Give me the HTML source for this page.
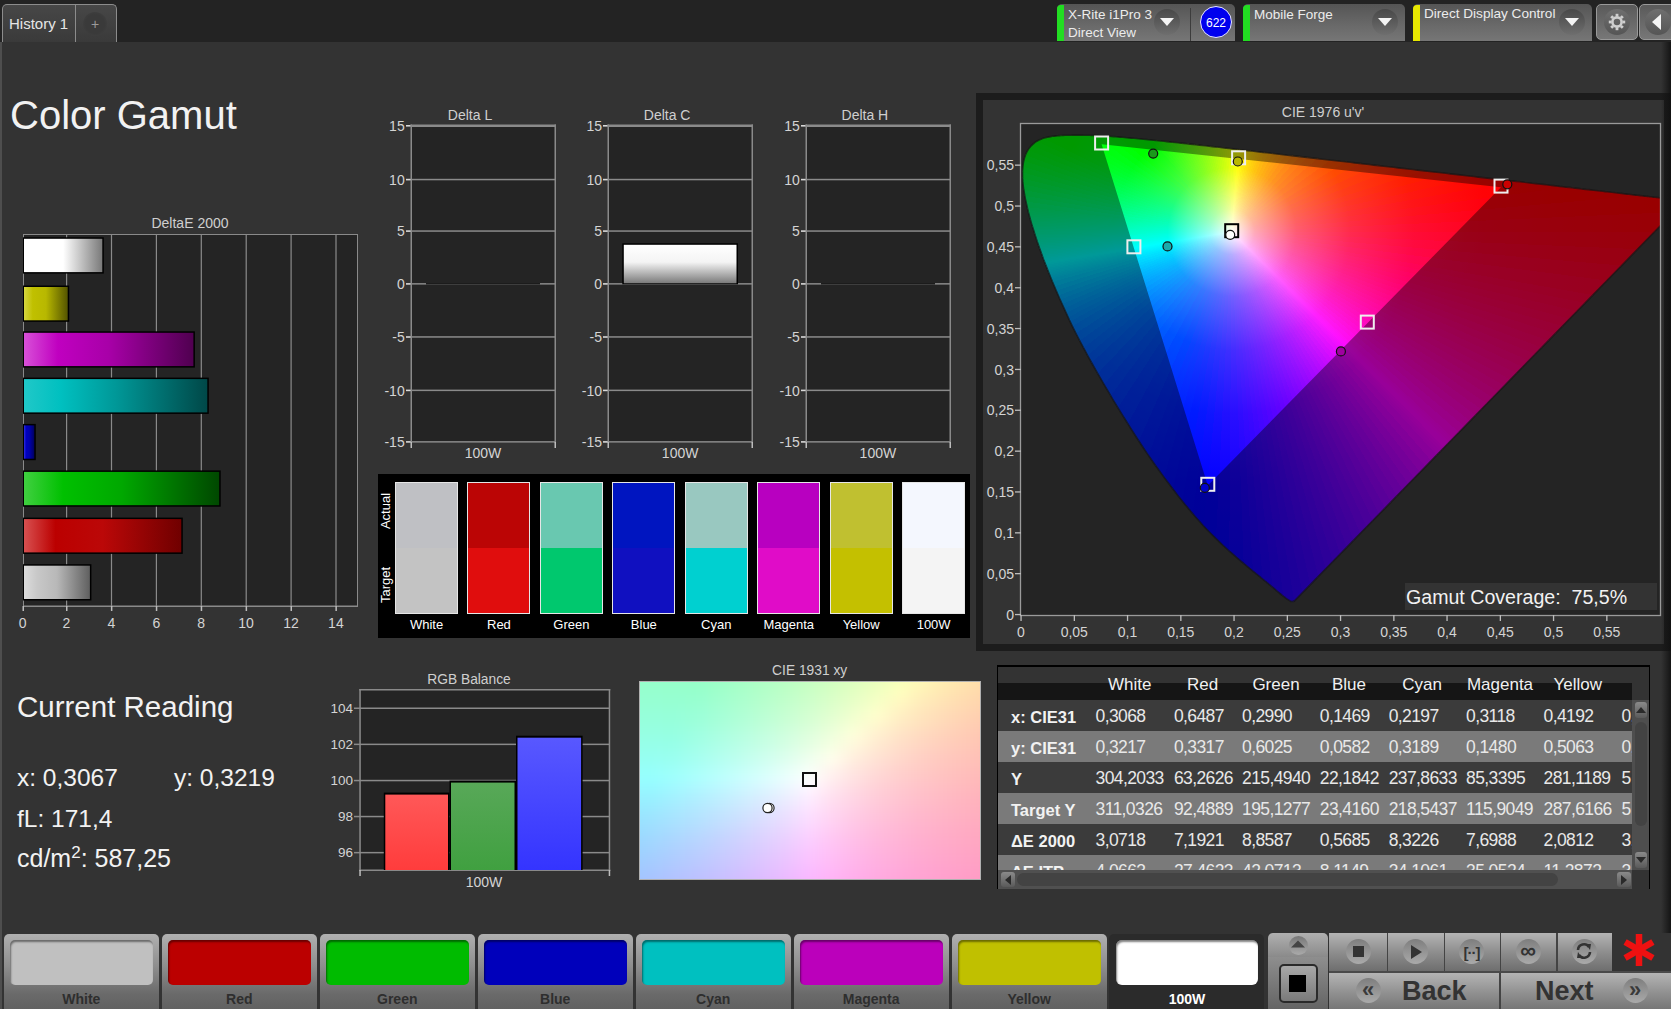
<!DOCTYPE html><html><head><meta charset="utf-8"><style>
html,body{margin:0;padding:0;}
body{width:1671px;height:1009px;overflow:hidden;position:relative;background:#333333;font-family:"Liberation Sans", sans-serif;}
.t{position:absolute;white-space:nowrap;line-height:1;}
.r{position:absolute;box-sizing:border-box;}
svg{position:absolute;left:0;top:0;}
</style></head><body>
<div class="r" style="left:0px;top:0px;width:1671px;height:42px;background:#232323"></div>
<div class="r" style="left:0px;top:42px;width:2px;height:967px;background:#4e4e4e"></div>
<div class="r" style="left:2px;top:4px;width:115px;height:38px;border:1px solid #8c8c8c;border-bottom:none;border-radius:5px 5px 0 0;background:linear-gradient(#474747,#3a3a3a)"></div>
<div class="r" style="left:75px;top:5px;width:1px;height:37px;background:#8c8c8c"></div>
<div class="r" style="left:83px;top:12px;width:24px;height:24px;border-radius:12px;background:radial-gradient(#3a3a3a 55%,#444 100%)"></div>
<div class="t" style="left:-105px;width:400px;text-align:center;top:17.15px;font-size:14px;color:#9a9a9a;font-weight:400;">+</div>
<div class="t" style="left:9px;top:16.3px;font-size:15px;color:#e6e6e6;font-weight:400;">History 1</div>
<div class="r" style="left:1057px;top:4px;width:178px;height:37px;border-radius:5px 5px 0 0;background:linear-gradient(#555 0%,#6a6a6a 60%,#767676 100%)"></div>
<div class="r" style="left:1057px;top:5px;width:7px;height:36px;background:#22dd22;border-radius:4px 0 0 0"></div>
<div class="r" style="left:1243px;top:4px;width:162px;height:37px;border-radius:5px 5px 0 0;background:linear-gradient(#555 0%,#6a6a6a 60%,#767676 100%)"></div>
<div class="r" style="left:1243px;top:5px;width:7px;height:36px;background:#22dd22;border-radius:4px 0 0 0"></div>
<div class="r" style="left:1413px;top:4px;width:179px;height:37px;border-radius:5px 5px 0 0;background:linear-gradient(#555 0%,#6a6a6a 60%,#767676 100%)"></div>
<div class="r" style="left:1413px;top:5px;width:7px;height:36px;background:#e8e800;border-radius:4px 0 0 0"></div>
<div class="r" style="left:1190px;top:8px;width:1px;height:33px;background:#3c3c3c"></div>
<div class="r" style="left:1200px;top:6px;width:32px;height:32px;border-radius:16px;background:#0000ee;border:1.5px solid #e8e8ff"></div>
<div class="t" style="left:1016px;width:400px;text-align:center;top:16.84px;font-size:12px;color:#ffffff;font-weight:400;">622</div>
<div class="t" style="left:1068px;top:7.57px;font-size:13.5px;color:#ececec;font-weight:400;">X-Rite i1Pro 3</div>
<div class="t" style="left:1068px;top:25.57px;font-size:13.5px;color:#ececec;font-weight:400;">Direct View</div>
<div class="t" style="left:1254px;top:7.57px;font-size:13.5px;color:#ececec;font-weight:400;">Mobile Forge</div>
<div class="t" style="left:1424px;top:7.49px;font-size:13.6px;color:#ececec;font-weight:400;">Direct Display Control</div>
<div class="r" style="left:1154px;top:9px;width:26px;height:26px;border-radius:13px;background:linear-gradient(#484848,#6e6e6e)"></div>
<svg style="left:1160px;top:18px" width="14" height="9"><path d="M0 0H14L7 8Z" fill="#f4f4f4"/></svg>
<div class="r" style="left:1372px;top:9px;width:26px;height:26px;border-radius:13px;background:linear-gradient(#484848,#6e6e6e)"></div>
<svg style="left:1378px;top:18px" width="14" height="9"><path d="M0 0H14L7 8Z" fill="#f4f4f4"/></svg>
<div class="r" style="left:1559px;top:9px;width:26px;height:26px;border-radius:13px;background:linear-gradient(#484848,#6e6e6e)"></div>
<svg style="left:1565px;top:18px" width="14" height="9"><path d="M0 0H14L7 8Z" fill="#f4f4f4"/></svg>
<div class="r" style="left:1596px;top:4px;width:42px;height:36px;border:1px solid #999;border-radius:5px;background:linear-gradient(#5a5a5a,#777)"></div>
<div class="r" style="left:1604px;top:9px;width:26px;height:26px;border-radius:13px;background:linear-gradient(#6f6f6f,#555)"></div>
<svg style="left:1607px;top:12px" width="20" height="20" viewBox="-10 -10 20 20"><g fill="none" stroke="#cfcfcf" stroke-width="2.6"><circle r="4.6"/></g><g stroke="#cfcfcf" stroke-width="2.8"><line x1="5.50" y1="0.00" x2="8.20" y2="0.00"/><line x1="3.89" y1="3.89" x2="5.80" y2="5.80"/><line x1="0.00" y1="5.50" x2="0.00" y2="8.20"/><line x1="-3.89" y1="3.89" x2="-5.80" y2="5.80"/><line x1="-5.50" y1="0.00" x2="-8.20" y2="0.00"/><line x1="-3.89" y1="-3.89" x2="-5.80" y2="-5.80"/><line x1="-0.00" y1="-5.50" x2="-0.00" y2="-8.20"/><line x1="3.89" y1="-3.89" x2="5.80" y2="-5.80"/></g></svg>
<div class="r" style="left:1639px;top:4px;width:40px;height:36px;border:1px solid #999;border-radius:5px;background:linear-gradient(#5a5a5a,#777)"></div>
<div class="r" style="left:1645px;top:9px;width:26px;height:26px;border-radius:13px;background:linear-gradient(#6f6f6f,#555)"></div>
<svg style="left:1652px;top:14px" width="10" height="16"><path d="M9 0V16L0 8Z" fill="#f4f4f4"/></svg>
<div class="t" style="left:10px;top:95.14px;font-size:40px;color:#f2f2f2;font-weight:400;">Color Gamut</div>
<div class="t" style="left:-10px;width:400px;text-align:center;top:216.15px;font-size:14px;color:#cfcfcf;font-weight:400;">DeltaE 2000</div>
<div class="r" style="left:23px;top:234px;width:335px;height:373px;background:#242424;border:1px solid #8a8a8a;border-right:none"></div>
<svg width="1671" height="1009" style="left:0;top:0"><rect x="66.0" y="234" width="1.2" height="373" fill="#8a8a8a"/><rect x="110.9" y="234" width="1.2" height="373" fill="#8a8a8a"/><rect x="155.8" y="234" width="1.2" height="373" fill="#8a8a8a"/><rect x="200.7" y="234" width="1.2" height="373" fill="#8a8a8a"/><rect x="245.6" y="234" width="1.2" height="373" fill="#8a8a8a"/><rect x="290.5" y="234" width="1.2" height="373" fill="#8a8a8a"/><rect x="335.4" y="234" width="1.2" height="373" fill="#8a8a8a"/><rect x="357" y="234" width="1" height="373" fill="#8a8a8a"/><rect x="23" y="605.5" width="335" height="1.5" fill="#8a8a8a"/><rect x="22.5" y="606" width="1.5" height="5" fill="#bdbdbd"/><rect x="66.0" y="606" width="1.5" height="5" fill="#bdbdbd"/><rect x="110.9" y="606" width="1.5" height="5" fill="#bdbdbd"/><rect x="155.8" y="606" width="1.5" height="5" fill="#bdbdbd"/><rect x="200.7" y="606" width="1.5" height="5" fill="#bdbdbd"/><rect x="245.6" y="606" width="1.5" height="5" fill="#bdbdbd"/><rect x="290.5" y="606" width="1.5" height="5" fill="#bdbdbd"/><rect x="335.4" y="606" width="1.5" height="5" fill="#bdbdbd"/><linearGradient id="db0" x1="0" x2="1" y1="0" y2="0" gradientTransform="rotate(0)"><stop offset="0" stop-color="#ffffff"/><stop offset="0.2" stop-color="#ffffff"/><stop offset="0.5" stop-color="#ffffff"/><stop offset="1" stop-color="#7a7a7a"/></linearGradient><rect x="23" y="237.3" width="80.8" height="36.3" fill="#000"/><rect x="24" y="238.8" width="78.3" height="33.3" fill="url(#db0)"/><linearGradient id="db1" x1="0" x2="1" y1="0" y2="0" gradientTransform="rotate(0)"><stop offset="0" stop-color="#d8d840"/><stop offset="0.2" stop-color="#c0c000"/><stop offset="0.5" stop-color="#b8b800"/><stop offset="1" stop-color="#555500"/></linearGradient><rect x="23" y="285.5" width="46.2" height="36.3" fill="#000"/><rect x="24" y="287.0" width="43.7" height="33.3" fill="url(#db1)"/><linearGradient id="db2" x1="0" x2="1" y1="0" y2="0" gradientTransform="rotate(0)"><stop offset="0" stop-color="#d850d8"/><stop offset="0.2" stop-color="#c000c0"/><stop offset="0.5" stop-color="#a800a8"/><stop offset="1" stop-color="#500050"/></linearGradient><rect x="23" y="331.3" width="171.9" height="36.3" fill="#000"/><rect x="24" y="332.8" width="169.4" height="33.3" fill="url(#db2)"/><linearGradient id="db3" x1="0" x2="1" y1="0" y2="0" gradientTransform="rotate(0)"><stop offset="0" stop-color="#20c8c8"/><stop offset="0.2" stop-color="#00c0c0"/><stop offset="0.5" stop-color="#009898"/><stop offset="1" stop-color="#004848"/></linearGradient><rect x="23" y="377.6" width="185.8" height="36.3" fill="#000"/><rect x="24" y="379.1" width="183.3" height="33.3" fill="url(#db3)"/><linearGradient id="db4" x1="0" x2="1" y1="0" y2="0" gradientTransform="rotate(0)"><stop offset="0" stop-color="#3030e0"/><stop offset="0.2" stop-color="#0000c0"/><stop offset="0.5" stop-color="#0000b0"/><stop offset="1" stop-color="#000060"/></linearGradient><rect x="23" y="423.9" width="12.8" height="36.3" fill="#000"/><rect x="24" y="425.4" width="10.3" height="33.3" fill="url(#db4)"/><linearGradient id="db5" x1="0" x2="1" y1="0" y2="0" gradientTransform="rotate(0)"><stop offset="0" stop-color="#40d040"/><stop offset="0.2" stop-color="#00c000"/><stop offset="0.5" stop-color="#00a800"/><stop offset="1" stop-color="#004800"/></linearGradient><rect x="23" y="470.4" width="197.7" height="36.3" fill="#000"/><rect x="24" y="471.9" width="195.2" height="33.3" fill="url(#db5)"/><linearGradient id="db6" x1="0" x2="1" y1="0" y2="0" gradientTransform="rotate(0)"><stop offset="0" stop-color="#d85050"/><stop offset="0.2" stop-color="#bb0000"/><stop offset="0.5" stop-color="#bb0808"/><stop offset="1" stop-color="#700000"/></linearGradient><rect x="23" y="517.6" width="159.8" height="36.3" fill="#000"/><rect x="24" y="519.1" width="157.3" height="33.3" fill="url(#db6)"/><linearGradient id="db7" x1="0" x2="1" y1="0" y2="0" gradientTransform="rotate(0)"><stop offset="0" stop-color="#dcdcdc"/><stop offset="0.2" stop-color="#c8c8c8"/><stop offset="0.5" stop-color="#b8b8b8"/><stop offset="1" stop-color="#606060"/></linearGradient><rect x="23" y="564.2" width="68.4" height="36.3" fill="#000"/><rect x="24" y="565.7" width="65.9" height="33.3" fill="url(#db7)"/></svg>
<div class="t" style="left:-177.4px;width:400px;text-align:center;top:616.15px;font-size:14px;color:#d4d4d4;font-weight:400;">0</div>
<div class="t" style="left:-133.5px;width:400px;text-align:center;top:616.15px;font-size:14px;color:#d4d4d4;font-weight:400;">2</div>
<div class="t" style="left:-88.6px;width:400px;text-align:center;top:616.15px;font-size:14px;color:#d4d4d4;font-weight:400;">4</div>
<div class="t" style="left:-43.70000000000002px;width:400px;text-align:center;top:616.15px;font-size:14px;color:#d4d4d4;font-weight:400;">6</div>
<div class="t" style="left:1.1999999999999886px;width:400px;text-align:center;top:616.15px;font-size:14px;color:#d4d4d4;font-weight:400;">8</div>
<div class="t" style="left:46.099999999999994px;width:400px;text-align:center;top:616.15px;font-size:14px;color:#d4d4d4;font-weight:400;">10</div>
<div class="t" style="left:91.0px;width:400px;text-align:center;top:616.15px;font-size:14px;color:#d4d4d4;font-weight:400;">12</div>
<div class="t" style="left:135.90000000000003px;width:400px;text-align:center;top:616.15px;font-size:14px;color:#d4d4d4;font-weight:400;">14</div>
<svg width="1671" height="1009" style="left:0;top:0"><rect x="411" y="125" width="144" height="317" fill="#242424"/><rect x="411" y="125.0" width="145" height="1.5" fill="#8a8a8a"/><rect x="406" y="125.0" width="5" height="1.6" fill="#d8d8d8"/><rect x="411" y="178.8" width="145" height="1.5" fill="#8a8a8a"/><rect x="406" y="178.8" width="5" height="1.6" fill="#d8d8d8"/><rect x="411" y="230.3" width="145" height="1.5" fill="#8a8a8a"/><rect x="406" y="230.3" width="5" height="1.6" fill="#d8d8d8"/><rect x="411" y="283.1" width="145" height="1.5" fill="#8a8a8a"/><rect x="406" y="283.1" width="5" height="1.6" fill="#d8d8d8"/><rect x="411" y="336.2" width="145" height="1.5" fill="#8a8a8a"/><rect x="406" y="336.2" width="5" height="1.6" fill="#d8d8d8"/><rect x="411" y="389.6" width="145" height="1.5" fill="#8a8a8a"/><rect x="406" y="389.6" width="5" height="1.6" fill="#d8d8d8"/><rect x="411" y="441.1" width="145" height="1.5" fill="#8a8a8a"/><rect x="406" y="441.1" width="5" height="1.6" fill="#d8d8d8"/><rect x="410.5" y="124.5" width="1.5" height="318" fill="#8a8a8a"/><rect x="554.5" y="124.5" width="1.5" height="318" fill="#8a8a8a"/><rect x="410.5" y="124.5" width="145.5" height="2.5" fill="#8a8a8a"/><rect x="410.5" y="442" width="1.5" height="6" fill="#bdbdbd"/><rect x="554.5" y="442" width="1.5" height="6" fill="#bdbdbd"/><rect x="426" y="283" width="114" height="1.5" fill="#1c1c1c"/><rect x="608" y="125" width="144" height="317" fill="#242424"/><rect x="608" y="125.0" width="145" height="1.5" fill="#8a8a8a"/><rect x="603" y="125.0" width="5" height="1.6" fill="#d8d8d8"/><rect x="608" y="178.8" width="145" height="1.5" fill="#8a8a8a"/><rect x="603" y="178.8" width="5" height="1.6" fill="#d8d8d8"/><rect x="608" y="230.3" width="145" height="1.5" fill="#8a8a8a"/><rect x="603" y="230.3" width="5" height="1.6" fill="#d8d8d8"/><rect x="608" y="283.1" width="145" height="1.5" fill="#8a8a8a"/><rect x="603" y="283.1" width="5" height="1.6" fill="#d8d8d8"/><rect x="608" y="336.2" width="145" height="1.5" fill="#8a8a8a"/><rect x="603" y="336.2" width="5" height="1.6" fill="#d8d8d8"/><rect x="608" y="389.6" width="145" height="1.5" fill="#8a8a8a"/><rect x="603" y="389.6" width="5" height="1.6" fill="#d8d8d8"/><rect x="608" y="441.1" width="145" height="1.5" fill="#8a8a8a"/><rect x="603" y="441.1" width="5" height="1.6" fill="#d8d8d8"/><rect x="607.5" y="124.5" width="1.5" height="318" fill="#8a8a8a"/><rect x="751.5" y="124.5" width="1.5" height="318" fill="#8a8a8a"/><rect x="607.5" y="124.5" width="145.5" height="2.5" fill="#8a8a8a"/><rect x="607.5" y="442" width="1.5" height="6" fill="#bdbdbd"/><rect x="751.5" y="442" width="1.5" height="6" fill="#bdbdbd"/><linearGradient id="dcb" x1="0" x2="0" y1="0" y2="1"><stop offset="0" stop-color="#fff"/><stop offset="0.45" stop-color="#f4f4f4"/><stop offset="1" stop-color="#7a7a7a"/></linearGradient><rect x="622.3" y="243.3" width="115.7" height="41" fill="#000"/><rect x="623.8" y="244.8" width="112.7" height="38.5" fill="url(#dcb)"/><rect x="806" y="125" width="144" height="317" fill="#242424"/><rect x="806" y="125.0" width="145" height="1.5" fill="#8a8a8a"/><rect x="801" y="125.0" width="5" height="1.6" fill="#d8d8d8"/><rect x="806" y="178.8" width="145" height="1.5" fill="#8a8a8a"/><rect x="801" y="178.8" width="5" height="1.6" fill="#d8d8d8"/><rect x="806" y="230.3" width="145" height="1.5" fill="#8a8a8a"/><rect x="801" y="230.3" width="5" height="1.6" fill="#d8d8d8"/><rect x="806" y="283.1" width="145" height="1.5" fill="#8a8a8a"/><rect x="801" y="283.1" width="5" height="1.6" fill="#d8d8d8"/><rect x="806" y="336.2" width="145" height="1.5" fill="#8a8a8a"/><rect x="801" y="336.2" width="5" height="1.6" fill="#d8d8d8"/><rect x="806" y="389.6" width="145" height="1.5" fill="#8a8a8a"/><rect x="801" y="389.6" width="5" height="1.6" fill="#d8d8d8"/><rect x="806" y="441.1" width="145" height="1.5" fill="#8a8a8a"/><rect x="801" y="441.1" width="5" height="1.6" fill="#d8d8d8"/><rect x="805.5" y="124.5" width="1.5" height="318" fill="#8a8a8a"/><rect x="949.5" y="124.5" width="1.5" height="318" fill="#8a8a8a"/><rect x="805.5" y="124.5" width="145.5" height="2.5" fill="#8a8a8a"/><rect x="805.5" y="442" width="1.5" height="6" fill="#bdbdbd"/><rect x="949.5" y="442" width="1.5" height="6" fill="#bdbdbd"/><rect x="821" y="283" width="114" height="1.5" fill="#1c1c1c"/></svg>
<div class="t" style="left:270.0px;width:400px;text-align:center;top:108.15px;font-size:14px;color:#cfcfcf;font-weight:400;">Delta L</div>
<div class="t" style="left:4.699999999999989px;width:400px;text-align:right;top:118.85px;font-size:14px;color:#d4d4d4;font-weight:400;">15</div>
<div class="t" style="left:4.699999999999989px;width:400px;text-align:right;top:172.65px;font-size:14px;color:#d4d4d4;font-weight:400;">10</div>
<div class="t" style="left:4.699999999999989px;width:400px;text-align:right;top:224.25px;font-size:14px;color:#d4d4d4;font-weight:400;">5</div>
<div class="t" style="left:4.699999999999989px;width:400px;text-align:right;top:277.05px;font-size:14px;color:#d4d4d4;font-weight:400;">0</div>
<div class="t" style="left:4.699999999999989px;width:400px;text-align:right;top:330.15px;font-size:14px;color:#d4d4d4;font-weight:400;">-5</div>
<div class="t" style="left:4.699999999999989px;width:400px;text-align:right;top:383.55px;font-size:14px;color:#d4d4d4;font-weight:400;">-10</div>
<div class="t" style="left:4.699999999999989px;width:400px;text-align:right;top:434.95px;font-size:14px;color:#d4d4d4;font-weight:400;">-15</div>
<div class="t" style="left:283.0px;width:400px;text-align:center;top:446.15px;font-size:14px;color:#d4d4d4;font-weight:400;">100W</div>
<div class="t" style="left:467.15px;width:400px;text-align:center;top:108.15px;font-size:14px;color:#cfcfcf;font-weight:400;">Delta C</div>
<div class="t" style="left:202px;width:400px;text-align:right;top:118.85px;font-size:14px;color:#d4d4d4;font-weight:400;">15</div>
<div class="t" style="left:202px;width:400px;text-align:right;top:172.65px;font-size:14px;color:#d4d4d4;font-weight:400;">10</div>
<div class="t" style="left:202px;width:400px;text-align:right;top:224.25px;font-size:14px;color:#d4d4d4;font-weight:400;">5</div>
<div class="t" style="left:202px;width:400px;text-align:right;top:277.05px;font-size:14px;color:#d4d4d4;font-weight:400;">0</div>
<div class="t" style="left:202px;width:400px;text-align:right;top:330.15px;font-size:14px;color:#d4d4d4;font-weight:400;">-5</div>
<div class="t" style="left:202px;width:400px;text-align:right;top:383.55px;font-size:14px;color:#d4d4d4;font-weight:400;">-10</div>
<div class="t" style="left:202px;width:400px;text-align:right;top:434.95px;font-size:14px;color:#d4d4d4;font-weight:400;">-15</div>
<div class="t" style="left:480.15px;width:400px;text-align:center;top:446.15px;font-size:14px;color:#d4d4d4;font-weight:400;">100W</div>
<div class="t" style="left:664.9px;width:400px;text-align:center;top:108.15px;font-size:14px;color:#cfcfcf;font-weight:400;">Delta H</div>
<div class="t" style="left:399.79999999999995px;width:400px;text-align:right;top:118.85px;font-size:14px;color:#d4d4d4;font-weight:400;">15</div>
<div class="t" style="left:399.79999999999995px;width:400px;text-align:right;top:172.65px;font-size:14px;color:#d4d4d4;font-weight:400;">10</div>
<div class="t" style="left:399.79999999999995px;width:400px;text-align:right;top:224.25px;font-size:14px;color:#d4d4d4;font-weight:400;">5</div>
<div class="t" style="left:399.79999999999995px;width:400px;text-align:right;top:277.05px;font-size:14px;color:#d4d4d4;font-weight:400;">0</div>
<div class="t" style="left:399.79999999999995px;width:400px;text-align:right;top:330.15px;font-size:14px;color:#d4d4d4;font-weight:400;">-5</div>
<div class="t" style="left:399.79999999999995px;width:400px;text-align:right;top:383.55px;font-size:14px;color:#d4d4d4;font-weight:400;">-10</div>
<div class="t" style="left:399.79999999999995px;width:400px;text-align:right;top:434.95px;font-size:14px;color:#d4d4d4;font-weight:400;">-15</div>
<div class="t" style="left:677.9px;width:400px;text-align:center;top:446.15px;font-size:14px;color:#d4d4d4;font-weight:400;">100W</div>
<div class="r" style="left:378px;top:474px;width:592px;height:164px;background:#000"></div>
<div class="r" style="left:395.0px;top:482px;width:63px;height:132px;border:1px solid #e6e6e6;background:linear-gradient(#bfc0c4 50%,#c3c3c3 50%)"></div>
<div class="t" style="left:226.5px;width:400px;text-align:center;top:618.0px;font-size:13px;color:#ffffff;font-weight:400;">White</div>
<div class="r" style="left:467.4px;top:482px;width:63px;height:132px;border:1px solid #e6e6e6;background:linear-gradient(#bb0505 50%,#e00d0d 50%)"></div>
<div class="t" style="left:298.95px;width:400px;text-align:center;top:618.0px;font-size:13px;color:#ffffff;font-weight:400;">Red</div>
<div class="r" style="left:539.9px;top:482px;width:63px;height:132px;border:1px solid #e6e6e6;background:linear-gradient(#69c8b0 50%,#00c86e 50%)"></div>
<div class="t" style="left:371.4px;width:400px;text-align:center;top:618.0px;font-size:13px;color:#ffffff;font-weight:400;">Green</div>
<div class="r" style="left:612.4px;top:482px;width:63px;height:132px;border:1px solid #e6e6e6;background:linear-gradient(#0015c0 50%,#1010c0 50%)"></div>
<div class="t" style="left:443.85px;width:400px;text-align:center;top:618.0px;font-size:13px;color:#ffffff;font-weight:400;">Blue</div>
<div class="r" style="left:684.8px;top:482px;width:63px;height:132px;border:1px solid #e6e6e6;background:linear-gradient(#99c8c0 50%,#00d0d0 50%)"></div>
<div class="t" style="left:516.3px;width:400px;text-align:center;top:618.0px;font-size:13px;color:#ffffff;font-weight:400;">Cyan</div>
<div class="r" style="left:757.2px;top:482px;width:63px;height:132px;border:1px solid #e6e6e6;background:linear-gradient(#b800c0 50%,#e00cc8 50%)"></div>
<div class="t" style="left:588.75px;width:400px;text-align:center;top:618.0px;font-size:13px;color:#ffffff;font-weight:400;">Magenta</div>
<div class="r" style="left:829.7px;top:482px;width:63px;height:132px;border:1px solid #e6e6e6;background:linear-gradient(#c0c030 50%,#c4c000 50%)"></div>
<div class="t" style="left:661.2px;width:400px;text-align:center;top:618.0px;font-size:13px;color:#ffffff;font-weight:400;">Yellow</div>
<div class="r" style="left:902.2px;top:482px;width:63px;height:132px;border:1px solid #e6e6e6;background:linear-gradient(#f4f7fe 50%,#f4f4f4 50%)"></div>
<div class="t" style="left:733.6500000000001px;width:400px;text-align:center;top:618.0px;font-size:13px;color:#ffffff;font-weight:400;">100W</div>
<div class="t" style="left:356px;top:503px;width:60px;height:16px;text-align:center;font-size:13px;line-height:16px;color:#fff;transform:rotate(-90deg)">Actual</div>
<div class="t" style="left:356px;top:577px;width:60px;height:16px;text-align:center;font-size:13px;line-height:16px;color:#fff;transform:rotate(-90deg)">Target</div>
<div class="r" style="left:976px;top:93px;width:695px;height:558px;background:#1c1c1c"></div>
<div class="r" style="left:983px;top:100px;width:681px;height:544px;background:#333333"></div>
<div class="t" style="left:1123px;width:400px;text-align:center;top:105.15px;font-size:14px;color:#cfcfcf;font-weight:400;">CIE 1976 u'v'</div>
<svg width="1671" height="1009" style="left:0;top:0"><defs><linearGradient id="f0" gradientUnits="userSpaceOnUse" x1="1232" y1="232" x2="1952" y2="248"><stop offset="0" stop-color="#ffffff"/><stop offset="0.0316" stop-color="#ffaab9"/><stop offset="0.0894" stop-color="#ff5b78"/><stop offset="0.164" stop-color="#ff2a50"/><stop offset="0.253" stop-color="#ff0c37"/><stop offset="0.354" stop-color="#ff0026"/><stop offset="0.465" stop-color="#ff001b"/><stop offset="0.586" stop-color="#ff0013"/></linearGradient><linearGradient id="f1" gradientUnits="userSpaceOnUse" x1="1232" y1="232" x2="1950" y2="279"><stop offset="0" stop-color="#ffffff"/><stop offset="0.0316" stop-color="#ffa9bc"/><stop offset="0.0894" stop-color="#ff5a7e"/><stop offset="0.164" stop-color="#ff2857"/><stop offset="0.253" stop-color="#ff0a3f"/><stop offset="0.354" stop-color="#ff002f"/><stop offset="0.465" stop-color="#ff0024"/><stop offset="0.586" stop-color="#ff001d"/></linearGradient><linearGradient id="f2" gradientUnits="userSpaceOnUse" x1="1232" y1="232" x2="1947" y2="310"><stop offset="0" stop-color="#ffffff"/><stop offset="0.0316" stop-color="#ffa9bf"/><stop offset="0.0894" stop-color="#ff5984"/><stop offset="0.164" stop-color="#ff275e"/><stop offset="0.253" stop-color="#ff0847"/><stop offset="0.354" stop-color="#ff0038"/><stop offset="0.465" stop-color="#ff002e"/><stop offset="0.586" stop-color="#ff0026"/></linearGradient><linearGradient id="f3" gradientUnits="userSpaceOnUse" x1="1232" y1="232" x2="1943" y2="341"><stop offset="0" stop-color="#ffffff"/><stop offset="0.0316" stop-color="#ffa9c2"/><stop offset="0.0894" stop-color="#ff588a"/><stop offset="0.164" stop-color="#ff2566"/><stop offset="0.253" stop-color="#ff0650"/><stop offset="0.354" stop-color="#ff0041"/><stop offset="0.465" stop-color="#ff0037"/><stop offset="0.586" stop-color="#ff0030"/></linearGradient><linearGradient id="f4" gradientUnits="userSpaceOnUse" x1="1232" y1="232" x2="1939" y2="366"><stop offset="0" stop-color="#ffffff"/><stop offset="0.0316" stop-color="#ffa9c5"/><stop offset="0.0894" stop-color="#ff588f"/><stop offset="0.164" stop-color="#ff246c"/><stop offset="0.253" stop-color="#ff0457"/><stop offset="0.354" stop-color="#ff0049"/><stop offset="0.465" stop-color="#ff003f"/><stop offset="0.586" stop-color="#ff0038"/></linearGradient><linearGradient id="f5" gradientUnits="userSpaceOnUse" x1="1232" y1="232" x2="1935" y2="385"><stop offset="0" stop-color="#ffffff"/><stop offset="0.0316" stop-color="#ffa9c7"/><stop offset="0.0894" stop-color="#ff5793"/><stop offset="0.164" stop-color="#ff2471"/><stop offset="0.253" stop-color="#ff035c"/><stop offset="0.354" stop-color="#ff004e"/><stop offset="0.465" stop-color="#ff0045"/><stop offset="0.586" stop-color="#ff003e"/></linearGradient><linearGradient id="f6" gradientUnits="userSpaceOnUse" x1="1232" y1="232" x2="1931" y2="403"><stop offset="0" stop-color="#ffffff"/><stop offset="0.0316" stop-color="#ffa9ca"/><stop offset="0.0894" stop-color="#ff5797"/><stop offset="0.164" stop-color="#ff2376"/><stop offset="0.253" stop-color="#ff0262"/><stop offset="0.354" stop-color="#ff0054"/><stop offset="0.465" stop-color="#ff004b"/><stop offset="0.586" stop-color="#ff0044"/></linearGradient><linearGradient id="f7" gradientUnits="userSpaceOnUse" x1="1232" y1="232" x2="1926" y2="421"><stop offset="0" stop-color="#ffffff"/><stop offset="0.0316" stop-color="#ffa9cc"/><stop offset="0.0894" stop-color="#ff579b"/><stop offset="0.164" stop-color="#ff227b"/><stop offset="0.253" stop-color="#ff0167"/><stop offset="0.354" stop-color="#ff005a"/><stop offset="0.465" stop-color="#ff0051"/><stop offset="0.586" stop-color="#ff004b"/></linearGradient><linearGradient id="f8" gradientUnits="userSpaceOnUse" x1="1232" y1="232" x2="1921" y2="439"><stop offset="0" stop-color="#ffffff"/><stop offset="0.0316" stop-color="#ffa9ce"/><stop offset="0.0894" stop-color="#ff579f"/><stop offset="0.164" stop-color="#ff2280"/><stop offset="0.253" stop-color="#ff006d"/><stop offset="0.354" stop-color="#ff0060"/><stop offset="0.465" stop-color="#ff0058"/><stop offset="0.586" stop-color="#ff0051"/></linearGradient><linearGradient id="f9" gradientUnits="userSpaceOnUse" x1="1232" y1="232" x2="1915" y2="457"><stop offset="0" stop-color="#ffffff"/><stop offset="0.0316" stop-color="#ffa9d0"/><stop offset="0.0894" stop-color="#ff57a3"/><stop offset="0.164" stop-color="#ff2186"/><stop offset="0.253" stop-color="#ff0073"/><stop offset="0.354" stop-color="#ff0067"/><stop offset="0.465" stop-color="#ff005e"/><stop offset="0.586" stop-color="#ff0058"/></linearGradient><linearGradient id="f10" gradientUnits="userSpaceOnUse" x1="1232" y1="232" x2="1909" y2="475"><stop offset="0" stop-color="#ffffff"/><stop offset="0.0316" stop-color="#ffaad3"/><stop offset="0.0894" stop-color="#ff56a7"/><stop offset="0.164" stop-color="#ff208b"/><stop offset="0.253" stop-color="#ff0079"/><stop offset="0.354" stop-color="#ff006d"/><stop offset="0.465" stop-color="#ff0065"/></linearGradient><linearGradient id="f11" gradientUnits="userSpaceOnUse" x1="1232" y1="232" x2="1903" y2="493"><stop offset="0" stop-color="#ffffff"/><stop offset="0.0316" stop-color="#ffaad5"/><stop offset="0.0894" stop-color="#ff56ac"/><stop offset="0.164" stop-color="#ff2091"/><stop offset="0.253" stop-color="#ff007f"/><stop offset="0.354" stop-color="#ff0074"/><stop offset="0.465" stop-color="#ff006c"/></linearGradient><linearGradient id="f12" gradientUnits="userSpaceOnUse" x1="1232" y1="232" x2="1896" y2="510"><stop offset="0" stop-color="#ffffff"/><stop offset="0.0316" stop-color="#ffaad7"/><stop offset="0.0894" stop-color="#ff57b0"/><stop offset="0.164" stop-color="#ff2096"/><stop offset="0.253" stop-color="#ff0086"/><stop offset="0.354" stop-color="#ff007b"/><stop offset="0.465" stop-color="#ff0073"/></linearGradient><linearGradient id="f13" gradientUnits="userSpaceOnUse" x1="1232" y1="232" x2="1888" y2="528"><stop offset="0" stop-color="#ffffff"/><stop offset="0.0316" stop-color="#ffabda"/><stop offset="0.0894" stop-color="#ff57b5"/><stop offset="0.164" stop-color="#ff1f9c"/><stop offset="0.253" stop-color="#ff008c"/><stop offset="0.354" stop-color="#ff0082"/><stop offset="0.465" stop-color="#ff007a"/></linearGradient><linearGradient id="f14" gradientUnits="userSpaceOnUse" x1="1232" y1="232" x2="1880" y2="545"><stop offset="0" stop-color="#ffffff"/><stop offset="0.0316" stop-color="#ffabdc"/><stop offset="0.0894" stop-color="#ff57b9"/><stop offset="0.164" stop-color="#ff1fa2"/><stop offset="0.253" stop-color="#ff0093"/><stop offset="0.354" stop-color="#ff0089"/><stop offset="0.465" stop-color="#ff0082"/></linearGradient><linearGradient id="f15" gradientUnits="userSpaceOnUse" x1="1232" y1="232" x2="1872" y2="562"><stop offset="0" stop-color="#ffffff"/><stop offset="0.0316" stop-color="#ffacdf"/><stop offset="0.0894" stop-color="#ff57be"/><stop offset="0.164" stop-color="#ff1fa8"/><stop offset="0.253" stop-color="#ff009a"/><stop offset="0.354" stop-color="#ff0090"/><stop offset="0.465" stop-color="#ff008a"/></linearGradient><linearGradient id="f16" gradientUnits="userSpaceOnUse" x1="1232" y1="232" x2="1863" y2="578"><stop offset="0" stop-color="#ffffff"/><stop offset="0.0316" stop-color="#fface1"/><stop offset="0.0894" stop-color="#ff58c3"/><stop offset="0.164" stop-color="#ff1eae"/><stop offset="0.253" stop-color="#ff00a1"/><stop offset="0.354" stop-color="#ff0098"/><stop offset="0.465" stop-color="#ff0092"/></linearGradient><linearGradient id="f17" gradientUnits="userSpaceOnUse" x1="1232" y1="232" x2="1854" y2="595"><stop offset="0" stop-color="#ffffff"/><stop offset="0.0316" stop-color="#ffade4"/><stop offset="0.0894" stop-color="#ff58c8"/><stop offset="0.164" stop-color="#ff1eb5"/><stop offset="0.253" stop-color="#ff00a8"/><stop offset="0.354" stop-color="#ff00a0"/><stop offset="0.465" stop-color="#ff009a"/></linearGradient><linearGradient id="f18" gradientUnits="userSpaceOnUse" x1="1232" y1="232" x2="1844" y2="611"><stop offset="0" stop-color="#ffffff"/><stop offset="0.0316" stop-color="#ffade7"/><stop offset="0.0894" stop-color="#ff58cd"/><stop offset="0.164" stop-color="#ff1ebc"/><stop offset="0.253" stop-color="#ff00b0"/><stop offset="0.354" stop-color="#ff00a8"/><stop offset="0.465" stop-color="#ff00a3"/></linearGradient><linearGradient id="f19" gradientUnits="userSpaceOnUse" x1="1232" y1="232" x2="1834" y2="627"><stop offset="0" stop-color="#ffffff"/><stop offset="0.0316" stop-color="#ffaee9"/><stop offset="0.0894" stop-color="#ff59d2"/><stop offset="0.164" stop-color="#ff1ec2"/><stop offset="0.253" stop-color="#ff00b8"/><stop offset="0.354" stop-color="#ff00b1"/><stop offset="0.465" stop-color="#ff00ac"/></linearGradient><linearGradient id="f20" gradientUnits="userSpaceOnUse" x1="1232" y1="232" x2="1823" y2="642"><stop offset="0" stop-color="#ffffff"/><stop offset="0.0316" stop-color="#ffafec"/><stop offset="0.0894" stop-color="#ff5ad8"/><stop offset="0.164" stop-color="#ff1ec9"/><stop offset="0.253" stop-color="#ff00c0"/><stop offset="0.354" stop-color="#ff00b9"/><stop offset="0.465" stop-color="#ff00b5"/></linearGradient><linearGradient id="f21" gradientUnits="userSpaceOnUse" x1="1232" y1="232" x2="1812" y2="658"><stop offset="0" stop-color="#ffffff"/><stop offset="0.0316" stop-color="#ffb0ef"/><stop offset="0.0894" stop-color="#ff5add"/><stop offset="0.164" stop-color="#ff1ed1"/><stop offset="0.253" stop-color="#ff00c8"/><stop offset="0.354" stop-color="#ff00c3"/><stop offset="0.465" stop-color="#ff00bf"/></linearGradient><linearGradient id="f22" gradientUnits="userSpaceOnUse" x1="1232" y1="232" x2="1801" y2="673"><stop offset="0" stop-color="#ffffff"/><stop offset="0.0316" stop-color="#ffb1f1"/><stop offset="0.0894" stop-color="#ff5be3"/><stop offset="0.164" stop-color="#ff1ed8"/><stop offset="0.253" stop-color="#ff00d1"/><stop offset="0.354" stop-color="#ff00cc"/><stop offset="0.465" stop-color="#ff00c9"/></linearGradient><linearGradient id="f23" gradientUnits="userSpaceOnUse" x1="1232" y1="232" x2="1789" y2="687"><stop offset="0" stop-color="#ffffff"/><stop offset="0.0316" stop-color="#ffb1f4"/><stop offset="0.0894" stop-color="#ff5ce9"/><stop offset="0.164" stop-color="#ff1fe0"/><stop offset="0.253" stop-color="#ff00da"/><stop offset="0.354" stop-color="#ff00d6"/><stop offset="0.465" stop-color="#ff00d3"/></linearGradient><linearGradient id="f24" gradientUnits="userSpaceOnUse" x1="1232" y1="232" x2="1777" y2="702"><stop offset="0" stop-color="#ffffff"/><stop offset="0.0316" stop-color="#ffb2f7"/><stop offset="0.0894" stop-color="#ff5dee"/><stop offset="0.164" stop-color="#ff1fe8"/><stop offset="0.253" stop-color="#ff00e4"/><stop offset="0.354" stop-color="#ff00e1"/><stop offset="0.465" stop-color="#ff00de"/></linearGradient><linearGradient id="f25" gradientUnits="userSpaceOnUse" x1="1232" y1="232" x2="1765" y2="716"><stop offset="0" stop-color="#ffffff"/><stop offset="0.0316" stop-color="#ffb3fa"/><stop offset="0.0894" stop-color="#ff5ef5"/><stop offset="0.164" stop-color="#ff1ff0"/><stop offset="0.253" stop-color="#ff00ee"/><stop offset="0.354" stop-color="#ff00ec"/><stop offset="0.465" stop-color="#ff00ea"/></linearGradient><linearGradient id="f26" gradientUnits="userSpaceOnUse" x1="1232" y1="232" x2="1756" y2="725"><stop offset="0" stop-color="#ffffff"/><stop offset="0.0316" stop-color="#ffb4fc"/><stop offset="0.0894" stop-color="#ff5ff9"/><stop offset="0.164" stop-color="#ff20f6"/><stop offset="0.253" stop-color="#ff00f4"/><stop offset="0.354" stop-color="#ff00f3"/><stop offset="0.465" stop-color="#ff00f2"/></linearGradient><linearGradient id="f27" gradientUnits="userSpaceOnUse" x1="1232" y1="232" x2="1752" y2="730"><stop offset="0" stop-color="#ffffff"/><stop offset="0.0316" stop-color="#ffb4fd"/><stop offset="0.0894" stop-color="#ff5ffb"/><stop offset="0.164" stop-color="#ff20f9"/><stop offset="0.253" stop-color="#ff00f8"/><stop offset="0.354" stop-color="#ff00f7"/><stop offset="0.465" stop-color="#ff00f6"/></linearGradient><linearGradient id="f28" gradientUnits="userSpaceOnUse" x1="1232" y1="232" x2="1747" y2="734"><stop offset="0" stop-color="#ffffff"/><stop offset="0.0316" stop-color="#ffb5fe"/><stop offset="0.0894" stop-color="#ff60fd"/><stop offset="0.164" stop-color="#ff20fc"/><stop offset="0.253" stop-color="#ff00fb"/><stop offset="0.354" stop-color="#ff00fb"/><stop offset="0.465" stop-color="#ff00fb"/></linearGradient><linearGradient id="f29" gradientUnits="userSpaceOnUse" x1="1232" y1="232" x2="1741" y2="741"><stop offset="0" stop-color="#ffffff"/><stop offset="0.0316" stop-color="#feb5ff"/><stop offset="0.0894" stop-color="#fe60ff"/><stop offset="0.164" stop-color="#fe20ff"/><stop offset="0.253" stop-color="#fd00ff"/><stop offset="0.354" stop-color="#fd00ff"/><stop offset="0.465" stop-color="#fd00ff"/></linearGradient><linearGradient id="f30" gradientUnits="userSpaceOnUse" x1="1232" y1="232" x2="1734" y2="748"><stop offset="0" stop-color="#ffffff"/><stop offset="0.0316" stop-color="#fdb5ff"/><stop offset="0.0894" stop-color="#fb5fff"/><stop offset="0.164" stop-color="#f920ff"/><stop offset="0.253" stop-color="#f800ff"/><stop offset="0.354" stop-color="#f700ff"/><stop offset="0.465" stop-color="#f700ff"/></linearGradient><linearGradient id="f31" gradientUnits="userSpaceOnUse" x1="1232" y1="232" x2="1730" y2="752"><stop offset="0" stop-color="#ffffff"/><stop offset="0.0316" stop-color="#fcb4ff"/><stop offset="0.0894" stop-color="#f95fff"/><stop offset="0.164" stop-color="#f620ff"/><stop offset="0.253" stop-color="#f400ff"/><stop offset="0.354" stop-color="#f300ff"/><stop offset="0.465" stop-color="#f200ff"/></linearGradient><linearGradient id="f32" gradientUnits="userSpaceOnUse" x1="1232" y1="232" x2="1725" y2="756"><stop offset="0" stop-color="#ffffff"/><stop offset="0.0316" stop-color="#fbb4ff"/><stop offset="0.0894" stop-color="#f75fff"/><stop offset="0.164" stop-color="#f320ff"/><stop offset="0.253" stop-color="#f100ff"/><stop offset="0.354" stop-color="#ef00ff"/><stop offset="0.465" stop-color="#ee00ff"/></linearGradient><linearGradient id="f33" gradientUnits="userSpaceOnUse" x1="1232" y1="232" x2="1720" y2="761"><stop offset="0" stop-color="#ffffff"/><stop offset="0.0316" stop-color="#fab4ff"/><stop offset="0.0894" stop-color="#f55eff"/><stop offset="0.164" stop-color="#f020ff"/><stop offset="0.253" stop-color="#ee00ff"/><stop offset="0.354" stop-color="#ec00ff"/><stop offset="0.465" stop-color="#ea00ff"/></linearGradient><linearGradient id="f34" gradientUnits="userSpaceOnUse" x1="1232" y1="232" x2="1711" y2="769"><stop offset="0" stop-color="#ffffff"/><stop offset="0.0316" stop-color="#f8b3ff"/><stop offset="0.0894" stop-color="#f05eff"/><stop offset="0.164" stop-color="#eb1fff"/><stop offset="0.253" stop-color="#e700ff"/><stop offset="0.354" stop-color="#e400ff"/><stop offset="0.465" stop-color="#e200ff"/></linearGradient><linearGradient id="f35" gradientUnits="userSpaceOnUse" x1="1232" y1="232" x2="1697" y2="781"><stop offset="0" stop-color="#ffffff"/><stop offset="0.0316" stop-color="#f5b2ff"/><stop offset="0.0894" stop-color="#ea5dff"/><stop offset="0.164" stop-color="#e31fff"/><stop offset="0.253" stop-color="#dd00ff"/><stop offset="0.354" stop-color="#d900ff"/><stop offset="0.465" stop-color="#d700ff"/></linearGradient><linearGradient id="f36" gradientUnits="userSpaceOnUse" x1="1232" y1="232" x2="1682" y2="793"><stop offset="0" stop-color="#ffffff"/><stop offset="0.0316" stop-color="#f2b1ff"/><stop offset="0.0894" stop-color="#e55cff"/><stop offset="0.164" stop-color="#db1fff"/><stop offset="0.253" stop-color="#d400ff"/><stop offset="0.354" stop-color="#cf00ff"/><stop offset="0.465" stop-color="#cc00ff"/></linearGradient><linearGradient id="f37" gradientUnits="userSpaceOnUse" x1="1232" y1="232" x2="1668" y2="805"><stop offset="0" stop-color="#ffffff"/><stop offset="0.0316" stop-color="#f0b1ff"/><stop offset="0.0894" stop-color="#df5bff"/><stop offset="0.164" stop-color="#d31fff"/><stop offset="0.253" stop-color="#cb00ff"/><stop offset="0.354" stop-color="#c500ff"/><stop offset="0.465" stop-color="#c100ff"/></linearGradient><linearGradient id="f38" gradientUnits="userSpaceOnUse" x1="1232" y1="232" x2="1652" y2="816"><stop offset="0" stop-color="#ffffff"/><stop offset="0.0316" stop-color="#edb0ff"/><stop offset="0.0894" stop-color="#d95bff"/><stop offset="0.164" stop-color="#cb1fff"/><stop offset="0.253" stop-color="#c200ff"/><stop offset="0.354" stop-color="#bc00ff"/><stop offset="0.465" stop-color="#b700ff"/></linearGradient><linearGradient id="f39" gradientUnits="userSpaceOnUse" x1="1232" y1="232" x2="1637" y2="827"><stop offset="0" stop-color="#ffffff"/><stop offset="0.0316" stop-color="#eaafff"/><stop offset="0.0894" stop-color="#d45aff"/><stop offset="0.164" stop-color="#c41fff"/><stop offset="0.253" stop-color="#ba00ff"/><stop offset="0.354" stop-color="#b200ff"/><stop offset="0.465" stop-color="#ad00ff"/></linearGradient><linearGradient id="f40" gradientUnits="userSpaceOnUse" x1="1232" y1="232" x2="1621" y2="837"><stop offset="0" stop-color="#ffffff"/><stop offset="0.0316" stop-color="#e7afff"/><stop offset="0.0894" stop-color="#ce5aff"/><stop offset="0.164" stop-color="#bd1fff"/><stop offset="0.253" stop-color="#b100ff"/><stop offset="0.354" stop-color="#a900ff"/><stop offset="0.465" stop-color="#a400ff"/></linearGradient><linearGradient id="f41" gradientUnits="userSpaceOnUse" x1="1232" y1="232" x2="1605" y2="847"><stop offset="0" stop-color="#ffffff"/><stop offset="0.0316" stop-color="#e5aeff"/><stop offset="0.0894" stop-color="#c959ff"/><stop offset="0.164" stop-color="#b61fff"/><stop offset="0.253" stop-color="#a900ff"/><stop offset="0.354" stop-color="#a100ff"/><stop offset="0.465" stop-color="#9b00ff"/></linearGradient><linearGradient id="f42" gradientUnits="userSpaceOnUse" x1="1232" y1="232" x2="1589" y2="857"><stop offset="0" stop-color="#ffffff"/><stop offset="0.0316" stop-color="#e2aeff"/><stop offset="0.0894" stop-color="#c459ff"/><stop offset="0.164" stop-color="#af1fff"/><stop offset="0.253" stop-color="#a200ff"/><stop offset="0.354" stop-color="#9800ff"/><stop offset="0.465" stop-color="#9200ff"/></linearGradient><linearGradient id="f43" gradientUnits="userSpaceOnUse" x1="1232" y1="232" x2="1572" y2="866"><stop offset="0" stop-color="#ffffff"/><stop offset="0.0316" stop-color="#dfadff"/><stop offset="0.0894" stop-color="#bf59ff"/><stop offset="0.164" stop-color="#a91fff"/><stop offset="0.253" stop-color="#9a00ff"/><stop offset="0.354" stop-color="#9000ff"/><stop offset="0.465" stop-color="#8900ff"/></linearGradient><linearGradient id="f44" gradientUnits="userSpaceOnUse" x1="1232" y1="232" x2="1556" y2="875"><stop offset="0" stop-color="#ffffff"/><stop offset="0.0316" stop-color="#ddadff"/><stop offset="0.0894" stop-color="#ba59ff"/><stop offset="0.164" stop-color="#a220ff"/><stop offset="0.253" stop-color="#9300ff"/><stop offset="0.354" stop-color="#8800ff"/><stop offset="0.465" stop-color="#8100ff"/></linearGradient><linearGradient id="f45" gradientUnits="userSpaceOnUse" x1="1232" y1="232" x2="1539" y2="883"><stop offset="0" stop-color="#ffffff"/><stop offset="0.0316" stop-color="#daacff"/><stop offset="0.0894" stop-color="#b559ff"/><stop offset="0.164" stop-color="#9c20ff"/><stop offset="0.253" stop-color="#8b00ff"/><stop offset="0.354" stop-color="#8000ff"/><stop offset="0.465" stop-color="#7900ff"/></linearGradient><linearGradient id="f46" gradientUnits="userSpaceOnUse" x1="1232" y1="232" x2="1522" y2="891"><stop offset="0" stop-color="#ffffff"/><stop offset="0.0316" stop-color="#d8acff"/><stop offset="0.0894" stop-color="#b058ff"/><stop offset="0.164" stop-color="#9620ff"/><stop offset="0.253" stop-color="#8400ff"/><stop offset="0.354" stop-color="#7900ff"/><stop offset="0.465" stop-color="#7100ff"/></linearGradient><linearGradient id="f47" gradientUnits="userSpaceOnUse" x1="1232" y1="232" x2="1504" y2="898"><stop offset="0" stop-color="#ffffff"/><stop offset="0.0316" stop-color="#d5acff"/><stop offset="0.0894" stop-color="#ab58ff"/><stop offset="0.164" stop-color="#9021ff"/><stop offset="0.253" stop-color="#7e00ff"/><stop offset="0.354" stop-color="#7200ff"/><stop offset="0.465" stop-color="#6900ff"/></linearGradient><linearGradient id="f48" gradientUnits="userSpaceOnUse" x1="1232" y1="232" x2="1487" y2="905"><stop offset="0" stop-color="#ffffff"/><stop offset="0.0316" stop-color="#d3acff"/><stop offset="0.0894" stop-color="#a759ff"/><stop offset="0.164" stop-color="#8a21ff"/><stop offset="0.253" stop-color="#7700ff"/><stop offset="0.354" stop-color="#6a00ff"/><stop offset="0.465" stop-color="#6200ff"/></linearGradient><linearGradient id="f49" gradientUnits="userSpaceOnUse" x1="1232" y1="232" x2="1469" y2="912"><stop offset="0" stop-color="#ffffff"/><stop offset="0.0316" stop-color="#d0abff"/><stop offset="0.0894" stop-color="#a259ff"/><stop offset="0.164" stop-color="#8422ff"/><stop offset="0.253" stop-color="#7000ff"/><stop offset="0.354" stop-color="#6300ff"/><stop offset="0.465" stop-color="#5a00ff"/><stop offset="0.586" stop-color="#5800ff"/></linearGradient><linearGradient id="f50" gradientUnits="userSpaceOnUse" x1="1232" y1="232" x2="1451" y2="918"><stop offset="0" stop-color="#ffffff"/><stop offset="0.0316" stop-color="#ceabff"/><stop offset="0.0894" stop-color="#9e59ff"/><stop offset="0.164" stop-color="#7e23ff"/><stop offset="0.253" stop-color="#6a00ff"/><stop offset="0.354" stop-color="#5d00ff"/><stop offset="0.465" stop-color="#5300ff"/><stop offset="0.586" stop-color="#5200ff"/></linearGradient><linearGradient id="f51" gradientUnits="userSpaceOnUse" x1="1232" y1="232" x2="1433" y2="923"><stop offset="0" stop-color="#ffffff"/><stop offset="0.0316" stop-color="#ccabff"/><stop offset="0.0894" stop-color="#9a59ff"/><stop offset="0.164" stop-color="#7923ff"/><stop offset="0.253" stop-color="#6401ff"/><stop offset="0.354" stop-color="#5600ff"/><stop offset="0.465" stop-color="#4c00ff"/><stop offset="0.586" stop-color="#4b00ff"/></linearGradient><linearGradient id="f52" gradientUnits="userSpaceOnUse" x1="1232" y1="232" x2="1415" y2="928"><stop offset="0" stop-color="#ffffff"/><stop offset="0.0316" stop-color="#caabff"/><stop offset="0.0894" stop-color="#9559ff"/><stop offset="0.164" stop-color="#7324ff"/><stop offset="0.253" stop-color="#5e02ff"/><stop offset="0.354" stop-color="#4f00ff"/><stop offset="0.465" stop-color="#4500ff"/><stop offset="0.586" stop-color="#4400ff"/></linearGradient><linearGradient id="f53" gradientUnits="userSpaceOnUse" x1="1232" y1="232" x2="1397" y2="933"><stop offset="0" stop-color="#ffffff"/><stop offset="0.0316" stop-color="#c7abff"/><stop offset="0.0894" stop-color="#915aff"/><stop offset="0.164" stop-color="#6e25ff"/><stop offset="0.253" stop-color="#5803ff"/><stop offset="0.354" stop-color="#4900ff"/><stop offset="0.465" stop-color="#3e00ff"/><stop offset="0.586" stop-color="#3d00ff"/></linearGradient><linearGradient id="f54" gradientUnits="userSpaceOnUse" x1="1232" y1="232" x2="1378" y2="937"><stop offset="0" stop-color="#ffffff"/><stop offset="0.0316" stop-color="#c5abff"/><stop offset="0.0894" stop-color="#8d5aff"/><stop offset="0.164" stop-color="#6926ff"/><stop offset="0.253" stop-color="#5204ff"/><stop offset="0.354" stop-color="#4200ff"/><stop offset="0.465" stop-color="#3800ff"/><stop offset="0.586" stop-color="#3700ff"/></linearGradient><linearGradient id="f55" gradientUnits="userSpaceOnUse" x1="1232" y1="232" x2="1360" y2="940"><stop offset="0" stop-color="#ffffff"/><stop offset="0.0316" stop-color="#c3abff"/><stop offset="0.0894" stop-color="#895bff"/><stop offset="0.164" stop-color="#6427ff"/><stop offset="0.253" stop-color="#4c05ff"/><stop offset="0.354" stop-color="#3c00ff"/><stop offset="0.465" stop-color="#3100ff"/><stop offset="0.586" stop-color="#3000ff"/></linearGradient><linearGradient id="f56" gradientUnits="userSpaceOnUse" x1="1232" y1="232" x2="1341" y2="944"><stop offset="0" stop-color="#ffffff"/><stop offset="0.0316" stop-color="#c1acff"/><stop offset="0.0894" stop-color="#855bff"/><stop offset="0.164" stop-color="#5f27ff"/><stop offset="0.253" stop-color="#4607ff"/><stop offset="0.354" stop-color="#3600ff"/><stop offset="0.465" stop-color="#2b00ff"/><stop offset="0.586" stop-color="#2900ff"/></linearGradient><linearGradient id="f57" gradientUnits="userSpaceOnUse" x1="1232" y1="232" x2="1323" y2="946"><stop offset="0" stop-color="#ffffff"/><stop offset="0.0316" stop-color="#bfacff"/><stop offset="0.0894" stop-color="#815cff"/><stop offset="0.164" stop-color="#5a28ff"/><stop offset="0.253" stop-color="#4108ff"/><stop offset="0.354" stop-color="#3000ff"/><stop offset="0.465" stop-color="#2500ff"/><stop offset="0.586" stop-color="#2200ff"/></linearGradient><linearGradient id="f58" gradientUnits="userSpaceOnUse" x1="1232" y1="232" x2="1304" y2="948"><stop offset="0" stop-color="#ffffff"/><stop offset="0.0316" stop-color="#bdacff"/><stop offset="0.0894" stop-color="#7d5cff"/><stop offset="0.164" stop-color="#5529ff"/><stop offset="0.253" stop-color="#3b09ff"/><stop offset="0.354" stop-color="#2a00ff"/><stop offset="0.465" stop-color="#1e00ff"/><stop offset="0.586" stop-color="#1b00ff"/></linearGradient><linearGradient id="f59" gradientUnits="userSpaceOnUse" x1="1232" y1="232" x2="1285" y2="950"><stop offset="0" stop-color="#ffffff"/><stop offset="0.0316" stop-color="#bbacff"/><stop offset="0.0894" stop-color="#7a5dff"/><stop offset="0.164" stop-color="#502aff"/><stop offset="0.253" stop-color="#360bff"/><stop offset="0.354" stop-color="#2400ff"/><stop offset="0.465" stop-color="#1800ff"/><stop offset="0.586" stop-color="#1500ff"/></linearGradient><linearGradient id="f60" gradientUnits="userSpaceOnUse" x1="1232" y1="232" x2="1266" y2="951"><stop offset="0" stop-color="#ffffff"/><stop offset="0.0316" stop-color="#b9acff"/><stop offset="0.0894" stop-color="#765eff"/><stop offset="0.164" stop-color="#4b2cff"/><stop offset="0.253" stop-color="#300cff"/><stop offset="0.354" stop-color="#1e00ff"/><stop offset="0.465" stop-color="#1200ff"/><stop offset="0.586" stop-color="#0e00ff"/></linearGradient><linearGradient id="f61" gradientUnits="userSpaceOnUse" x1="1232" y1="232" x2="1241" y2="952"><stop offset="0" stop-color="#ffffff"/><stop offset="0.0316" stop-color="#b6adff"/><stop offset="0.0894" stop-color="#715fff"/><stop offset="0.164" stop-color="#452dff"/><stop offset="0.253" stop-color="#290eff"/><stop offset="0.354" stop-color="#1700ff"/><stop offset="0.465" stop-color="#0a00ff"/></linearGradient><linearGradient id="f62" gradientUnits="userSpaceOnUse" x1="1232" y1="232" x2="1210" y2="952"><stop offset="0" stop-color="#ffffff"/><stop offset="0.0316" stop-color="#b3aeff"/><stop offset="0.0894" stop-color="#6b60ff"/><stop offset="0.164" stop-color="#3d2fff"/><stop offset="0.253" stop-color="#2010ff"/><stop offset="0.354" stop-color="#0d00ff"/><stop offset="0.465" stop-color="#0000ff"/></linearGradient><linearGradient id="f63" gradientUnits="userSpaceOnUse" x1="1232" y1="232" x2="1178" y2="950"><stop offset="0" stop-color="#ffffff"/><stop offset="0.0316" stop-color="#b0aeff"/><stop offset="0.0894" stop-color="#6562ff"/><stop offset="0.164" stop-color="#3631ff"/><stop offset="0.253" stop-color="#1813ff"/><stop offset="0.354" stop-color="#0400ff"/><stop offset="0.465" stop-color="#0000ff"/></linearGradient><linearGradient id="f64" gradientUnits="userSpaceOnUse" x1="1232" y1="232" x2="1147" y2="947"><stop offset="0" stop-color="#ffffff"/><stop offset="0.0316" stop-color="#adafff"/><stop offset="0.0894" stop-color="#6064ff"/><stop offset="0.164" stop-color="#2e34ff"/><stop offset="0.253" stop-color="#0f16ff"/><stop offset="0.354" stop-color="#0002ff"/><stop offset="0.465" stop-color="#0000ff"/></linearGradient><linearGradient id="f65" gradientUnits="userSpaceOnUse" x1="1232" y1="232" x2="1116" y2="943"><stop offset="0" stop-color="#ffffff"/><stop offset="0.0316" stop-color="#aab0ff"/><stop offset="0.0894" stop-color="#5a66ff"/><stop offset="0.164" stop-color="#2736ff"/><stop offset="0.253" stop-color="#0718ff"/><stop offset="0.354" stop-color="#0005ff"/><stop offset="0.465" stop-color="#0000ff"/></linearGradient><linearGradient id="f66" gradientUnits="userSpaceOnUse" x1="1232" y1="232" x2="1085" y2="937"><stop offset="0" stop-color="#ffffff"/><stop offset="0.0316" stop-color="#a8b2ff"/><stop offset="0.0894" stop-color="#5568ff"/><stop offset="0.164" stop-color="#2039ff"/><stop offset="0.253" stop-color="#001bff"/><stop offset="0.354" stop-color="#0008ff"/><stop offset="0.465" stop-color="#0000ff"/></linearGradient><linearGradient id="f67" gradientUnits="userSpaceOnUse" x1="1232" y1="232" x2="1054" y2="930"><stop offset="0" stop-color="#ffffff"/><stop offset="0.0316" stop-color="#a5b3ff"/><stop offset="0.0894" stop-color="#506aff"/><stop offset="0.164" stop-color="#193cff"/><stop offset="0.253" stop-color="#001eff"/><stop offset="0.354" stop-color="#000bff"/><stop offset="0.465" stop-color="#0000ff"/></linearGradient><linearGradient id="f68" gradientUnits="userSpaceOnUse" x1="1232" y1="232" x2="1024" y2="921"><stop offset="0" stop-color="#ffffff"/><stop offset="0.0316" stop-color="#a3b4ff"/><stop offset="0.0894" stop-color="#4b6dff"/><stop offset="0.164" stop-color="#123fff"/><stop offset="0.253" stop-color="#0022ff"/><stop offset="0.354" stop-color="#000fff"/></linearGradient><linearGradient id="f69" gradientUnits="userSpaceOnUse" x1="1232" y1="232" x2="994" y2="912"><stop offset="0" stop-color="#ffffff"/><stop offset="0.0316" stop-color="#a1b6ff"/><stop offset="0.0894" stop-color="#466fff"/><stop offset="0.164" stop-color="#0c42ff"/><stop offset="0.253" stop-color="#0025ff"/><stop offset="0.354" stop-color="#0012ff"/></linearGradient><linearGradient id="f70" gradientUnits="userSpaceOnUse" x1="1232" y1="232" x2="959" y2="898"><stop offset="0" stop-color="#ffffff"/><stop offset="0.0316" stop-color="#9eb8ff"/><stop offset="0.0894" stop-color="#4073ff"/><stop offset="0.164" stop-color="#0446ff"/><stop offset="0.253" stop-color="#0029ff"/><stop offset="0.354" stop-color="#0017ff"/></linearGradient><linearGradient id="f71" gradientUnits="userSpaceOnUse" x1="1232" y1="232" x2="913" y2="878"><stop offset="0" stop-color="#ffffff"/><stop offset="0.0316" stop-color="#9bbbff"/><stop offset="0.0894" stop-color="#3977ff"/><stop offset="0.164" stop-color="#004cff"/><stop offset="0.253" stop-color="#0030ff"/><stop offset="0.354" stop-color="#001dff"/></linearGradient><linearGradient id="f72" gradientUnits="userSpaceOnUse" x1="1232" y1="232" x2="864" y2="851"><stop offset="0" stop-color="#ffffff"/><stop offset="0.0316" stop-color="#98beff"/><stop offset="0.0894" stop-color="#317eff"/><stop offset="0.164" stop-color="#0053ff"/><stop offset="0.253" stop-color="#0037ff"/><stop offset="0.354" stop-color="#0025ff"/></linearGradient><linearGradient id="f73" gradientUnits="userSpaceOnUse" x1="1232" y1="232" x2="821" y2="823"><stop offset="0" stop-color="#ffffff"/><stop offset="0.0316" stop-color="#95c2ff"/><stop offset="0.0894" stop-color="#2b83ff"/><stop offset="0.164" stop-color="#005aff"/><stop offset="0.253" stop-color="#003fff"/><stop offset="0.354" stop-color="#002cff"/></linearGradient><linearGradient id="f74" gradientUnits="userSpaceOnUse" x1="1232" y1="232" x2="786" y2="797"><stop offset="0" stop-color="#ffffff"/><stop offset="0.0316" stop-color="#94c5ff"/><stop offset="0.0894" stop-color="#2589ff"/><stop offset="0.164" stop-color="#0060ff"/><stop offset="0.253" stop-color="#0046ff"/><stop offset="0.354" stop-color="#0034ff"/></linearGradient><linearGradient id="f75" gradientUnits="userSpaceOnUse" x1="1232" y1="232" x2="752" y2="769"><stop offset="0" stop-color="#ffffff"/><stop offset="0.0316" stop-color="#92c8ff"/><stop offset="0.0894" stop-color="#208fff"/><stop offset="0.164" stop-color="#0068ff"/><stop offset="0.253" stop-color="#004dff"/><stop offset="0.354" stop-color="#003cff"/></linearGradient><linearGradient id="f76" gradientUnits="userSpaceOnUse" x1="1232" y1="232" x2="720" y2="739"><stop offset="0" stop-color="#ffffff"/><stop offset="0.0316" stop-color="#91ccff"/><stop offset="0.0894" stop-color="#1b96ff"/><stop offset="0.164" stop-color="#0070ff"/><stop offset="0.253" stop-color="#0056ff"/><stop offset="0.354" stop-color="#0044ff"/></linearGradient><linearGradient id="f77" gradientUnits="userSpaceOnUse" x1="1232" y1="232" x2="695" y2="711"><stop offset="0" stop-color="#ffffff"/><stop offset="0.0316" stop-color="#90d0ff"/><stop offset="0.0894" stop-color="#179cff"/><stop offset="0.164" stop-color="#0077ff"/><stop offset="0.253" stop-color="#005eff"/><stop offset="0.354" stop-color="#004cff"/></linearGradient><linearGradient id="f78" gradientUnits="userSpaceOnUse" x1="1232" y1="232" x2="674" y2="687"><stop offset="0" stop-color="#ffffff"/><stop offset="0.0316" stop-color="#90d2ff"/><stop offset="0.0894" stop-color="#14a1ff"/><stop offset="0.164" stop-color="#007dff"/><stop offset="0.253" stop-color="#0065ff"/><stop offset="0.354" stop-color="#0054ff"/></linearGradient><linearGradient id="f79" gradientUnits="userSpaceOnUse" x1="1232" y1="232" x2="655" y2="663"><stop offset="0" stop-color="#ffffff"/><stop offset="0.0316" stop-color="#8fd6ff"/><stop offset="0.0894" stop-color="#11a7ff"/><stop offset="0.164" stop-color="#0084ff"/><stop offset="0.253" stop-color="#006cff"/><stop offset="0.354" stop-color="#005bff"/></linearGradient><linearGradient id="f80" gradientUnits="userSpaceOnUse" x1="1232" y1="232" x2="637" y2="637"><stop offset="0" stop-color="#ffffff"/><stop offset="0.0316" stop-color="#8fd9ff"/><stop offset="0.0894" stop-color="#0fadff"/><stop offset="0.164" stop-color="#008cff"/><stop offset="0.253" stop-color="#0074ff"/><stop offset="0.354" stop-color="#0064ff"/></linearGradient><linearGradient id="f81" gradientUnits="userSpaceOnUse" x1="1232" y1="232" x2="619" y2="611"><stop offset="0" stop-color="#ffffff"/><stop offset="0.0316" stop-color="#8fdcff"/><stop offset="0.0894" stop-color="#0cb3ff"/><stop offset="0.164" stop-color="#0094ff"/><stop offset="0.253" stop-color="#007dff"/><stop offset="0.354" stop-color="#006dff"/></linearGradient><linearGradient id="f82" gradientUnits="userSpaceOnUse" x1="1232" y1="232" x2="607" y2="589"><stop offset="0" stop-color="#ffffff"/><stop offset="0.0316" stop-color="#8fdfff"/><stop offset="0.0894" stop-color="#0ab8ff"/><stop offset="0.164" stop-color="#009bff"/><stop offset="0.253" stop-color="#0085ff"/><stop offset="0.354" stop-color="#0075ff"/></linearGradient><linearGradient id="f83" gradientUnits="userSpaceOnUse" x1="1232" y1="232" x2="597" y2="573"><stop offset="0" stop-color="#ffffff"/><stop offset="0.0316" stop-color="#8fe1ff"/><stop offset="0.0894" stop-color="#09bdff"/><stop offset="0.164" stop-color="#00a0ff"/><stop offset="0.253" stop-color="#008bff"/><stop offset="0.354" stop-color="#007cff"/></linearGradient><linearGradient id="f84" gradientUnits="userSpaceOnUse" x1="1232" y1="232" x2="589" y2="556"><stop offset="0" stop-color="#ffffff"/><stop offset="0.0316" stop-color="#90e3ff"/><stop offset="0.0894" stop-color="#07c1ff"/><stop offset="0.164" stop-color="#00a5ff"/><stop offset="0.253" stop-color="#0091ff"/><stop offset="0.354" stop-color="#0082ff"/></linearGradient><linearGradient id="f85" gradientUnits="userSpaceOnUse" x1="1232" y1="232" x2="580" y2="539"><stop offset="0" stop-color="#ffffff"/><stop offset="0.0316" stop-color="#90e5ff"/><stop offset="0.0894" stop-color="#06c5ff"/><stop offset="0.164" stop-color="#00abff"/><stop offset="0.253" stop-color="#0098ff"/><stop offset="0.354" stop-color="#008aff"/></linearGradient><linearGradient id="f86" gradientUnits="userSpaceOnUse" x1="1232" y1="232" x2="573" y2="522"><stop offset="0" stop-color="#ffffff"/><stop offset="0.0316" stop-color="#90e7ff"/><stop offset="0.0894" stop-color="#05caff"/><stop offset="0.164" stop-color="#00b1ff"/><stop offset="0.253" stop-color="#009fff"/><stop offset="0.354" stop-color="#0091ff"/></linearGradient><linearGradient id="f87" gradientUnits="userSpaceOnUse" x1="1232" y1="232" x2="565" y2="505"><stop offset="0" stop-color="#ffffff"/><stop offset="0.0316" stop-color="#91eaff"/><stop offset="0.0894" stop-color="#04cfff"/><stop offset="0.164" stop-color="#00b8ff"/><stop offset="0.253" stop-color="#00a7ff"/><stop offset="0.354" stop-color="#009aff"/></linearGradient><linearGradient id="f88" gradientUnits="userSpaceOnUse" x1="1232" y1="232" x2="558" y2="487"><stop offset="0" stop-color="#ffffff"/><stop offset="0.0316" stop-color="#91ecff"/><stop offset="0.0894" stop-color="#03d3ff"/><stop offset="0.164" stop-color="#00bfff"/><stop offset="0.253" stop-color="#00aeff"/><stop offset="0.354" stop-color="#00a2ff"/></linearGradient><linearGradient id="f89" gradientUnits="userSpaceOnUse" x1="1232" y1="232" x2="552" y2="469"><stop offset="0" stop-color="#ffffff"/><stop offset="0.0316" stop-color="#92eeff"/><stop offset="0.0894" stop-color="#02d9ff"/><stop offset="0.164" stop-color="#00c6ff"/><stop offset="0.253" stop-color="#00b7ff"/><stop offset="0.354" stop-color="#00acff"/></linearGradient><linearGradient id="f90" gradientUnits="userSpaceOnUse" x1="1232" y1="232" x2="546" y2="451"><stop offset="0" stop-color="#ffffff"/><stop offset="0.0316" stop-color="#93f1ff"/><stop offset="0.0894" stop-color="#02deff"/><stop offset="0.164" stop-color="#00cdff"/><stop offset="0.253" stop-color="#00c0ff"/><stop offset="0.354" stop-color="#00b6ff"/></linearGradient><linearGradient id="f91" gradientUnits="userSpaceOnUse" x1="1232" y1="232" x2="540" y2="433"><stop offset="0" stop-color="#ffffff"/><stop offset="0.0316" stop-color="#93f3ff"/><stop offset="0.0894" stop-color="#01e3ff"/><stop offset="0.164" stop-color="#00d5ff"/><stop offset="0.253" stop-color="#00caff"/><stop offset="0.354" stop-color="#00c0ff"/></linearGradient><linearGradient id="f92" gradientUnits="userSpaceOnUse" x1="1232" y1="232" x2="536" y2="418"><stop offset="0" stop-color="#ffffff"/><stop offset="0.0316" stop-color="#94f5ff"/><stop offset="0.0894" stop-color="#00e8ff"/><stop offset="0.164" stop-color="#00dcff"/><stop offset="0.253" stop-color="#00d2ff"/><stop offset="0.354" stop-color="#00caff"/></linearGradient><linearGradient id="f93" gradientUnits="userSpaceOnUse" x1="1232" y1="232" x2="534" y2="409"><stop offset="0" stop-color="#ffffff"/><stop offset="0.0316" stop-color="#95f7ff"/><stop offset="0.0894" stop-color="#00ebff"/><stop offset="0.164" stop-color="#00e0ff"/><stop offset="0.253" stop-color="#00d7ff"/><stop offset="0.354" stop-color="#00d0ff"/></linearGradient><linearGradient id="f94" gradientUnits="userSpaceOnUse" x1="1232" y1="232" x2="532" y2="403"><stop offset="0" stop-color="#ffffff"/><stop offset="0.0316" stop-color="#95f7ff"/><stop offset="0.0894" stop-color="#00edff"/><stop offset="0.164" stop-color="#00e3ff"/><stop offset="0.253" stop-color="#00dbff"/><stop offset="0.354" stop-color="#00d5ff"/></linearGradient><linearGradient id="f95" gradientUnits="userSpaceOnUse" x1="1232" y1="232" x2="531" y2="397"><stop offset="0" stop-color="#ffffff"/><stop offset="0.0316" stop-color="#95f8ff"/><stop offset="0.0894" stop-color="#00efff"/><stop offset="0.164" stop-color="#00e6ff"/><stop offset="0.253" stop-color="#00dfff"/><stop offset="0.354" stop-color="#00d9ff"/></linearGradient><linearGradient id="f96" gradientUnits="userSpaceOnUse" x1="1232" y1="232" x2="529" y2="391"><stop offset="0" stop-color="#ffffff"/><stop offset="0.0316" stop-color="#95f9ff"/><stop offset="0.0894" stop-color="#00f1ff"/><stop offset="0.164" stop-color="#00e9ff"/><stop offset="0.253" stop-color="#00e3ff"/><stop offset="0.354" stop-color="#00ddff"/></linearGradient><linearGradient id="f97" gradientUnits="userSpaceOnUse" x1="1232" y1="232" x2="528" y2="385"><stop offset="0" stop-color="#ffffff"/><stop offset="0.0316" stop-color="#96faff"/><stop offset="0.0894" stop-color="#00f3ff"/><stop offset="0.164" stop-color="#00ecff"/><stop offset="0.253" stop-color="#00e7ff"/><stop offset="0.354" stop-color="#00e2ff"/></linearGradient><linearGradient id="f98" gradientUnits="userSpaceOnUse" x1="1232" y1="232" x2="527" y2="379"><stop offset="0" stop-color="#ffffff"/><stop offset="0.0316" stop-color="#96fbff"/><stop offset="0.0894" stop-color="#00f5ff"/><stop offset="0.164" stop-color="#00efff"/><stop offset="0.253" stop-color="#00ebff"/><stop offset="0.354" stop-color="#00e7ff"/></linearGradient><linearGradient id="f99" gradientUnits="userSpaceOnUse" x1="1232" y1="232" x2="526" y2="372"><stop offset="0" stop-color="#ffffff"/><stop offset="0.0316" stop-color="#97fcff"/><stop offset="0.0894" stop-color="#00f7ff"/><stop offset="0.164" stop-color="#00f3ff"/><stop offset="0.253" stop-color="#00efff"/><stop offset="0.354" stop-color="#00ecff"/></linearGradient><linearGradient id="f100" gradientUnits="userSpaceOnUse" x1="1232" y1="232" x2="524" y2="366"><stop offset="0" stop-color="#ffffff"/><stop offset="0.0316" stop-color="#97fdff"/><stop offset="0.0894" stop-color="#00f9ff"/><stop offset="0.164" stop-color="#00f6ff"/><stop offset="0.253" stop-color="#00f3ff"/><stop offset="0.354" stop-color="#00f1ff"/></linearGradient><linearGradient id="f101" gradientUnits="userSpaceOnUse" x1="1232" y1="232" x2="523" y2="360"><stop offset="0" stop-color="#ffffff"/><stop offset="0.0316" stop-color="#97fdff"/><stop offset="0.0894" stop-color="#00fbff"/><stop offset="0.164" stop-color="#00f9ff"/><stop offset="0.253" stop-color="#00f7ff"/><stop offset="0.354" stop-color="#00f6ff"/></linearGradient><linearGradient id="f102" gradientUnits="userSpaceOnUse" x1="1232" y1="232" x2="522" y2="354"><stop offset="0" stop-color="#ffffff"/><stop offset="0.0316" stop-color="#98feff"/><stop offset="0.0894" stop-color="#00fdff"/><stop offset="0.164" stop-color="#00fdff"/><stop offset="0.253" stop-color="#00fcff"/><stop offset="0.354" stop-color="#00fbff"/></linearGradient><linearGradient id="f103" gradientUnits="userSpaceOnUse" x1="1232" y1="232" x2="521" y2="348"><stop offset="0" stop-color="#ffffff"/><stop offset="0.0316" stop-color="#98ffff"/><stop offset="0.0894" stop-color="#00fffe"/><stop offset="0.164" stop-color="#00fffe"/><stop offset="0.253" stop-color="#00fffe"/><stop offset="0.354" stop-color="#00fffd"/></linearGradient><linearGradient id="f104" gradientUnits="userSpaceOnUse" x1="1232" y1="232" x2="520" y2="341"><stop offset="0" stop-color="#ffffff"/><stop offset="0.0316" stop-color="#98fffe"/><stop offset="0.0894" stop-color="#00fffc"/><stop offset="0.164" stop-color="#00fffb"/><stop offset="0.253" stop-color="#00fff9"/><stop offset="0.354" stop-color="#00fff8"/></linearGradient><linearGradient id="f105" gradientUnits="userSpaceOnUse" x1="1232" y1="232" x2="519" y2="335"><stop offset="0" stop-color="#ffffff"/><stop offset="0.0316" stop-color="#98fffd"/><stop offset="0.0894" stop-color="#00fffa"/><stop offset="0.164" stop-color="#00fff7"/><stop offset="0.253" stop-color="#00fff5"/><stop offset="0.354" stop-color="#00fff2"/></linearGradient><linearGradient id="f106" gradientUnits="userSpaceOnUse" x1="1232" y1="232" x2="518" y2="329"><stop offset="0" stop-color="#ffffff"/><stop offset="0.0316" stop-color="#97fffc"/><stop offset="0.0894" stop-color="#00fff8"/><stop offset="0.164" stop-color="#00fff4"/><stop offset="0.253" stop-color="#00fff0"/><stop offset="0.354" stop-color="#00ffed"/></linearGradient><linearGradient id="f107" gradientUnits="userSpaceOnUse" x1="1232" y1="232" x2="517" y2="323"><stop offset="0" stop-color="#ffffff"/><stop offset="0.0316" stop-color="#97fffb"/><stop offset="0.0894" stop-color="#00fff6"/><stop offset="0.164" stop-color="#00fff0"/><stop offset="0.253" stop-color="#00ffec"/><stop offset="0.354" stop-color="#00ffe8"/></linearGradient><linearGradient id="f108" gradientUnits="userSpaceOnUse" x1="1232" y1="232" x2="517" y2="317"><stop offset="0" stop-color="#ffffff"/><stop offset="0.0316" stop-color="#97fffa"/><stop offset="0.0894" stop-color="#00fff4"/><stop offset="0.164" stop-color="#00ffed"/><stop offset="0.253" stop-color="#00ffe7"/><stop offset="0.354" stop-color="#00ffe2"/></linearGradient><linearGradient id="f109" gradientUnits="userSpaceOnUse" x1="1232" y1="232" x2="516" y2="310"><stop offset="0" stop-color="#ffffff"/><stop offset="0.0316" stop-color="#97fff9"/><stop offset="0.0894" stop-color="#00fff1"/><stop offset="0.164" stop-color="#00ffea"/><stop offset="0.253" stop-color="#00ffe3"/><stop offset="0.354" stop-color="#00ffdd"/></linearGradient><linearGradient id="f110" gradientUnits="userSpaceOnUse" x1="1232" y1="232" x2="515" y2="304"><stop offset="0" stop-color="#ffffff"/><stop offset="0.0316" stop-color="#97fff9"/><stop offset="0.0894" stop-color="#00ffef"/><stop offset="0.164" stop-color="#00ffe6"/><stop offset="0.253" stop-color="#00ffdf"/><stop offset="0.354" stop-color="#00ffd8"/></linearGradient><linearGradient id="f111" gradientUnits="userSpaceOnUse" x1="1232" y1="232" x2="515" y2="298"><stop offset="0" stop-color="#ffffff"/><stop offset="0.0316" stop-color="#97fff8"/><stop offset="0.0894" stop-color="#00ffed"/><stop offset="0.164" stop-color="#00ffe3"/><stop offset="0.253" stop-color="#00ffda"/><stop offset="0.354" stop-color="#00ffd3"/></linearGradient><linearGradient id="f112" gradientUnits="userSpaceOnUse" x1="1232" y1="232" x2="514" y2="292"><stop offset="0" stop-color="#ffffff"/><stop offset="0.0316" stop-color="#97fff7"/><stop offset="0.0894" stop-color="#00ffeb"/><stop offset="0.164" stop-color="#00ffe0"/><stop offset="0.253" stop-color="#00ffd6"/><stop offset="0.354" stop-color="#00ffce"/></linearGradient><linearGradient id="f113" gradientUnits="userSpaceOnUse" x1="1232" y1="232" x2="514" y2="285"><stop offset="0" stop-color="#ffffff"/><stop offset="0.0316" stop-color="#97fff6"/><stop offset="0.0894" stop-color="#00ffe9"/><stop offset="0.164" stop-color="#00ffdc"/><stop offset="0.253" stop-color="#00ffd2"/><stop offset="0.354" stop-color="#00ffc9"/></linearGradient><linearGradient id="f114" gradientUnits="userSpaceOnUse" x1="1232" y1="232" x2="513" y2="279"><stop offset="0" stop-color="#ffffff"/><stop offset="0.0316" stop-color="#97fff5"/><stop offset="0.0894" stop-color="#00ffe7"/><stop offset="0.164" stop-color="#00ffd9"/><stop offset="0.253" stop-color="#00ffce"/><stop offset="0.354" stop-color="#00ffc4"/></linearGradient><linearGradient id="f115" gradientUnits="userSpaceOnUse" x1="1232" y1="232" x2="513" y2="273"><stop offset="0" stop-color="#ffffff"/><stop offset="0.0316" stop-color="#97fff4"/><stop offset="0.0894" stop-color="#01ffe5"/><stop offset="0.164" stop-color="#00ffd6"/><stop offset="0.253" stop-color="#00ffc9"/><stop offset="0.354" stop-color="#00ffbf"/></linearGradient><linearGradient id="f116" gradientUnits="userSpaceOnUse" x1="1232" y1="232" x2="513" y2="266"><stop offset="0" stop-color="#ffffff"/><stop offset="0.0316" stop-color="#97fff3"/><stop offset="0.0894" stop-color="#01ffe3"/><stop offset="0.164" stop-color="#00ffd3"/><stop offset="0.253" stop-color="#00ffc5"/><stop offset="0.354" stop-color="#00ffba"/></linearGradient><linearGradient id="f117" gradientUnits="userSpaceOnUse" x1="1232" y1="232" x2="512" y2="260"><stop offset="0" stop-color="#ffffff"/><stop offset="0.0316" stop-color="#97fff3"/><stop offset="0.0894" stop-color="#01ffe1"/><stop offset="0.164" stop-color="#00ffd0"/><stop offset="0.253" stop-color="#00ffc1"/><stop offset="0.354" stop-color="#00ffb6"/></linearGradient><linearGradient id="f118" gradientUnits="userSpaceOnUse" x1="1232" y1="232" x2="512" y2="254"><stop offset="0" stop-color="#ffffff"/><stop offset="0.0316" stop-color="#97fff2"/><stop offset="0.0894" stop-color="#01ffdf"/><stop offset="0.164" stop-color="#00ffcd"/><stop offset="0.253" stop-color="#00ffbd"/><stop offset="0.354" stop-color="#00ffb1"/></linearGradient><linearGradient id="f119" gradientUnits="userSpaceOnUse" x1="1232" y1="232" x2="512" y2="248"><stop offset="0" stop-color="#ffffff"/><stop offset="0.0316" stop-color="#97fff1"/><stop offset="0.0894" stop-color="#01ffdd"/><stop offset="0.164" stop-color="#00ffc9"/><stop offset="0.253" stop-color="#00ffb9"/><stop offset="0.354" stop-color="#00ffac"/></linearGradient><linearGradient id="f120" gradientUnits="userSpaceOnUse" x1="1232" y1="232" x2="512" y2="241"><stop offset="0" stop-color="#ffffff"/><stop offset="0.0316" stop-color="#97fff0"/><stop offset="0.0894" stop-color="#02ffda"/><stop offset="0.164" stop-color="#00ffc6"/><stop offset="0.253" stop-color="#00ffb5"/><stop offset="0.354" stop-color="#00ffa7"/></linearGradient><linearGradient id="f121" gradientUnits="userSpaceOnUse" x1="1232" y1="232" x2="512" y2="235"><stop offset="0" stop-color="#ffffff"/><stop offset="0.0316" stop-color="#97ffef"/><stop offset="0.0894" stop-color="#02ffd8"/><stop offset="0.164" stop-color="#00ffc3"/><stop offset="0.253" stop-color="#00ffb1"/><stop offset="0.354" stop-color="#00ffa3"/></linearGradient><linearGradient id="f122" gradientUnits="userSpaceOnUse" x1="1232" y1="232" x2="512" y2="229"><stop offset="0" stop-color="#ffffff"/><stop offset="0.0316" stop-color="#97ffee"/><stop offset="0.0894" stop-color="#02ffd6"/><stop offset="0.164" stop-color="#00ffc0"/><stop offset="0.253" stop-color="#00ffae"/><stop offset="0.354" stop-color="#00ff9e"/></linearGradient><linearGradient id="f123" gradientUnits="userSpaceOnUse" x1="1232" y1="232" x2="512" y2="222"><stop offset="0" stop-color="#ffffff"/><stop offset="0.0316" stop-color="#97ffed"/><stop offset="0.0894" stop-color="#02ffd4"/><stop offset="0.164" stop-color="#00ffbd"/><stop offset="0.253" stop-color="#00ffaa"/><stop offset="0.354" stop-color="#00ff9a"/></linearGradient><linearGradient id="f124" gradientUnits="userSpaceOnUse" x1="1232" y1="232" x2="512" y2="216"><stop offset="0" stop-color="#ffffff"/><stop offset="0.0316" stop-color="#97ffed"/><stop offset="0.0894" stop-color="#03ffd2"/><stop offset="0.164" stop-color="#00ffba"/><stop offset="0.253" stop-color="#00ffa6"/><stop offset="0.354" stop-color="#00ff95"/></linearGradient><linearGradient id="f125" gradientUnits="userSpaceOnUse" x1="1232" y1="232" x2="512" y2="210"><stop offset="0" stop-color="#ffffff"/><stop offset="0.0316" stop-color="#97ffec"/><stop offset="0.0894" stop-color="#03ffd0"/><stop offset="0.164" stop-color="#00ffb7"/><stop offset="0.253" stop-color="#00ffa2"/><stop offset="0.354" stop-color="#00ff91"/></linearGradient><linearGradient id="f126" gradientUnits="userSpaceOnUse" x1="1232" y1="232" x2="512" y2="204"><stop offset="0" stop-color="#ffffff"/><stop offset="0.0316" stop-color="#97ffeb"/><stop offset="0.0894" stop-color="#03ffcf"/><stop offset="0.164" stop-color="#00ffb4"/><stop offset="0.253" stop-color="#00ff9e"/><stop offset="0.354" stop-color="#00ff8d"/></linearGradient><linearGradient id="f127" gradientUnits="userSpaceOnUse" x1="1232" y1="232" x2="513" y2="197"><stop offset="0" stop-color="#ffffff"/><stop offset="0.0316" stop-color="#97ffea"/><stop offset="0.0894" stop-color="#04ffcd"/><stop offset="0.164" stop-color="#00ffb1"/><stop offset="0.253" stop-color="#00ff9b"/><stop offset="0.354" stop-color="#00ff88"/></linearGradient><linearGradient id="f128" gradientUnits="userSpaceOnUse" x1="1232" y1="232" x2="513" y2="191"><stop offset="0" stop-color="#ffffff"/><stop offset="0.0316" stop-color="#97ffe9"/><stop offset="0.0894" stop-color="#04ffcb"/><stop offset="0.164" stop-color="#00ffae"/><stop offset="0.253" stop-color="#00ff97"/><stop offset="0.354" stop-color="#00ff84"/></linearGradient><linearGradient id="f129" gradientUnits="userSpaceOnUse" x1="1232" y1="232" x2="513" y2="185"><stop offset="0" stop-color="#ffffff"/><stop offset="0.0316" stop-color="#97ffe8"/><stop offset="0.0894" stop-color="#04ffc9"/><stop offset="0.164" stop-color="#00ffab"/><stop offset="0.253" stop-color="#00ff93"/><stop offset="0.354" stop-color="#00ff80"/></linearGradient><linearGradient id="f130" gradientUnits="userSpaceOnUse" x1="1232" y1="232" x2="514" y2="179"><stop offset="0" stop-color="#ffffff"/><stop offset="0.0316" stop-color="#97ffe8"/><stop offset="0.0894" stop-color="#05ffc7"/><stop offset="0.164" stop-color="#00ffa9"/><stop offset="0.253" stop-color="#00ff90"/><stop offset="0.354" stop-color="#00ff7b"/></linearGradient><linearGradient id="f131" gradientUnits="userSpaceOnUse" x1="1232" y1="232" x2="514" y2="172"><stop offset="0" stop-color="#ffffff"/><stop offset="0.0316" stop-color="#97ffe7"/><stop offset="0.0894" stop-color="#05ffc5"/><stop offset="0.164" stop-color="#00ffa6"/><stop offset="0.253" stop-color="#00ff8c"/><stop offset="0.354" stop-color="#00ff77"/></linearGradient><linearGradient id="f132" gradientUnits="userSpaceOnUse" x1="1232" y1="232" x2="515" y2="166"><stop offset="0" stop-color="#ffffff"/><stop offset="0.0316" stop-color="#97ffe6"/><stop offset="0.0894" stop-color="#06ffc3"/><stop offset="0.164" stop-color="#00ffa3"/><stop offset="0.253" stop-color="#00ff88"/><stop offset="0.354" stop-color="#00ff73"/></linearGradient><linearGradient id="f133" gradientUnits="userSpaceOnUse" x1="1232" y1="232" x2="515" y2="160"><stop offset="0" stop-color="#ffffff"/><stop offset="0.0316" stop-color="#97ffe5"/><stop offset="0.0894" stop-color="#06ffc1"/><stop offset="0.164" stop-color="#00ffa0"/><stop offset="0.253" stop-color="#00ff85"/><stop offset="0.354" stop-color="#00ff6f"/></linearGradient><linearGradient id="f134" gradientUnits="userSpaceOnUse" x1="1232" y1="232" x2="516" y2="153"><stop offset="0" stop-color="#ffffff"/><stop offset="0.0316" stop-color="#97ffe4"/><stop offset="0.0894" stop-color="#07ffbf"/><stop offset="0.164" stop-color="#00ff9d"/><stop offset="0.253" stop-color="#00ff81"/><stop offset="0.354" stop-color="#00ff6b"/></linearGradient><linearGradient id="f135" gradientUnits="userSpaceOnUse" x1="1232" y1="232" x2="517" y2="147"><stop offset="0" stop-color="#ffffff"/><stop offset="0.0316" stop-color="#97ffe3"/><stop offset="0.0894" stop-color="#07ffbd"/><stop offset="0.164" stop-color="#00ff9a"/><stop offset="0.253" stop-color="#00ff7e"/><stop offset="0.354" stop-color="#00ff67"/></linearGradient><linearGradient id="f136" gradientUnits="userSpaceOnUse" x1="1232" y1="232" x2="518" y2="135"><stop offset="0" stop-color="#ffffff"/><stop offset="0.0316" stop-color="#97ffe2"/><stop offset="0.0894" stop-color="#08ffba"/><stop offset="0.164" stop-color="#00ff95"/><stop offset="0.253" stop-color="#00ff77"/><stop offset="0.354" stop-color="#00ff5f"/></linearGradient><linearGradient id="f137" gradientUnits="userSpaceOnUse" x1="1232" y1="232" x2="521" y2="116"><stop offset="0" stop-color="#ffffff"/><stop offset="0.0316" stop-color="#98ffdf"/><stop offset="0.0894" stop-color="#09ffb4"/><stop offset="0.164" stop-color="#00ff8d"/><stop offset="0.253" stop-color="#00ff6d"/><stop offset="0.354" stop-color="#00ff53"/></linearGradient><linearGradient id="f138" gradientUnits="userSpaceOnUse" x1="1232" y1="232" x2="524" y2="98"><stop offset="0" stop-color="#ffffff"/><stop offset="0.0316" stop-color="#98ffdd"/><stop offset="0.0894" stop-color="#0bffaf"/><stop offset="0.164" stop-color="#00ff85"/><stop offset="0.253" stop-color="#00ff63"/><stop offset="0.354" stop-color="#00ff48"/></linearGradient><linearGradient id="f139" gradientUnits="userSpaceOnUse" x1="1232" y1="232" x2="528" y2="79"><stop offset="0" stop-color="#ffffff"/><stop offset="0.0316" stop-color="#99ffdb"/><stop offset="0.0894" stop-color="#0dffa9"/><stop offset="0.164" stop-color="#00ff7d"/><stop offset="0.253" stop-color="#00ff59"/><stop offset="0.354" stop-color="#00ff3d"/></linearGradient><linearGradient id="f140" gradientUnits="userSpaceOnUse" x1="1232" y1="232" x2="532" y2="61"><stop offset="0" stop-color="#ffffff"/><stop offset="0.0316" stop-color="#99ffd8"/><stop offset="0.0894" stop-color="#0fffa4"/><stop offset="0.164" stop-color="#00ff75"/><stop offset="0.253" stop-color="#00ff50"/><stop offset="0.354" stop-color="#00ff32"/></linearGradient><linearGradient id="f141" gradientUnits="userSpaceOnUse" x1="1232" y1="232" x2="537" y2="43"><stop offset="0" stop-color="#ffffff"/><stop offset="0.0316" stop-color="#9affd6"/><stop offset="0.0894" stop-color="#10ff9f"/><stop offset="0.164" stop-color="#00ff6e"/><stop offset="0.253" stop-color="#00ff46"/><stop offset="0.354" stop-color="#00ff27"/></linearGradient><linearGradient id="f142" gradientUnits="userSpaceOnUse" x1="1232" y1="232" x2="542" y2="24"><stop offset="0" stop-color="#ffffff"/><stop offset="0.0316" stop-color="#9affd4"/><stop offset="0.0894" stop-color="#13ff9a"/><stop offset="0.164" stop-color="#00ff66"/><stop offset="0.253" stop-color="#00ff3d"/><stop offset="0.354" stop-color="#00ff1d"/></linearGradient><linearGradient id="f143" gradientUnits="userSpaceOnUse" x1="1232" y1="232" x2="548" y2="6"><stop offset="0" stop-color="#ffffff"/><stop offset="0.0316" stop-color="#9bffd2"/><stop offset="0.0894" stop-color="#15ff95"/><stop offset="0.164" stop-color="#00ff5f"/><stop offset="0.253" stop-color="#00ff34"/><stop offset="0.354" stop-color="#00ff13"/></linearGradient><linearGradient id="f144" gradientUnits="userSpaceOnUse" x1="1232" y1="232" x2="554" y2="-11"><stop offset="0" stop-color="#ffffff"/><stop offset="0.0316" stop-color="#9cffcf"/><stop offset="0.0894" stop-color="#17ff90"/><stop offset="0.164" stop-color="#00ff58"/><stop offset="0.253" stop-color="#00ff2c"/><stop offset="0.354" stop-color="#00ff09"/></linearGradient><linearGradient id="f145" gradientUnits="userSpaceOnUse" x1="1232" y1="232" x2="561" y2="-29"><stop offset="0" stop-color="#ffffff"/><stop offset="0.0316" stop-color="#9dffcd"/><stop offset="0.0894" stop-color="#19ff8b"/><stop offset="0.164" stop-color="#00ff51"/><stop offset="0.253" stop-color="#00ff23"/><stop offset="0.354" stop-color="#00ff00"/></linearGradient><linearGradient id="f146" gradientUnits="userSpaceOnUse" x1="1232" y1="232" x2="568" y2="-47"><stop offset="0" stop-color="#ffffff"/><stop offset="0.0316" stop-color="#9effcb"/><stop offset="0.0894" stop-color="#1cff86"/><stop offset="0.164" stop-color="#00ff4a"/><stop offset="0.253" stop-color="#00ff1b"/><stop offset="0.354" stop-color="#00ff00"/></linearGradient><linearGradient id="f147" gradientUnits="userSpaceOnUse" x1="1232" y1="232" x2="575" y2="-64"><stop offset="0" stop-color="#ffffff"/><stop offset="0.0316" stop-color="#9effc9"/><stop offset="0.0894" stop-color="#1eff82"/><stop offset="0.164" stop-color="#00ff43"/><stop offset="0.253" stop-color="#00ff12"/><stop offset="0.354" stop-color="#00ff00"/></linearGradient><linearGradient id="f148" gradientUnits="userSpaceOnUse" x1="1232" y1="232" x2="583" y2="-81"><stop offset="0" stop-color="#ffffff"/><stop offset="0.0316" stop-color="#9fffc7"/><stop offset="0.0894" stop-color="#21ff7d"/><stop offset="0.164" stop-color="#00ff3d"/><stop offset="0.253" stop-color="#00ff0a"/><stop offset="0.354" stop-color="#00ff00"/></linearGradient><linearGradient id="f149" gradientUnits="userSpaceOnUse" x1="1232" y1="232" x2="592" y2="-98"><stop offset="0" stop-color="#ffffff"/><stop offset="0.0316" stop-color="#a1ffc5"/><stop offset="0.0894" stop-color="#24ff79"/><stop offset="0.164" stop-color="#00ff36"/><stop offset="0.253" stop-color="#00ff02"/><stop offset="0.354" stop-color="#00ff00"/></linearGradient><linearGradient id="f150" gradientUnits="userSpaceOnUse" x1="1232" y1="232" x2="600" y2="-114"><stop offset="0" stop-color="#ffffff"/><stop offset="0.0316" stop-color="#a2ffc3"/><stop offset="0.0894" stop-color="#27ff74"/><stop offset="0.164" stop-color="#00ff30"/><stop offset="0.253" stop-color="#00ff00"/><stop offset="0.354" stop-color="#00ff00"/></linearGradient><linearGradient id="f151" gradientUnits="userSpaceOnUse" x1="1232" y1="232" x2="610" y2="-131"><stop offset="0" stop-color="#ffffff"/><stop offset="0.0316" stop-color="#a3ffc1"/><stop offset="0.0894" stop-color="#2aff70"/><stop offset="0.164" stop-color="#00ff2a"/><stop offset="0.253" stop-color="#00ff00"/><stop offset="0.354" stop-color="#00ff00"/></linearGradient><linearGradient id="f152" gradientUnits="userSpaceOnUse" x1="1232" y1="232" x2="619" y2="-147"><stop offset="0" stop-color="#ffffff"/><stop offset="0.0316" stop-color="#a4ffbf"/><stop offset="0.0894" stop-color="#2dff6c"/><stop offset="0.164" stop-color="#00ff24"/><stop offset="0.253" stop-color="#00ff00"/><stop offset="0.354" stop-color="#00ff00"/></linearGradient><linearGradient id="f153" gradientUnits="userSpaceOnUse" x1="1232" y1="232" x2="633" y2="-168"><stop offset="0" stop-color="#ffffff"/><stop offset="0.0316" stop-color="#a6ffbd"/><stop offset="0.0894" stop-color="#31ff66"/><stop offset="0.164" stop-color="#00ff1c"/><stop offset="0.253" stop-color="#00ff00"/></linearGradient><linearGradient id="f154" gradientUnits="userSpaceOnUse" x1="1232" y1="232" x2="651" y2="-194"><stop offset="0" stop-color="#ffffff"/><stop offset="0.0316" stop-color="#a8ffba"/><stop offset="0.0894" stop-color="#36ff60"/><stop offset="0.164" stop-color="#00ff12"/><stop offset="0.253" stop-color="#00ff00"/></linearGradient><linearGradient id="f155" gradientUnits="userSpaceOnUse" x1="1232" y1="232" x2="670" y2="-219"><stop offset="0" stop-color="#ffffff"/><stop offset="0.0316" stop-color="#aaffb7"/><stop offset="0.0894" stop-color="#3cff59"/><stop offset="0.164" stop-color="#00ff09"/><stop offset="0.253" stop-color="#00ff00"/></linearGradient><linearGradient id="f156" gradientUnits="userSpaceOnUse" x1="1232" y1="232" x2="692" y2="-245"><stop offset="0" stop-color="#ffffff"/><stop offset="0.0316" stop-color="#adffb4"/><stop offset="0.0894" stop-color="#43ff52"/><stop offset="0.164" stop-color="#00ff00"/><stop offset="0.253" stop-color="#00ff00"/></linearGradient><linearGradient id="f157" gradientUnits="userSpaceOnUse" x1="1232" y1="232" x2="720" y2="-275"><stop offset="0" stop-color="#ffffff"/><stop offset="0.0316" stop-color="#b1ffb1"/><stop offset="0.0894" stop-color="#4bff4b"/><stop offset="0.164" stop-color="#00ff00"/><stop offset="0.253" stop-color="#00ff00"/></linearGradient><linearGradient id="f158" gradientUnits="userSpaceOnUse" x1="1232" y1="232" x2="748" y2="-301"><stop offset="0" stop-color="#ffffff"/><stop offset="0.0316" stop-color="#b4ffae"/><stop offset="0.0894" stop-color="#53ff44"/><stop offset="0.164" stop-color="#00ff00"/><stop offset="0.253" stop-color="#00ff00"/></linearGradient><linearGradient id="f159" gradientUnits="userSpaceOnUse" x1="1232" y1="232" x2="766" y2="-318"><stop offset="0" stop-color="#ffffff"/><stop offset="0.0316" stop-color="#b7ffac"/><stop offset="0.0894" stop-color="#58ff40"/><stop offset="0.164" stop-color="#07ff00"/><stop offset="0.253" stop-color="#00ff00"/></linearGradient><linearGradient id="f160" gradientUnits="userSpaceOnUse" x1="1232" y1="232" x2="781" y2="-330"><stop offset="0" stop-color="#ffffff"/><stop offset="0.0316" stop-color="#b8ffab"/><stop offset="0.0894" stop-color="#5cff3d"/><stop offset="0.164" stop-color="#0eff00"/></linearGradient><linearGradient id="f161" gradientUnits="userSpaceOnUse" x1="1232" y1="232" x2="796" y2="-341"><stop offset="0" stop-color="#ffffff"/><stop offset="0.0316" stop-color="#baffaa"/><stop offset="0.0894" stop-color="#61ff3a"/><stop offset="0.164" stop-color="#14ff00"/></linearGradient><linearGradient id="f162" gradientUnits="userSpaceOnUse" x1="1232" y1="232" x2="811" y2="-352"><stop offset="0" stop-color="#ffffff"/><stop offset="0.0316" stop-color="#bcffa8"/><stop offset="0.0894" stop-color="#65ff37"/><stop offset="0.164" stop-color="#1aff00"/></linearGradient><linearGradient id="f163" gradientUnits="userSpaceOnUse" x1="1232" y1="232" x2="826" y2="-363"><stop offset="0" stop-color="#ffffff"/><stop offset="0.0316" stop-color="#beffa7"/><stop offset="0.0894" stop-color="#69ff34"/><stop offset="0.164" stop-color="#21ff00"/></linearGradient><linearGradient id="f164" gradientUnits="userSpaceOnUse" x1="1232" y1="232" x2="842" y2="-374"><stop offset="0" stop-color="#ffffff"/><stop offset="0.0316" stop-color="#c0ffa6"/><stop offset="0.0894" stop-color="#6eff31"/><stop offset="0.164" stop-color="#27ff00"/></linearGradient><linearGradient id="f165" gradientUnits="userSpaceOnUse" x1="1232" y1="232" x2="858" y2="-384"><stop offset="0" stop-color="#ffffff"/><stop offset="0.0316" stop-color="#c2ffa5"/><stop offset="0.0894" stop-color="#73ff2f"/><stop offset="0.164" stop-color="#2eff00"/></linearGradient><linearGradient id="f166" gradientUnits="userSpaceOnUse" x1="1232" y1="232" x2="874" y2="-393"><stop offset="0" stop-color="#ffffff"/><stop offset="0.0316" stop-color="#c4ffa4"/><stop offset="0.0894" stop-color="#77ff2c"/><stop offset="0.164" stop-color="#35ff00"/></linearGradient><linearGradient id="f167" gradientUnits="userSpaceOnUse" x1="1232" y1="232" x2="891" y2="-402"><stop offset="0" stop-color="#ffffff"/><stop offset="0.0316" stop-color="#c7ffa3"/><stop offset="0.0894" stop-color="#7cff2a"/><stop offset="0.164" stop-color="#3cff00"/></linearGradient><linearGradient id="f168" gradientUnits="userSpaceOnUse" x1="1232" y1="232" x2="908" y2="-411"><stop offset="0" stop-color="#ffffff"/><stop offset="0.0316" stop-color="#c9ffa2"/><stop offset="0.0894" stop-color="#81ff28"/><stop offset="0.164" stop-color="#43ff00"/></linearGradient><linearGradient id="f169" gradientUnits="userSpaceOnUse" x1="1232" y1="232" x2="925" y2="-419"><stop offset="0" stop-color="#ffffff"/><stop offset="0.0316" stop-color="#cbffa2"/><stop offset="0.0894" stop-color="#86ff25"/><stop offset="0.164" stop-color="#4aff00"/></linearGradient><linearGradient id="f170" gradientUnits="userSpaceOnUse" x1="1232" y1="232" x2="942" y2="-427"><stop offset="0" stop-color="#ffffff"/><stop offset="0.0316" stop-color="#cdffa1"/><stop offset="0.0894" stop-color="#8bff23"/><stop offset="0.164" stop-color="#52ff00"/></linearGradient><linearGradient id="f171" gradientUnits="userSpaceOnUse" x1="1232" y1="232" x2="959" y2="-435"><stop offset="0" stop-color="#ffffff"/><stop offset="0.0316" stop-color="#d0ffa0"/><stop offset="0.0894" stop-color="#90ff21"/><stop offset="0.164" stop-color="#59ff00"/></linearGradient><linearGradient id="f172" gradientUnits="userSpaceOnUse" x1="1232" y1="232" x2="977" y2="-441"><stop offset="0" stop-color="#ffffff"/><stop offset="0.0316" stop-color="#d2ff9f"/><stop offset="0.0894" stop-color="#96ff1f"/><stop offset="0.164" stop-color="#61ff00"/></linearGradient><linearGradient id="f173" gradientUnits="userSpaceOnUse" x1="1232" y1="232" x2="994" y2="-448"><stop offset="0" stop-color="#ffffff"/><stop offset="0.0316" stop-color="#d4ff9f"/><stop offset="0.0894" stop-color="#9bff1d"/><stop offset="0.164" stop-color="#68ff00"/></linearGradient><linearGradient id="f174" gradientUnits="userSpaceOnUse" x1="1232" y1="232" x2="1012" y2="-454"><stop offset="0" stop-color="#ffffff"/><stop offset="0.0316" stop-color="#d7ff9e"/><stop offset="0.0894" stop-color="#a0ff1c"/><stop offset="0.164" stop-color="#70ff00"/></linearGradient><linearGradient id="f175" gradientUnits="userSpaceOnUse" x1="1232" y1="232" x2="1030" y2="-459"><stop offset="0" stop-color="#ffffff"/><stop offset="0.0316" stop-color="#d9ff9e"/><stop offset="0.0894" stop-color="#a6ff1a"/><stop offset="0.164" stop-color="#78ff00"/></linearGradient><linearGradient id="f176" gradientUnits="userSpaceOnUse" x1="1232" y1="232" x2="1048" y2="-464"><stop offset="0" stop-color="#ffffff"/><stop offset="0.0316" stop-color="#dcff9d"/><stop offset="0.0894" stop-color="#abff18"/><stop offset="0.164" stop-color="#81ff00"/></linearGradient><linearGradient id="f177" gradientUnits="userSpaceOnUse" x1="1232" y1="232" x2="1067" y2="-469"><stop offset="0" stop-color="#ffffff"/><stop offset="0.0316" stop-color="#deff9d"/><stop offset="0.0894" stop-color="#b1ff17"/><stop offset="0.164" stop-color="#89ff00"/></linearGradient><linearGradient id="f178" gradientUnits="userSpaceOnUse" x1="1232" y1="232" x2="1085" y2="-473"><stop offset="0" stop-color="#ffffff"/><stop offset="0.0316" stop-color="#e1ff9d"/><stop offset="0.0894" stop-color="#b7ff16"/><stop offset="0.164" stop-color="#91ff00"/></linearGradient><linearGradient id="f179" gradientUnits="userSpaceOnUse" x1="1232" y1="232" x2="1104" y2="-477"><stop offset="0" stop-color="#ffffff"/><stop offset="0.0316" stop-color="#e3ff9c"/><stop offset="0.0894" stop-color="#bdff14"/><stop offset="0.164" stop-color="#9aff00"/></linearGradient><linearGradient id="f180" gradientUnits="userSpaceOnUse" x1="1232" y1="232" x2="1122" y2="-480"><stop offset="0" stop-color="#ffffff"/><stop offset="0.0316" stop-color="#e6ff9c"/><stop offset="0.0894" stop-color="#c3ff13"/><stop offset="0.164" stop-color="#a3ff00"/></linearGradient><linearGradient id="f181" gradientUnits="userSpaceOnUse" x1="1232" y1="232" x2="1141" y2="-482"><stop offset="0" stop-color="#ffffff"/><stop offset="0.0316" stop-color="#e8ff9c"/><stop offset="0.0894" stop-color="#c9ff12"/><stop offset="0.164" stop-color="#acff00"/></linearGradient><linearGradient id="f182" gradientUnits="userSpaceOnUse" x1="1232" y1="232" x2="1160" y2="-484"><stop offset="0" stop-color="#ffffff"/><stop offset="0.0316" stop-color="#ebff9c"/><stop offset="0.0894" stop-color="#cfff11"/><stop offset="0.164" stop-color="#b5ff00"/></linearGradient><linearGradient id="f183" gradientUnits="userSpaceOnUse" x1="1232" y1="232" x2="1178" y2="-486"><stop offset="0" stop-color="#ffffff"/><stop offset="0.0316" stop-color="#edff9c"/><stop offset="0.0894" stop-color="#d5ff11"/><stop offset="0.164" stop-color="#beff00"/></linearGradient><linearGradient id="f184" gradientUnits="userSpaceOnUse" x1="1232" y1="232" x2="1197" y2="-487"><stop offset="0" stop-color="#ffffff"/><stop offset="0.0316" stop-color="#f0ff9c"/><stop offset="0.0894" stop-color="#dbff10"/><stop offset="0.164" stop-color="#c8ff00"/></linearGradient><linearGradient id="f185" gradientUnits="userSpaceOnUse" x1="1232" y1="232" x2="1216" y2="-488"><stop offset="0" stop-color="#ffffff"/><stop offset="0.0316" stop-color="#f3ff9c"/><stop offset="0.0894" stop-color="#e2ff10"/><stop offset="0.164" stop-color="#d2ff00"/></linearGradient><linearGradient id="f186" gradientUnits="userSpaceOnUse" x1="1232" y1="232" x2="1235" y2="-488"><stop offset="0" stop-color="#ffffff"/><stop offset="0.0316" stop-color="#f6ff9c"/><stop offset="0.0894" stop-color="#e8ff0f"/><stop offset="0.164" stop-color="#dcff00"/></linearGradient><linearGradient id="f187" gradientUnits="userSpaceOnUse" x1="1232" y1="232" x2="1254" y2="-488"><stop offset="0" stop-color="#ffffff"/><stop offset="0.0316" stop-color="#f8ff9c"/><stop offset="0.0894" stop-color="#efff0f"/><stop offset="0.164" stop-color="#e6ff00"/></linearGradient><linearGradient id="f188" gradientUnits="userSpaceOnUse" x1="1232" y1="232" x2="1273" y2="-487"><stop offset="0" stop-color="#ffffff"/><stop offset="0.0316" stop-color="#fbff9d"/><stop offset="0.0894" stop-color="#f5ff0f"/><stop offset="0.164" stop-color="#f0ff00"/></linearGradient><linearGradient id="f189" gradientUnits="userSpaceOnUse" x1="1232" y1="232" x2="1291" y2="-486"><stop offset="0" stop-color="#ffffff"/><stop offset="0.0316" stop-color="#feff9d"/><stop offset="0.0894" stop-color="#fcff0f"/><stop offset="0.164" stop-color="#fbff00"/></linearGradient><linearGradient id="f190" gradientUnits="userSpaceOnUse" x1="1232" y1="232" x2="1310" y2="-484"><stop offset="0" stop-color="#ffffff"/><stop offset="0.0316" stop-color="#fffd9d"/><stop offset="0.0894" stop-color="#fffb0f"/><stop offset="0.164" stop-color="#fff900"/></linearGradient><linearGradient id="f191" gradientUnits="userSpaceOnUse" x1="1232" y1="232" x2="1329" y2="-482"><stop offset="0" stop-color="#ffffff"/><stop offset="0.0316" stop-color="#fffb9b"/><stop offset="0.0894" stop-color="#fff50e"/><stop offset="0.164" stop-color="#ffef00"/></linearGradient><linearGradient id="f192" gradientUnits="userSpaceOnUse" x1="1232" y1="232" x2="1347" y2="-479"><stop offset="0" stop-color="#ffffff"/><stop offset="0.0316" stop-color="#fff89a"/><stop offset="0.0894" stop-color="#ffee0e"/><stop offset="0.164" stop-color="#ffe500"/></linearGradient><linearGradient id="f193" gradientUnits="userSpaceOnUse" x1="1232" y1="232" x2="1366" y2="-475"><stop offset="0" stop-color="#ffffff"/><stop offset="0.0316" stop-color="#fff599"/><stop offset="0.0894" stop-color="#ffe80f"/><stop offset="0.164" stop-color="#ffdd00"/></linearGradient><linearGradient id="f194" gradientUnits="userSpaceOnUse" x1="1232" y1="232" x2="1384" y2="-472"><stop offset="0" stop-color="#ffffff"/><stop offset="0.0316" stop-color="#fff398"/><stop offset="0.0894" stop-color="#ffe20f"/><stop offset="0.164" stop-color="#ffd400"/></linearGradient><linearGradient id="f195" gradientUnits="userSpaceOnUse" x1="1232" y1="232" x2="1403" y2="-467"><stop offset="0" stop-color="#ffffff"/><stop offset="0.0316" stop-color="#fff097"/><stop offset="0.0894" stop-color="#ffdd0f"/><stop offset="0.164" stop-color="#ffcc00"/></linearGradient><linearGradient id="f196" gradientUnits="userSpaceOnUse" x1="1232" y1="232" x2="1421" y2="-463"><stop offset="0" stop-color="#ffffff"/><stop offset="0.0316" stop-color="#ffee97"/><stop offset="0.0894" stop-color="#ffd710"/><stop offset="0.164" stop-color="#ffc500"/></linearGradient><linearGradient id="f197" gradientUnits="userSpaceOnUse" x1="1232" y1="232" x2="1439" y2="-458"><stop offset="0" stop-color="#ffffff"/><stop offset="0.0316" stop-color="#ffeb96"/><stop offset="0.0894" stop-color="#ffd210"/><stop offset="0.164" stop-color="#ffbe00"/></linearGradient><linearGradient id="f198" gradientUnits="userSpaceOnUse" x1="1232" y1="232" x2="1457" y2="-452"><stop offset="0" stop-color="#ffffff"/><stop offset="0.0316" stop-color="#ffe995"/><stop offset="0.0894" stop-color="#ffcd11"/><stop offset="0.164" stop-color="#ffb700"/></linearGradient><linearGradient id="f199" gradientUnits="userSpaceOnUse" x1="1232" y1="232" x2="1475" y2="-446"><stop offset="0" stop-color="#ffffff"/><stop offset="0.0316" stop-color="#ffe795"/><stop offset="0.0894" stop-color="#ffc811"/><stop offset="0.164" stop-color="#ffb000"/></linearGradient><linearGradient id="f200" gradientUnits="userSpaceOnUse" x1="1232" y1="232" x2="1496" y2="-438"><stop offset="0" stop-color="#ffffff"/><stop offset="0.0316" stop-color="#ffe494"/><stop offset="0.0894" stop-color="#ffc312"/><stop offset="0.164" stop-color="#ffa900"/></linearGradient><linearGradient id="f201" gradientUnits="userSpaceOnUse" x1="1232" y1="232" x2="1522" y2="-427"><stop offset="0" stop-color="#ffffff"/><stop offset="0.0316" stop-color="#ffe193"/><stop offset="0.0894" stop-color="#ffbc14"/><stop offset="0.164" stop-color="#ffa100"/></linearGradient><linearGradient id="f202" gradientUnits="userSpaceOnUse" x1="1232" y1="232" x2="1550" y2="-414"><stop offset="0" stop-color="#ffffff"/><stop offset="0.0316" stop-color="#ffdd93"/><stop offset="0.0894" stop-color="#ffb516"/><stop offset="0.164" stop-color="#ff9800"/></linearGradient><linearGradient id="f203" gradientUnits="userSpaceOnUse" x1="1232" y1="232" x2="1578" y2="-399"><stop offset="0" stop-color="#ffffff"/><stop offset="0.0316" stop-color="#ffd992"/><stop offset="0.0894" stop-color="#ffaf17"/><stop offset="0.164" stop-color="#ff8f00"/></linearGradient><linearGradient id="f204" gradientUnits="userSpaceOnUse" x1="1232" y1="232" x2="1605" y2="-384"><stop offset="0" stop-color="#ffffff"/><stop offset="0.0316" stop-color="#ffd692"/><stop offset="0.0894" stop-color="#ffa91a"/><stop offset="0.164" stop-color="#ff8800"/></linearGradient><linearGradient id="f205" gradientUnits="userSpaceOnUse" x1="1232" y1="232" x2="1632" y2="-367"><stop offset="0" stop-color="#ffffff"/><stop offset="0.0316" stop-color="#ffd392"/><stop offset="0.0894" stop-color="#ffa31c"/><stop offset="0.164" stop-color="#ff8100"/></linearGradient><linearGradient id="f206" gradientUnits="userSpaceOnUse" x1="1232" y1="232" x2="1662" y2="-345"><stop offset="0" stop-color="#ffffff"/><stop offset="0.0316" stop-color="#ffcf92"/><stop offset="0.0894" stop-color="#ff9c1f"/><stop offset="0.164" stop-color="#ff7900"/></linearGradient><linearGradient id="f207" gradientUnits="userSpaceOnUse" x1="1232" y1="232" x2="1697" y2="-318"><stop offset="0" stop-color="#ffffff"/><stop offset="0.0316" stop-color="#ffcb93"/><stop offset="0.0894" stop-color="#ff9523"/><stop offset="0.164" stop-color="#ff7000"/></linearGradient><linearGradient id="f208" gradientUnits="userSpaceOnUse" x1="1232" y1="232" x2="1730" y2="-288"><stop offset="0" stop-color="#ffffff"/><stop offset="0.0316" stop-color="#ffc794"/><stop offset="0.0894" stop-color="#ff8e27"/><stop offset="0.164" stop-color="#ff6800"/></linearGradient><linearGradient id="f209" gradientUnits="userSpaceOnUse" x1="1232" y1="232" x2="1763" y2="-255"><stop offset="0" stop-color="#ffffff"/><stop offset="0.0316" stop-color="#ffc395"/><stop offset="0.0894" stop-color="#ff882b"/><stop offset="0.164" stop-color="#ff6100"/></linearGradient><linearGradient id="f210" gradientUnits="userSpaceOnUse" x1="1232" y1="232" x2="1797" y2="-214"><stop offset="0" stop-color="#ffffff"/><stop offset="0.0316" stop-color="#ffbf97"/><stop offset="0.0894" stop-color="#ff8131"/><stop offset="0.164" stop-color="#ff5900"/></linearGradient><linearGradient id="f211" gradientUnits="userSpaceOnUse" x1="1232" y1="232" x2="1830" y2="-168"><stop offset="0" stop-color="#ffffff"/><stop offset="0.0316" stop-color="#ffbb99"/><stop offset="0.0894" stop-color="#ff7b37"/><stop offset="0.164" stop-color="#ff5100"/><stop offset="0.253" stop-color="#ff3700"/></linearGradient><linearGradient id="f212" gradientUnits="userSpaceOnUse" x1="1232" y1="232" x2="1857" y2="-125"><stop offset="0" stop-color="#ffffff"/><stop offset="0.0316" stop-color="#ffb89b"/><stop offset="0.0894" stop-color="#ff753d"/><stop offset="0.164" stop-color="#ff4b02"/><stop offset="0.253" stop-color="#ff3000"/></linearGradient><linearGradient id="f213" gradientUnits="userSpaceOnUse" x1="1232" y1="232" x2="1877" y2="-87"><stop offset="0" stop-color="#ffffff"/><stop offset="0.0316" stop-color="#ffb69e"/><stop offset="0.0894" stop-color="#ff7143"/><stop offset="0.164" stop-color="#ff460a"/><stop offset="0.253" stop-color="#ff2b00"/></linearGradient><linearGradient id="f214" gradientUnits="userSpaceOnUse" x1="1232" y1="232" x2="1896" y2="-47"><stop offset="0" stop-color="#ffffff"/><stop offset="0.0316" stop-color="#ffb3a0"/><stop offset="0.0894" stop-color="#ff6d49"/><stop offset="0.164" stop-color="#ff4112"/><stop offset="0.253" stop-color="#ff2600"/></linearGradient><linearGradient id="f215" gradientUnits="userSpaceOnUse" x1="1232" y1="232" x2="1911" y2="-5"><stop offset="0" stop-color="#ffffff"/><stop offset="0.0316" stop-color="#ffb1a3"/><stop offset="0.0894" stop-color="#ff6a4f"/><stop offset="0.164" stop-color="#ff3d1a"/><stop offset="0.253" stop-color="#ff2200"/><stop offset="0.354" stop-color="#ff1000"/></linearGradient><linearGradient id="f216" gradientUnits="userSpaceOnUse" x1="1232" y1="232" x2="1923" y2="30"><stop offset="0" stop-color="#ffffff"/><stop offset="0.0316" stop-color="#ffb0a6"/><stop offset="0.0894" stop-color="#ff6754"/><stop offset="0.164" stop-color="#ff3a22"/><stop offset="0.253" stop-color="#ff1e02"/><stop offset="0.354" stop-color="#ff0c00"/></linearGradient><linearGradient id="f217" gradientUnits="userSpaceOnUse" x1="1232" y1="232" x2="1931" y2="61"><stop offset="0" stop-color="#ffffff"/><stop offset="0.0316" stop-color="#ffaea8"/><stop offset="0.0894" stop-color="#ff6559"/><stop offset="0.164" stop-color="#ff3728"/><stop offset="0.253" stop-color="#ff1b09"/><stop offset="0.354" stop-color="#ff0900"/></linearGradient><linearGradient id="f218" gradientUnits="userSpaceOnUse" x1="1232" y1="232" x2="1938" y2="91"><stop offset="0" stop-color="#ffffff"/><stop offset="0.0316" stop-color="#ffadab"/><stop offset="0.0894" stop-color="#ff635e"/><stop offset="0.164" stop-color="#ff352e"/><stop offset="0.253" stop-color="#ff1811"/><stop offset="0.354" stop-color="#ff0600"/><stop offset="0.465" stop-color="#ff0000"/></linearGradient><linearGradient id="f219" gradientUnits="userSpaceOnUse" x1="1232" y1="232" x2="1943" y2="122"><stop offset="0" stop-color="#ffffff"/><stop offset="0.0316" stop-color="#ffacad"/><stop offset="0.0894" stop-color="#ff6163"/><stop offset="0.164" stop-color="#ff3235"/><stop offset="0.253" stop-color="#ff1518"/><stop offset="0.354" stop-color="#ff0306"/><stop offset="0.465" stop-color="#ff0000"/></linearGradient><linearGradient id="f220" gradientUnits="userSpaceOnUse" x1="1232" y1="232" x2="1947" y2="153"><stop offset="0" stop-color="#ffffff"/><stop offset="0.0316" stop-color="#ffacb0"/><stop offset="0.0894" stop-color="#ff5f68"/><stop offset="0.164" stop-color="#ff303b"/><stop offset="0.253" stop-color="#ff131f"/><stop offset="0.354" stop-color="#ff000e"/><stop offset="0.465" stop-color="#ff0001"/><stop offset="0.586" stop-color="#ff0000"/></linearGradient><linearGradient id="f221" gradientUnits="userSpaceOnUse" x1="1232" y1="232" x2="1950" y2="185"><stop offset="0" stop-color="#ffffff"/><stop offset="0.0316" stop-color="#ffabb3"/><stop offset="0.0894" stop-color="#ff5e6d"/><stop offset="0.164" stop-color="#ff2e42"/><stop offset="0.253" stop-color="#ff1027"/><stop offset="0.354" stop-color="#ff0016"/><stop offset="0.465" stop-color="#ff000a"/><stop offset="0.586" stop-color="#ff0001"/><stop offset="0.716" stop-color="#ff0000"/></linearGradient><linearGradient id="f222" gradientUnits="userSpaceOnUse" x1="1232" y1="232" x2="1952" y2="216"><stop offset="0" stop-color="#ffffff"/><stop offset="0.0316" stop-color="#ffaab6"/><stop offset="0.0894" stop-color="#ff5c72"/><stop offset="0.164" stop-color="#ff2c49"/><stop offset="0.253" stop-color="#ff0e2f"/><stop offset="0.354" stop-color="#ff001e"/><stop offset="0.465" stop-color="#ff0013"/><stop offset="0.586" stop-color="#ff000a"/><stop offset="0.716" stop-color="#ff0004"/></linearGradient><clipPath id="hs"><path d="M1294.5 600.9 L1294.5 600.9 L1294.5 600.9 L1294.4 600.9 L1294.4 600.9 L1294.4 600.9 L1294.4 600.9 L1294.3 600.9 L1294.3 600.9 L1294.3 601.0 L1294.3 601.0 L1294.2 601.0 L1294.2 601.1 L1294.2 601.1 L1294.2 601.2 L1294.1 601.2 L1294.1 601.2 L1294.0 601.2 L1294.0 601.2 L1294.0 601.2 L1293.9 601.2 L1293.9 601.2 L1293.8 601.2 L1293.8 601.2 L1293.7 601.2 L1293.7 601.2 L1293.6 601.3 L1293.6 601.3 L1293.5 601.3 L1293.5 601.4 L1293.4 601.4 L1293.4 601.5 L1293.3 601.5 L1293.3 601.5 L1293.2 601.5 L1293.1 601.5 L1293.1 601.5 L1293.0 601.5 L1292.9 601.5 L1292.9 601.5 L1292.8 601.5 L1292.7 601.5 L1292.6 601.5 L1292.5 601.5 L1292.5 601.5 L1292.4 601.5 L1292.3 601.5 L1292.2 601.5 L1292.1 601.5 L1292.0 601.5 L1291.9 601.5 L1291.8 601.5 L1291.7 601.5 L1291.6 601.5 L1291.5 601.5 L1291.3 601.5 L1291.2 601.5 L1291.0 601.4 L1290.9 601.4 L1290.7 601.3 L1290.5 601.2 L1290.3 601.1 L1290.1 601.0 L1289.9 600.9 L1289.6 600.7 L1289.3 600.5 L1289.0 600.3 L1288.7 600.1 L1288.4 599.9 L1288.0 599.7 L1287.6 599.4 L1287.2 599.2 L1286.8 598.9 L1286.4 598.6 L1286.0 598.3 L1285.6 597.9 L1285.1 597.6 L1284.7 597.2 L1284.2 596.9 L1283.7 596.5 L1283.1 596.0 L1282.5 595.6 L1281.9 595.1 L1281.3 594.6 L1280.6 594.0 L1279.9 593.5 L1279.2 592.9 L1278.5 592.3 L1277.7 591.7 L1277.0 591.0 L1276.2 590.4 L1275.4 589.7 L1274.5 589.0 L1273.7 588.2 L1272.8 587.5 L1271.9 586.7 L1270.9 585.9 L1270.0 585.1 L1269.0 584.3 L1268.0 583.4 L1266.9 582.6 L1265.9 581.7 L1264.7 580.8 L1263.6 579.8 L1262.4 578.8 L1261.1 577.8 L1259.8 576.7 L1258.4 575.6 L1257.0 574.5 L1255.6 573.3 L1254.1 572.1 L1252.6 570.9 L1251.1 569.6 L1249.5 568.3 L1248.0 567.0 L1246.3 565.7 L1244.7 564.3 L1243.0 562.9 L1241.2 561.4 L1239.4 559.9 L1237.6 558.3 L1235.6 556.6 L1233.7 554.9 L1231.7 553.2 L1229.6 551.4 L1227.5 549.5 L1225.4 547.5 L1223.2 545.5 L1220.9 543.3 L1218.6 541.1 L1216.3 538.9 L1214.0 536.6 L1211.6 534.2 L1209.1 531.7 L1206.5 529.1 L1203.8 526.2 L1200.9 523.0 L1198.0 519.7 L1194.9 516.2 L1191.7 512.4 L1188.4 508.6 L1185.0 504.5 L1181.6 500.2 L1178.0 495.8 L1174.4 491.1 L1170.8 486.3 L1167.0 481.3 L1163.2 476.1 L1159.3 470.7 L1155.3 465.2 L1151.3 459.5 L1147.2 453.6 L1143.1 447.5 L1139.0 441.3 L1134.8 434.8 L1130.6 428.1 L1126.3 421.3 L1122.0 414.4 L1117.7 407.4 L1113.4 400.3 L1109.2 393.2 L1105.0 386.1 L1100.8 378.8 L1096.5 371.4 L1092.3 364.0 L1088.2 356.6 L1084.2 349.1 L1080.3 341.8 L1076.5 334.5 L1072.9 327.3 L1069.4 320.1 L1066.1 312.8 L1062.8 305.6 L1059.6 298.5 L1056.6 291.6 L1053.7 284.8 L1051.0 278.2 L1048.4 271.7 L1045.9 265.4 L1043.5 259.2 L1041.3 253.1 L1039.2 247.2 L1037.2 241.5 L1035.4 235.9 L1033.7 230.6 L1032.1 225.6 L1030.7 220.7 L1029.4 216.0 L1028.2 211.5 L1027.2 207.2 L1026.3 203.1 L1025.4 199.1 L1024.7 195.3 L1024.1 191.7 L1023.5 188.2 L1023.1 185.0 L1022.8 181.9 L1022.6 178.9 L1022.5 176.1 L1022.5 173.4 L1022.5 170.7 L1022.7 168.2 L1022.9 165.8 L1023.2 163.6 L1023.6 161.4 L1024.1 159.4 L1024.6 157.4 L1025.3 155.6 L1025.9 153.8 L1026.7 152.2 L1027.6 150.6 L1028.5 149.1 L1029.5 147.8 L1030.6 146.5 L1031.7 145.3 L1032.9 144.2 L1034.1 143.1 L1035.3 142.2 L1036.7 141.3 L1038.1 140.5 L1039.5 139.8 L1041.0 139.2 L1042.5 138.6 L1044.0 138.1 L1045.6 137.6 L1047.2 137.2 L1048.9 136.9 L1050.6 136.6 L1052.3 136.3 L1054.0 136.1 L1055.8 135.9 L1057.6 135.8 L1059.3 135.6 L1061.2 135.5 L1063.0 135.4 L1064.9 135.3 L1066.7 135.2 L1068.6 135.2 L1070.5 135.2 L1072.4 135.1 L1074.3 135.1 L1076.2 135.1 L1078.1 135.1 L1080.0 135.1 L1081.9 135.1 L1083.8 135.2 L1085.7 135.2 L1087.6 135.3 L1089.5 135.3 L1091.5 135.4 L1093.4 135.4 L1095.4 135.5 L1097.3 135.6 L1099.3 135.7 L1101.3 135.8 L1103.3 135.9 L1105.4 136.1 L1107.4 136.2 L1109.5 136.3 L1111.6 136.5 L1113.7 136.6 L1115.9 136.8 L1118.1 136.9 L1120.2 137.1 L1122.5 137.3 L1124.7 137.5 L1127.0 137.7 L1129.2 137.9 L1131.5 138.1 L1133.9 138.3 L1136.2 138.5 L1138.6 138.7 L1141.0 138.9 L1143.5 139.2 L1145.9 139.4 L1148.4 139.7 L1151.0 139.9 L1153.5 140.2 L1156.1 140.5 L1158.8 140.7 L1161.4 141.0 L1164.1 141.3 L1166.9 141.6 L1169.6 141.9 L1172.5 142.2 L1175.3 142.5 L1178.2 142.8 L1181.1 143.1 L1184.1 143.4 L1187.0 143.8 L1190.1 144.1 L1193.1 144.4 L1196.2 144.8 L1199.4 145.1 L1202.6 145.5 L1205.8 145.8 L1209.1 146.2 L1212.4 146.6 L1215.7 147.0 L1219.1 147.3 L1222.6 147.7 L1226.1 148.1 L1229.6 148.5 L1233.2 148.9 L1236.8 149.3 L1240.4 149.7 L1244.1 150.2 L1247.9 150.6 L1251.6 151.0 L1255.5 151.5 L1259.3 151.9 L1263.2 152.4 L1267.2 152.8 L1271.2 153.3 L1275.2 153.7 L1279.3 154.2 L1283.5 154.7 L1287.6 155.2 L1291.8 155.6 L1296.1 156.1 L1300.4 156.6 L1304.7 157.1 L1309.1 157.6 L1313.5 158.1 L1318.0 158.6 L1322.5 159.2 L1327.0 159.7 L1331.6 160.2 L1336.2 160.7 L1340.8 161.3 L1345.5 161.8 L1350.2 162.3 L1354.9 162.9 L1359.7 163.4 L1364.5 164.0 L1369.3 164.5 L1374.1 165.1 L1378.9 165.6 L1383.8 166.2 L1388.6 166.7 L1393.5 167.3 L1398.4 167.9 L1403.3 168.4 L1408.2 169.0 L1413.0 169.5 L1417.8 170.1 L1422.5 170.6 L1427.3 171.2 L1432.0 171.7 L1436.7 172.3 L1441.4 172.8 L1446.0 173.3 L1450.7 173.9 L1455.4 174.4 L1460.0 174.9 L1464.7 175.5 L1469.3 176.0 L1473.9 176.5 L1478.5 177.1 L1483.0 177.6 L1487.4 178.1 L1491.8 178.6 L1496.1 179.1 L1500.3 179.5 L1504.5 180.0 L1508.6 180.5 L1512.7 180.9 L1516.7 181.4 L1520.7 181.8 L1524.6 182.3 L1528.4 182.7 L1532.2 183.2 L1535.9 183.6 L1539.5 184.0 L1543.1 184.4 L1546.6 184.8 L1550.1 185.2 L1553.4 185.6 L1556.7 186.0 L1559.9 186.4 L1563.1 186.7 L1566.2 187.1 L1569.2 187.4 L1572.2 187.8 L1575.1 188.1 L1577.9 188.4 L1580.7 188.8 L1583.4 189.1 L1586.0 189.4 L1588.6 189.6 L1591.1 189.9 L1593.6 190.2 L1596.0 190.5 L1598.4 190.8 L1600.7 191.0 L1603.0 191.3 L1605.2 191.6 L1607.4 191.8 L1609.5 192.0 L1611.6 192.3 L1613.7 192.5 L1615.7 192.8 L1617.7 193.0 L1619.7 193.2 L1621.6 193.4 L1623.5 193.7 L1625.4 193.9 L1627.2 194.1 L1629.0 194.3 L1630.7 194.5 L1632.4 194.7 L1634.1 194.9 L1635.8 195.1 L1637.4 195.3 L1638.9 195.4 L1640.4 195.6 L1641.9 195.8 L1643.4 195.9 L1644.8 196.1 L1646.1 196.3 L1647.5 196.4 L1648.8 196.5 L1650.0 196.7 L1651.2 196.8 L1652.4 197.0 L1653.5 197.1 L1654.5 197.2 L1655.5 197.3 L1656.4 197.4 L1657.4 197.5 L1658.3 197.6 L1659.4 197.8 L1660.5 197.9 L1661.8 198.0 L1663.1 198.2 L1664.5 198.4 L1666.0 198.5 L1667.4 198.7 L1668.9 198.8 L1670.3 199.0 L1671.6 199.2 L1672.9 199.3 L1674.2 199.5 L1675.6 199.6 L1676.8 199.8 L1678.1 199.9 L1679.2 200.0 L1680.3 200.2 L1681.2 200.3 L1682.0 200.4 L1682.6 200.4 L1683.2 200.5 L1683.7 200.6 L1684.0 200.6 L1684.4 200.6 L1684.7 200.7 L1684.9 200.7 Z"/></clipPath><clipPath id="plot"><rect x="1021" y="124" width="639" height="491"/></clipPath></defs><rect x="1021" y="124" width="639" height="491" fill="#242424"/><g clip-path="url(#plot)"><g clip-path="url(#hs)"><g shape-rendering="crispEdges"><path fill="url(#f0)" d="M1231.7 231.9L1988 231L1987 266Z"/><path fill="url(#f1)" d="M1231.7 231.9L1987 264L1985 299Z"/><path fill="url(#f2)" d="M1231.7 231.9L1985 297L1981 332Z"/><path fill="url(#f3)" d="M1231.7 231.9L1981 329L1976 364Z"/><path fill="url(#f4)" d="M1231.7 231.9L1976 362L1972 384Z"/><path fill="url(#f5)" d="M1231.7 231.9L1973 381L1968 403Z"/><path fill="url(#f6)" d="M1231.7 231.9L1969 401L1963 422Z"/><path fill="url(#f7)" d="M1231.7 231.9L1964 420L1958 441Z"/><path fill="url(#f8)" d="M1231.7 231.9L1959 439L1952 460Z"/><path fill="url(#f9)" d="M1231.7 231.9L1953 458L1946 479Z"/><path fill="url(#f10)" d="M1231.7 231.9L1947 477L1939 498Z"/><path fill="url(#f11)" d="M1231.7 231.9L1940 496L1932 516Z"/><path fill="url(#f12)" d="M1231.7 231.9L1933 514L1925 534Z"/><path fill="url(#f13)" d="M1231.7 231.9L1925 532L1916 552Z"/><path fill="url(#f14)" d="M1231.7 231.9L1917 550L1908 570Z"/><path fill="url(#f15)" d="M1231.7 231.9L1909 568L1899 588Z"/><path fill="url(#f16)" d="M1231.7 231.9L1900 586L1889 605Z"/><path fill="url(#f17)" d="M1231.7 231.9L1890 603L1879 622Z"/><path fill="url(#f18)" d="M1231.7 231.9L1880 620L1869 639Z"/><path fill="url(#f19)" d="M1231.7 231.9L1870 637L1858 656Z"/><path fill="url(#f20)" d="M1231.7 231.9L1859 654L1847 672Z"/><path fill="url(#f21)" d="M1231.7 231.9L1848 670L1835 688Z"/><path fill="url(#f22)" d="M1231.7 231.9L1836 686L1823 703Z"/><path fill="url(#f23)" d="M1231.7 231.9L1824 702L1810 719Z"/><path fill="url(#f24)" d="M1231.7 231.9L1812 717L1797 734Z"/><path fill="url(#f25)" d="M1231.7 231.9L1799 732L1784 748Z"/><path fill="url(#f26)" d="M1231.7 231.9L1785 747L1779 753Z"/><path fill="url(#f27)" d="M1231.7 231.9L1781 751L1775 758Z"/><path fill="url(#f28)" d="M1231.7 231.9L1776 756L1770 763Z"/><path fill="url(#f29)" d="M1231.7 231.9L1772 761L1761 772Z"/><path fill="url(#f30)" d="M1231.7 231.9L1762 770L1756 776Z"/><path fill="url(#f31)" d="M1231.7 231.9L1758 775L1751 781Z"/><path fill="url(#f32)" d="M1231.7 231.9L1753 779L1746 786Z"/><path fill="url(#f33)" d="M1231.7 231.9L1748 784L1742 790Z"/><path fill="url(#f34)" d="M1231.7 231.9L1743 788L1727 803Z"/><path fill="url(#f35)" d="M1231.7 231.9L1729 802L1712 816Z"/><path fill="url(#f36)" d="M1231.7 231.9L1713 815L1696 828Z"/><path fill="url(#f37)" d="M1231.7 231.9L1698 827L1680 840Z"/><path fill="url(#f38)" d="M1231.7 231.9L1682 839L1664 852Z"/><path fill="url(#f39)" d="M1231.7 231.9L1666 851L1648 863Z"/><path fill="url(#f40)" d="M1231.7 231.9L1650 862L1631 874Z"/><path fill="url(#f41)" d="M1231.7 231.9L1633 872L1614 884Z"/><path fill="url(#f42)" d="M1231.7 231.9L1616 883L1597 894Z"/><path fill="url(#f43)" d="M1231.7 231.9L1599 893L1580 903Z"/><path fill="url(#f44)" d="M1231.7 231.9L1582 902L1562 912Z"/><path fill="url(#f45)" d="M1231.7 231.9L1564 911L1544 920Z"/><path fill="url(#f46)" d="M1231.7 231.9L1546 919L1526 928Z"/><path fill="url(#f47)" d="M1231.7 231.9L1528 927L1508 936Z"/><path fill="url(#f48)" d="M1231.7 231.9L1510 935L1489 943Z"/><path fill="url(#f49)" d="M1231.7 231.9L1491 942L1470 949Z"/><path fill="url(#f50)" d="M1231.7 231.9L1473 948L1452 955Z"/><path fill="url(#f51)" d="M1231.7 231.9L1454 955L1433 961Z"/><path fill="url(#f52)" d="M1231.7 231.9L1435 960L1413 966Z"/><path fill="url(#f53)" d="M1231.7 231.9L1416 965L1394 970Z"/><path fill="url(#f54)" d="M1231.7 231.9L1396 970L1375 974Z"/><path fill="url(#f55)" d="M1231.7 231.9L1377 974L1355 978Z"/><path fill="url(#f56)" d="M1231.7 231.9L1358 977L1336 981Z"/><path fill="url(#f57)" d="M1231.7 231.9L1338 980L1316 983Z"/><path fill="url(#f58)" d="M1231.7 231.9L1318 983L1296 985Z"/><path fill="url(#f59)" d="M1231.7 231.9L1299 985L1277 987Z"/><path fill="url(#f60)" d="M1231.7 231.9L1279 986L1257 987Z"/><path fill="url(#f61)" d="M1231.7 231.9L1259 987L1224 988Z"/><path fill="url(#f62)" d="M1231.7 231.9L1226 988L1191 987Z"/><path fill="url(#f63)" d="M1231.7 231.9L1193 987L1158 984Z"/><path fill="url(#f64)" d="M1231.7 231.9L1160 985L1125 980Z"/><path fill="url(#f65)" d="M1231.7 231.9L1128 981L1093 975Z"/><path fill="url(#f66)" d="M1231.7 231.9L1095 975L1061 968Z"/><path fill="url(#f67)" d="M1231.7 231.9L1063 969L1029 960Z"/><path fill="url(#f68)" d="M1231.7 231.9L1031 961L997 951Z"/><path fill="url(#f69)" d="M1231.7 231.9L999 951L966 940Z"/><path fill="url(#f70)" d="M1231.7 231.9L968 940L923 922Z"/><path fill="url(#f71)" d="M1231.7 231.9L925 923L870 896Z"/><path fill="url(#f72)" d="M1231.7 231.9L872 897L819 865Z"/><path fill="url(#f73)" d="M1231.7 231.9L821 867L781 839Z"/><path fill="url(#f74)" d="M1231.7 231.9L783 840L745 810Z"/><path fill="url(#f75)" d="M1231.7 231.9L747 812L710 779Z"/><path fill="url(#f76)" d="M1231.7 231.9L712 781L678 747Z"/><path fill="url(#f77)" d="M1231.7 231.9L680 748L656 722Z"/><path fill="url(#f78)" d="M1231.7 231.9L658 724L635 696Z"/><path fill="url(#f79)" d="M1231.7 231.9L637 698L616 670Z"/><path fill="url(#f80)" d="M1231.7 231.9L617 672L597 643Z"/><path fill="url(#f81)" d="M1231.7 231.9L598 645L580 615Z"/><path fill="url(#f82)" d="M1231.7 231.9L581 617L570 597Z"/><path fill="url(#f83)" d="M1231.7 231.9L571 599L561 580Z"/><path fill="url(#f84)" d="M1231.7 231.9L562 582L552 562Z"/><path fill="url(#f85)" d="M1231.7 231.9L553 564L543 544Z"/><path fill="url(#f86)" d="M1231.7 231.9L544 546L535 526Z"/><path fill="url(#f87)" d="M1231.7 231.9L536 528L528 508Z"/><path fill="url(#f88)" d="M1231.7 231.9L529 510L521 489Z"/><path fill="url(#f89)" d="M1231.7 231.9L522 492L514 471Z"/><path fill="url(#f90)" d="M1231.7 231.9L515 473L508 452Z"/><path fill="url(#f91)" d="M1231.7 231.9L509 454L503 433Z"/><path fill="url(#f92)" d="M1231.7 231.9L503 435L499 420Z"/><path fill="url(#f93)" d="M1231.7 231.9L500 422L498 414Z"/><path fill="url(#f94)" d="M1231.7 231.9L498 416L496 407Z"/><path fill="url(#f95)" d="M1231.7 231.9L497 409L495 401Z"/><path fill="url(#f96)" d="M1231.7 231.9L495 403L493 394Z"/><path fill="url(#f97)" d="M1231.7 231.9L494 397L492 388Z"/><path fill="url(#f98)" d="M1231.7 231.9L492 390L491 381Z"/><path fill="url(#f99)" d="M1231.7 231.9L491 384L489 375Z"/><path fill="url(#f100)" d="M1231.7 231.9L490 377L488 369Z"/><path fill="url(#f101)" d="M1231.7 231.9L489 371L487 362Z"/><path fill="url(#f102)" d="M1231.7 231.9L487 364L486 356Z"/><path fill="url(#f103)" d="M1231.7 231.9L486 358L485 349Z"/><path fill="url(#f104)" d="M1231.7 231.9L485 351L484 343Z"/><path fill="url(#f105)" d="M1231.7 231.9L484 345L483 336Z"/><path fill="url(#f106)" d="M1231.7 231.9L483 338L482 329Z"/><path fill="url(#f107)" d="M1231.7 231.9L482 332L481 323Z"/><path fill="url(#f108)" d="M1231.7 231.9L481 325L480 316Z"/><path fill="url(#f109)" d="M1231.7 231.9L481 319L480 310Z"/><path fill="url(#f110)" d="M1231.7 231.9L480 312L479 303Z"/><path fill="url(#f111)" d="M1231.7 231.9L479 305L478 297Z"/><path fill="url(#f112)" d="M1231.7 231.9L479 299L478 290Z"/><path fill="url(#f113)" d="M1231.7 231.9L478 292L477 283Z"/><path fill="url(#f114)" d="M1231.7 231.9L478 286L477 277Z"/><path fill="url(#f115)" d="M1231.7 231.9L477 279L477 270Z"/><path fill="url(#f116)" d="M1231.7 231.9L477 273L476 264Z"/><path fill="url(#f117)" d="M1231.7 231.9L476 266L476 257Z"/><path fill="url(#f118)" d="M1231.7 231.9L476 259L476 251Z"/><path fill="url(#f119)" d="M1231.7 231.9L476 253L476 244Z"/><path fill="url(#f120)" d="M1231.7 231.9L476 246L476 237Z"/><path fill="url(#f121)" d="M1231.7 231.9L476 240L476 231Z"/><path fill="url(#f122)" d="M1231.7 231.9L476 233L476 224Z"/><path fill="url(#f123)" d="M1231.7 231.9L476 226L476 218Z"/><path fill="url(#f124)" d="M1231.7 231.9L476 220L476 211Z"/><path fill="url(#f125)" d="M1231.7 231.9L476 213L476 204Z"/><path fill="url(#f126)" d="M1231.7 231.9L476 207L476 198Z"/><path fill="url(#f127)" d="M1231.7 231.9L476 200L477 191Z"/><path fill="url(#f128)" d="M1231.7 231.9L477 193L477 185Z"/><path fill="url(#f129)" d="M1231.7 231.9L477 187L478 178Z"/><path fill="url(#f130)" d="M1231.7 231.9L477 180L478 171Z"/><path fill="url(#f131)" d="M1231.7 231.9L478 174L479 165Z"/><path fill="url(#f132)" d="M1231.7 231.9L478 167L479 158Z"/><path fill="url(#f133)" d="M1231.7 231.9L479 161L480 152Z"/><path fill="url(#f134)" d="M1231.7 231.9L480 154L481 145Z"/><path fill="url(#f135)" d="M1231.7 231.9L480 147L481 139Z"/><path fill="url(#f136)" d="M1231.7 231.9L481 141L484 119Z"/><path fill="url(#f137)" d="M1231.7 231.9L484 121L487 99Z"/><path fill="url(#f138)" d="M1231.7 231.9L487 102L491 80Z"/><path fill="url(#f139)" d="M1231.7 231.9L491 82L495 61Z"/><path fill="url(#f140)" d="M1231.7 231.9L495 63L500 41Z"/><path fill="url(#f141)" d="M1231.7 231.9L499 44L505 22Z"/><path fill="url(#f142)" d="M1231.7 231.9L505 25L511 3Z"/><path fill="url(#f143)" d="M1231.7 231.9L510 6L517 -15Z"/><path fill="url(#f144)" d="M1231.7 231.9L517 -13L524 -34Z"/><path fill="url(#f145)" d="M1231.7 231.9L523 -32L531 -52Z"/><path fill="url(#f146)" d="M1231.7 231.9L530 -50L539 -71Z"/><path fill="url(#f147)" d="M1231.7 231.9L538 -69L547 -89Z"/><path fill="url(#f148)" d="M1231.7 231.9L546 -87L556 -106Z"/><path fill="url(#f149)" d="M1231.7 231.9L555 -104L565 -124Z"/><path fill="url(#f150)" d="M1231.7 231.9L564 -122L574 -141Z"/><path fill="url(#f151)" d="M1231.7 231.9L573 -139L584 -158Z"/><path fill="url(#f152)" d="M1231.7 231.9L583 -157L595 -175Z"/><path fill="url(#f153)" d="M1231.7 231.9L593 -173L613 -203Z"/><path fill="url(#f154)" d="M1231.7 231.9L612 -201L633 -229Z"/><path fill="url(#f155)" d="M1231.7 231.9L631 -227L653 -255Z"/><path fill="url(#f156)" d="M1231.7 231.9L652 -253L680 -285Z"/><path fill="url(#f157)" d="M1231.7 231.9L678 -283L712 -317Z"/><path fill="url(#f158)" d="M1231.7 231.9L710 -316L737 -339Z"/><path fill="url(#f159)" d="M1231.7 231.9L735 -338L752 -352Z"/><path fill="url(#f160)" d="M1231.7 231.9L750 -351L767 -365Z"/><path fill="url(#f161)" d="M1231.7 231.9L765 -363L783 -377Z"/><path fill="url(#f162)" d="M1231.7 231.9L781 -375L799 -388Z"/><path fill="url(#f163)" d="M1231.7 231.9L797 -387L815 -399Z"/><path fill="url(#f164)" d="M1231.7 231.9L813 -398L832 -410Z"/><path fill="url(#f165)" d="M1231.7 231.9L830 -409L849 -420Z"/><path fill="url(#f166)" d="M1231.7 231.9L847 -419L866 -430Z"/><path fill="url(#f167)" d="M1231.7 231.9L864 -429L884 -439Z"/><path fill="url(#f168)" d="M1231.7 231.9L882 -438L901 -448Z"/><path fill="url(#f169)" d="M1231.7 231.9L899 -447L919 -457Z"/><path fill="url(#f170)" d="M1231.7 231.9L917 -456L937 -464Z"/><path fill="url(#f171)" d="M1231.7 231.9L935 -464L956 -472Z"/><path fill="url(#f172)" d="M1231.7 231.9L954 -471L974 -479Z"/><path fill="url(#f173)" d="M1231.7 231.9L972 -478L993 -485Z"/><path fill="url(#f174)" d="M1231.7 231.9L991 -485L1012 -491Z"/><path fill="url(#f175)" d="M1231.7 231.9L1010 -491L1031 -497Z"/><path fill="url(#f176)" d="M1231.7 231.9L1029 -496L1050 -502Z"/><path fill="url(#f177)" d="M1231.7 231.9L1048 -501L1069 -506Z"/><path fill="url(#f178)" d="M1231.7 231.9L1067 -506L1089 -510Z"/><path fill="url(#f179)" d="M1231.7 231.9L1086 -510L1108 -514Z"/><path fill="url(#f180)" d="M1231.7 231.9L1106 -514L1128 -517Z"/><path fill="url(#f181)" d="M1231.7 231.9L1125 -517L1147 -519Z"/><path fill="url(#f182)" d="M1231.7 231.9L1145 -519L1167 -521Z"/><path fill="url(#f183)" d="M1231.7 231.9L1165 -521L1187 -523Z"/><path fill="url(#f184)" d="M1231.7 231.9L1184 -523L1206 -524Z"/><path fill="url(#f185)" d="M1231.7 231.9L1204 -524L1226 -524Z"/><path fill="url(#f186)" d="M1231.7 231.9L1224 -524L1246 -524Z"/><path fill="url(#f187)" d="M1231.7 231.9L1244 -524L1266 -523Z"/><path fill="url(#f188)" d="M1231.7 231.9L1264 -523L1286 -522Z"/><path fill="url(#f189)" d="M1231.7 231.9L1283 -522L1305 -521Z"/><path fill="url(#f190)" d="M1231.7 231.9L1303 -521L1325 -518Z"/><path fill="url(#f191)" d="M1231.7 231.9L1323 -519L1345 -516Z"/><path fill="url(#f192)" d="M1231.7 231.9L1342 -516L1364 -512Z"/><path fill="url(#f193)" d="M1231.7 231.9L1362 -513L1384 -509Z"/><path fill="url(#f194)" d="M1231.7 231.9L1381 -509L1403 -504Z"/><path fill="url(#f195)" d="M1231.7 231.9L1401 -505L1422 -500Z"/><path fill="url(#f196)" d="M1231.7 231.9L1420 -500L1441 -495Z"/><path fill="url(#f197)" d="M1231.7 231.9L1439 -495L1460 -489Z"/><path fill="url(#f198)" d="M1231.7 231.9L1458 -489L1479 -483Z"/><path fill="url(#f199)" d="M1231.7 231.9L1477 -483L1498 -476Z"/><path fill="url(#f200)" d="M1231.7 231.9L1495 -477L1522 -466Z"/><path fill="url(#f201)" d="M1231.7 231.9L1520 -467L1552 -453Z"/><path fill="url(#f202)" d="M1231.7 231.9L1550 -454L1582 -438Z"/><path fill="url(#f203)" d="M1231.7 231.9L1580 -439L1611 -422Z"/><path fill="url(#f204)" d="M1231.7 231.9L1609 -423L1639 -405Z"/><path fill="url(#f205)" d="M1231.7 231.9L1637 -406L1666 -387Z"/><path fill="url(#f206)" d="M1231.7 231.9L1664 -388L1703 -359Z"/><path fill="url(#f207)" d="M1231.7 231.9L1701 -360L1738 -329Z"/><path fill="url(#f208)" d="M1231.7 231.9L1737 -331L1772 -297Z"/><path fill="url(#f209)" d="M1231.7 231.9L1770 -299L1807 -258Z"/><path fill="url(#f210)" d="M1231.7 231.9L1806 -260L1844 -212Z"/><path fill="url(#f211)" d="M1231.7 231.9L1843 -213L1877 -162Z"/><path fill="url(#f212)" d="M1231.7 231.9L1876 -164L1900 -122Z"/><path fill="url(#f213)" d="M1231.7 231.9L1899 -124L1920 -81Z"/><path fill="url(#f214)" d="M1231.7 231.9L1919 -83L1938 -38Z"/><path fill="url(#f215)" d="M1231.7 231.9L1937 -40L1953 6Z"/><path fill="url(#f216)" d="M1231.7 231.9L1952 3L1962 37Z"/><path fill="url(#f217)" d="M1231.7 231.9L1962 35L1970 69Z"/><path fill="url(#f218)" d="M1231.7 231.9L1970 67L1976 102Z"/><path fill="url(#f219)" d="M1231.7 231.9L1976 99L1981 134Z"/><path fill="url(#f220)" d="M1231.7 231.9L1981 132L1985 167Z"/><path fill="url(#f221)" d="M1231.7 231.9L1985 165L1987 200Z"/><path fill="url(#f222)" d="M1231.7 231.9L1987 198L1988 233Z"/></g><path d="M1294.5 600.9 L1294.5 600.9 L1294.5 600.9 L1294.4 600.9 L1294.4 600.9 L1294.4 600.9 L1294.4 600.9 L1294.3 600.9 L1294.3 600.9 L1294.3 601.0 L1294.3 601.0 L1294.2 601.0 L1294.2 601.1 L1294.2 601.1 L1294.2 601.2 L1294.1 601.2 L1294.1 601.2 L1294.0 601.2 L1294.0 601.2 L1294.0 601.2 L1293.9 601.2 L1293.9 601.2 L1293.8 601.2 L1293.8 601.2 L1293.7 601.2 L1293.7 601.2 L1293.6 601.3 L1293.6 601.3 L1293.5 601.3 L1293.5 601.4 L1293.4 601.4 L1293.4 601.5 L1293.3 601.5 L1293.3 601.5 L1293.2 601.5 L1293.1 601.5 L1293.1 601.5 L1293.0 601.5 L1292.9 601.5 L1292.9 601.5 L1292.8 601.5 L1292.7 601.5 L1292.6 601.5 L1292.5 601.5 L1292.5 601.5 L1292.4 601.5 L1292.3 601.5 L1292.2 601.5 L1292.1 601.5 L1292.0 601.5 L1291.9 601.5 L1291.8 601.5 L1291.7 601.5 L1291.6 601.5 L1291.5 601.5 L1291.3 601.5 L1291.2 601.5 L1291.0 601.4 L1290.9 601.4 L1290.7 601.3 L1290.5 601.2 L1290.3 601.1 L1290.1 601.0 L1289.9 600.9 L1289.6 600.7 L1289.3 600.5 L1289.0 600.3 L1288.7 600.1 L1288.4 599.9 L1288.0 599.7 L1287.6 599.4 L1287.2 599.2 L1286.8 598.9 L1286.4 598.6 L1286.0 598.3 L1285.6 597.9 L1285.1 597.6 L1284.7 597.2 L1284.2 596.9 L1283.7 596.5 L1283.1 596.0 L1282.5 595.6 L1281.9 595.1 L1281.3 594.6 L1280.6 594.0 L1279.9 593.5 L1279.2 592.9 L1278.5 592.3 L1277.7 591.7 L1277.0 591.0 L1276.2 590.4 L1275.4 589.7 L1274.5 589.0 L1273.7 588.2 L1272.8 587.5 L1271.9 586.7 L1270.9 585.9 L1270.0 585.1 L1269.0 584.3 L1268.0 583.4 L1266.9 582.6 L1265.9 581.7 L1264.7 580.8 L1263.6 579.8 L1262.4 578.8 L1261.1 577.8 L1259.8 576.7 L1258.4 575.6 L1257.0 574.5 L1255.6 573.3 L1254.1 572.1 L1252.6 570.9 L1251.1 569.6 L1249.5 568.3 L1248.0 567.0 L1246.3 565.7 L1244.7 564.3 L1243.0 562.9 L1241.2 561.4 L1239.4 559.9 L1237.6 558.3 L1235.6 556.6 L1233.7 554.9 L1231.7 553.2 L1229.6 551.4 L1227.5 549.5 L1225.4 547.5 L1223.2 545.5 L1220.9 543.3 L1218.6 541.1 L1216.3 538.9 L1214.0 536.6 L1211.6 534.2 L1209.1 531.7 L1206.5 529.1 L1203.8 526.2 L1200.9 523.0 L1198.0 519.7 L1194.9 516.2 L1191.7 512.4 L1188.4 508.6 L1185.0 504.5 L1181.6 500.2 L1178.0 495.8 L1174.4 491.1 L1170.8 486.3 L1167.0 481.3 L1163.2 476.1 L1159.3 470.7 L1155.3 465.2 L1151.3 459.5 L1147.2 453.6 L1143.1 447.5 L1139.0 441.3 L1134.8 434.8 L1130.6 428.1 L1126.3 421.3 L1122.0 414.4 L1117.7 407.4 L1113.4 400.3 L1109.2 393.2 L1105.0 386.1 L1100.8 378.8 L1096.5 371.4 L1092.3 364.0 L1088.2 356.6 L1084.2 349.1 L1080.3 341.8 L1076.5 334.5 L1072.9 327.3 L1069.4 320.1 L1066.1 312.8 L1062.8 305.6 L1059.6 298.5 L1056.6 291.6 L1053.7 284.8 L1051.0 278.2 L1048.4 271.7 L1045.9 265.4 L1043.5 259.2 L1041.3 253.1 L1039.2 247.2 L1037.2 241.5 L1035.4 235.9 L1033.7 230.6 L1032.1 225.6 L1030.7 220.7 L1029.4 216.0 L1028.2 211.5 L1027.2 207.2 L1026.3 203.1 L1025.4 199.1 L1024.7 195.3 L1024.1 191.7 L1023.5 188.2 L1023.1 185.0 L1022.8 181.9 L1022.6 178.9 L1022.5 176.1 L1022.5 173.4 L1022.5 170.7 L1022.7 168.2 L1022.9 165.8 L1023.2 163.6 L1023.6 161.4 L1024.1 159.4 L1024.6 157.4 L1025.3 155.6 L1025.9 153.8 L1026.7 152.2 L1027.6 150.6 L1028.5 149.1 L1029.5 147.8 L1030.6 146.5 L1031.7 145.3 L1032.9 144.2 L1034.1 143.1 L1035.3 142.2 L1036.7 141.3 L1038.1 140.5 L1039.5 139.8 L1041.0 139.2 L1042.5 138.6 L1044.0 138.1 L1045.6 137.6 L1047.2 137.2 L1048.9 136.9 L1050.6 136.6 L1052.3 136.3 L1054.0 136.1 L1055.8 135.9 L1057.6 135.8 L1059.3 135.6 L1061.2 135.5 L1063.0 135.4 L1064.9 135.3 L1066.7 135.2 L1068.6 135.2 L1070.5 135.2 L1072.4 135.1 L1074.3 135.1 L1076.2 135.1 L1078.1 135.1 L1080.0 135.1 L1081.9 135.1 L1083.8 135.2 L1085.7 135.2 L1087.6 135.3 L1089.5 135.3 L1091.5 135.4 L1093.4 135.4 L1095.4 135.5 L1097.3 135.6 L1099.3 135.7 L1101.3 135.8 L1103.3 135.9 L1105.4 136.1 L1107.4 136.2 L1109.5 136.3 L1111.6 136.5 L1113.7 136.6 L1115.9 136.8 L1118.1 136.9 L1120.2 137.1 L1122.5 137.3 L1124.7 137.5 L1127.0 137.7 L1129.2 137.9 L1131.5 138.1 L1133.9 138.3 L1136.2 138.5 L1138.6 138.7 L1141.0 138.9 L1143.5 139.2 L1145.9 139.4 L1148.4 139.7 L1151.0 139.9 L1153.5 140.2 L1156.1 140.5 L1158.8 140.7 L1161.4 141.0 L1164.1 141.3 L1166.9 141.6 L1169.6 141.9 L1172.5 142.2 L1175.3 142.5 L1178.2 142.8 L1181.1 143.1 L1184.1 143.4 L1187.0 143.8 L1190.1 144.1 L1193.1 144.4 L1196.2 144.8 L1199.4 145.1 L1202.6 145.5 L1205.8 145.8 L1209.1 146.2 L1212.4 146.6 L1215.7 147.0 L1219.1 147.3 L1222.6 147.7 L1226.1 148.1 L1229.6 148.5 L1233.2 148.9 L1236.8 149.3 L1240.4 149.7 L1244.1 150.2 L1247.9 150.6 L1251.6 151.0 L1255.5 151.5 L1259.3 151.9 L1263.2 152.4 L1267.2 152.8 L1271.2 153.3 L1275.2 153.7 L1279.3 154.2 L1283.5 154.7 L1287.6 155.2 L1291.8 155.6 L1296.1 156.1 L1300.4 156.6 L1304.7 157.1 L1309.1 157.6 L1313.5 158.1 L1318.0 158.6 L1322.5 159.2 L1327.0 159.7 L1331.6 160.2 L1336.2 160.7 L1340.8 161.3 L1345.5 161.8 L1350.2 162.3 L1354.9 162.9 L1359.7 163.4 L1364.5 164.0 L1369.3 164.5 L1374.1 165.1 L1378.9 165.6 L1383.8 166.2 L1388.6 166.7 L1393.5 167.3 L1398.4 167.9 L1403.3 168.4 L1408.2 169.0 L1413.0 169.5 L1417.8 170.1 L1422.5 170.6 L1427.3 171.2 L1432.0 171.7 L1436.7 172.3 L1441.4 172.8 L1446.0 173.3 L1450.7 173.9 L1455.4 174.4 L1460.0 174.9 L1464.7 175.5 L1469.3 176.0 L1473.9 176.5 L1478.5 177.1 L1483.0 177.6 L1487.4 178.1 L1491.8 178.6 L1496.1 179.1 L1500.3 179.5 L1504.5 180.0 L1508.6 180.5 L1512.7 180.9 L1516.7 181.4 L1520.7 181.8 L1524.6 182.3 L1528.4 182.7 L1532.2 183.2 L1535.9 183.6 L1539.5 184.0 L1543.1 184.4 L1546.6 184.8 L1550.1 185.2 L1553.4 185.6 L1556.7 186.0 L1559.9 186.4 L1563.1 186.7 L1566.2 187.1 L1569.2 187.4 L1572.2 187.8 L1575.1 188.1 L1577.9 188.4 L1580.7 188.8 L1583.4 189.1 L1586.0 189.4 L1588.6 189.6 L1591.1 189.9 L1593.6 190.2 L1596.0 190.5 L1598.4 190.8 L1600.7 191.0 L1603.0 191.3 L1605.2 191.6 L1607.4 191.8 L1609.5 192.0 L1611.6 192.3 L1613.7 192.5 L1615.7 192.8 L1617.7 193.0 L1619.7 193.2 L1621.6 193.4 L1623.5 193.7 L1625.4 193.9 L1627.2 194.1 L1629.0 194.3 L1630.7 194.5 L1632.4 194.7 L1634.1 194.9 L1635.8 195.1 L1637.4 195.3 L1638.9 195.4 L1640.4 195.6 L1641.9 195.8 L1643.4 195.9 L1644.8 196.1 L1646.1 196.3 L1647.5 196.4 L1648.8 196.5 L1650.0 196.7 L1651.2 196.8 L1652.4 197.0 L1653.5 197.1 L1654.5 197.2 L1655.5 197.3 L1656.4 197.4 L1657.4 197.5 L1658.3 197.6 L1659.4 197.8 L1660.5 197.9 L1661.8 198.0 L1663.1 198.2 L1664.5 198.4 L1666.0 198.5 L1667.4 198.7 L1668.9 198.8 L1670.3 199.0 L1671.6 199.2 L1672.9 199.3 L1674.2 199.5 L1675.6 199.6 L1676.8 199.8 L1678.1 199.9 L1679.2 200.0 L1680.3 200.2 L1681.2 200.3 L1682.0 200.4 L1682.6 200.4 L1683.2 200.5 L1683.7 200.6 L1684.0 200.6 L1684.4 200.6 L1684.7 200.7 L1684.9 200.7 Z M1101.6 144.2 L1501.0 187.3 L1207.8 485.5 Z" fill-rule="evenodd" fill="#000" fill-opacity="0.4"/></g><path d="M1294.5 600.9 L1294.5 600.9 L1294.5 600.9 L1294.4 600.9 L1294.4 600.9 L1294.4 600.9 L1294.4 600.9 L1294.3 600.9 L1294.3 600.9 L1294.3 601.0 L1294.3 601.0 L1294.2 601.0 L1294.2 601.1 L1294.2 601.1 L1294.2 601.2 L1294.1 601.2 L1294.1 601.2 L1294.0 601.2 L1294.0 601.2 L1294.0 601.2 L1293.9 601.2 L1293.9 601.2 L1293.8 601.2 L1293.8 601.2 L1293.7 601.2 L1293.7 601.2 L1293.6 601.3 L1293.6 601.3 L1293.5 601.3 L1293.5 601.4 L1293.4 601.4 L1293.4 601.5 L1293.3 601.5 L1293.3 601.5 L1293.2 601.5 L1293.1 601.5 L1293.1 601.5 L1293.0 601.5 L1292.9 601.5 L1292.9 601.5 L1292.8 601.5 L1292.7 601.5 L1292.6 601.5 L1292.5 601.5 L1292.5 601.5 L1292.4 601.5 L1292.3 601.5 L1292.2 601.5 L1292.1 601.5 L1292.0 601.5 L1291.9 601.5 L1291.8 601.5 L1291.7 601.5 L1291.6 601.5 L1291.5 601.5 L1291.3 601.5 L1291.2 601.5 L1291.0 601.4 L1290.9 601.4 L1290.7 601.3 L1290.5 601.2 L1290.3 601.1 L1290.1 601.0 L1289.9 600.9 L1289.6 600.7 L1289.3 600.5 L1289.0 600.3 L1288.7 600.1 L1288.4 599.9 L1288.0 599.7 L1287.6 599.4 L1287.2 599.2 L1286.8 598.9 L1286.4 598.6 L1286.0 598.3 L1285.6 597.9 L1285.1 597.6 L1284.7 597.2 L1284.2 596.9 L1283.7 596.5 L1283.1 596.0 L1282.5 595.6 L1281.9 595.1 L1281.3 594.6 L1280.6 594.0 L1279.9 593.5 L1279.2 592.9 L1278.5 592.3 L1277.7 591.7 L1277.0 591.0 L1276.2 590.4 L1275.4 589.7 L1274.5 589.0 L1273.7 588.2 L1272.8 587.5 L1271.9 586.7 L1270.9 585.9 L1270.0 585.1 L1269.0 584.3 L1268.0 583.4 L1266.9 582.6 L1265.9 581.7 L1264.7 580.8 L1263.6 579.8 L1262.4 578.8 L1261.1 577.8 L1259.8 576.7 L1258.4 575.6 L1257.0 574.5 L1255.6 573.3 L1254.1 572.1 L1252.6 570.9 L1251.1 569.6 L1249.5 568.3 L1248.0 567.0 L1246.3 565.7 L1244.7 564.3 L1243.0 562.9 L1241.2 561.4 L1239.4 559.9 L1237.6 558.3 L1235.6 556.6 L1233.7 554.9 L1231.7 553.2 L1229.6 551.4 L1227.5 549.5 L1225.4 547.5 L1223.2 545.5 L1220.9 543.3 L1218.6 541.1 L1216.3 538.9 L1214.0 536.6 L1211.6 534.2 L1209.1 531.7 L1206.5 529.1 L1203.8 526.2 L1200.9 523.0 L1198.0 519.7 L1194.9 516.2 L1191.7 512.4 L1188.4 508.6 L1185.0 504.5 L1181.6 500.2 L1178.0 495.8 L1174.4 491.1 L1170.8 486.3 L1167.0 481.3 L1163.2 476.1 L1159.3 470.7 L1155.3 465.2 L1151.3 459.5 L1147.2 453.6 L1143.1 447.5 L1139.0 441.3 L1134.8 434.8 L1130.6 428.1 L1126.3 421.3 L1122.0 414.4 L1117.7 407.4 L1113.4 400.3 L1109.2 393.2 L1105.0 386.1 L1100.8 378.8 L1096.5 371.4 L1092.3 364.0 L1088.2 356.6 L1084.2 349.1 L1080.3 341.8 L1076.5 334.5 L1072.9 327.3 L1069.4 320.1 L1066.1 312.8 L1062.8 305.6 L1059.6 298.5 L1056.6 291.6 L1053.7 284.8 L1051.0 278.2 L1048.4 271.7 L1045.9 265.4 L1043.5 259.2 L1041.3 253.1 L1039.2 247.2 L1037.2 241.5 L1035.4 235.9 L1033.7 230.6 L1032.1 225.6 L1030.7 220.7 L1029.4 216.0 L1028.2 211.5 L1027.2 207.2 L1026.3 203.1 L1025.4 199.1 L1024.7 195.3 L1024.1 191.7 L1023.5 188.2 L1023.1 185.0 L1022.8 181.9 L1022.6 178.9 L1022.5 176.1 L1022.5 173.4 L1022.5 170.7 L1022.7 168.2 L1022.9 165.8 L1023.2 163.6 L1023.6 161.4 L1024.1 159.4 L1024.6 157.4 L1025.3 155.6 L1025.9 153.8 L1026.7 152.2 L1027.6 150.6 L1028.5 149.1 L1029.5 147.8 L1030.6 146.5 L1031.7 145.3 L1032.9 144.2 L1034.1 143.1 L1035.3 142.2 L1036.7 141.3 L1038.1 140.5 L1039.5 139.8 L1041.0 139.2 L1042.5 138.6 L1044.0 138.1 L1045.6 137.6 L1047.2 137.2 L1048.9 136.9 L1050.6 136.6 L1052.3 136.3 L1054.0 136.1 L1055.8 135.9 L1057.6 135.8 L1059.3 135.6 L1061.2 135.5 L1063.0 135.4 L1064.9 135.3 L1066.7 135.2 L1068.6 135.2 L1070.5 135.2 L1072.4 135.1 L1074.3 135.1 L1076.2 135.1 L1078.1 135.1 L1080.0 135.1 L1081.9 135.1 L1083.8 135.2 L1085.7 135.2 L1087.6 135.3 L1089.5 135.3 L1091.5 135.4 L1093.4 135.4 L1095.4 135.5 L1097.3 135.6 L1099.3 135.7 L1101.3 135.8 L1103.3 135.9 L1105.4 136.1 L1107.4 136.2 L1109.5 136.3 L1111.6 136.5 L1113.7 136.6 L1115.9 136.8 L1118.1 136.9 L1120.2 137.1 L1122.5 137.3 L1124.7 137.5 L1127.0 137.7 L1129.2 137.9 L1131.5 138.1 L1133.9 138.3 L1136.2 138.5 L1138.6 138.7 L1141.0 138.9 L1143.5 139.2 L1145.9 139.4 L1148.4 139.7 L1151.0 139.9 L1153.5 140.2 L1156.1 140.5 L1158.8 140.7 L1161.4 141.0 L1164.1 141.3 L1166.9 141.6 L1169.6 141.9 L1172.5 142.2 L1175.3 142.5 L1178.2 142.8 L1181.1 143.1 L1184.1 143.4 L1187.0 143.8 L1190.1 144.1 L1193.1 144.4 L1196.2 144.8 L1199.4 145.1 L1202.6 145.5 L1205.8 145.8 L1209.1 146.2 L1212.4 146.6 L1215.7 147.0 L1219.1 147.3 L1222.6 147.7 L1226.1 148.1 L1229.6 148.5 L1233.2 148.9 L1236.8 149.3 L1240.4 149.7 L1244.1 150.2 L1247.9 150.6 L1251.6 151.0 L1255.5 151.5 L1259.3 151.9 L1263.2 152.4 L1267.2 152.8 L1271.2 153.3 L1275.2 153.7 L1279.3 154.2 L1283.5 154.7 L1287.6 155.2 L1291.8 155.6 L1296.1 156.1 L1300.4 156.6 L1304.7 157.1 L1309.1 157.6 L1313.5 158.1 L1318.0 158.6 L1322.5 159.2 L1327.0 159.7 L1331.6 160.2 L1336.2 160.7 L1340.8 161.3 L1345.5 161.8 L1350.2 162.3 L1354.9 162.9 L1359.7 163.4 L1364.5 164.0 L1369.3 164.5 L1374.1 165.1 L1378.9 165.6 L1383.8 166.2 L1388.6 166.7 L1393.5 167.3 L1398.4 167.9 L1403.3 168.4 L1408.2 169.0 L1413.0 169.5 L1417.8 170.1 L1422.5 170.6 L1427.3 171.2 L1432.0 171.7 L1436.7 172.3 L1441.4 172.8 L1446.0 173.3 L1450.7 173.9 L1455.4 174.4 L1460.0 174.9 L1464.7 175.5 L1469.3 176.0 L1473.9 176.5 L1478.5 177.1 L1483.0 177.6 L1487.4 178.1 L1491.8 178.6 L1496.1 179.1 L1500.3 179.5 L1504.5 180.0 L1508.6 180.5 L1512.7 180.9 L1516.7 181.4 L1520.7 181.8 L1524.6 182.3 L1528.4 182.7 L1532.2 183.2 L1535.9 183.6 L1539.5 184.0 L1543.1 184.4 L1546.6 184.8 L1550.1 185.2 L1553.4 185.6 L1556.7 186.0 L1559.9 186.4 L1563.1 186.7 L1566.2 187.1 L1569.2 187.4 L1572.2 187.8 L1575.1 188.1 L1577.9 188.4 L1580.7 188.8 L1583.4 189.1 L1586.0 189.4 L1588.6 189.6 L1591.1 189.9 L1593.6 190.2 L1596.0 190.5 L1598.4 190.8 L1600.7 191.0 L1603.0 191.3 L1605.2 191.6 L1607.4 191.8 L1609.5 192.0 L1611.6 192.3 L1613.7 192.5 L1615.7 192.8 L1617.7 193.0 L1619.7 193.2 L1621.6 193.4 L1623.5 193.7 L1625.4 193.9 L1627.2 194.1 L1629.0 194.3 L1630.7 194.5 L1632.4 194.7 L1634.1 194.9 L1635.8 195.1 L1637.4 195.3 L1638.9 195.4 L1640.4 195.6 L1641.9 195.8 L1643.4 195.9 L1644.8 196.1 L1646.1 196.3 L1647.5 196.4 L1648.8 196.5 L1650.0 196.7 L1651.2 196.8 L1652.4 197.0 L1653.5 197.1 L1654.5 197.2 L1655.5 197.3 L1656.4 197.4 L1657.4 197.5 L1658.3 197.6 L1659.4 197.8 L1660.5 197.9 L1661.8 198.0 L1663.1 198.2 L1664.5 198.4 L1666.0 198.5 L1667.4 198.7 L1668.9 198.8 L1670.3 199.0 L1671.6 199.2 L1672.9 199.3 L1674.2 199.5 L1675.6 199.6 L1676.8 199.8 L1678.1 199.9 L1679.2 200.0 L1680.3 200.2 L1681.2 200.3 L1682.0 200.4 L1682.6 200.4 L1683.2 200.5 L1683.7 200.6 L1684.0 200.6 L1684.4 200.6 L1684.7 200.7 L1684.9 200.7 Z" fill="none" stroke="#161616" stroke-width="1.6" stroke-opacity="0.75"/></g><rect x="1020.5" y="123.5" width="640" height="492" fill="none" stroke="#9a9a9a" stroke-width="1.3"/><rect x="1020.4" y="615" width="1.3" height="6" fill="#bdbdbd"/><rect x="1015" y="613.9" width="6" height="1.3" fill="#bdbdbd"/><rect x="1073.7" y="615" width="1.3" height="6" fill="#bdbdbd"/><rect x="1015" y="573.0" width="6" height="1.3" fill="#bdbdbd"/><rect x="1126.9" y="615" width="1.3" height="6" fill="#bdbdbd"/><rect x="1015" y="532.2" width="6" height="1.3" fill="#bdbdbd"/><rect x="1180.2" y="615" width="1.3" height="6" fill="#bdbdbd"/><rect x="1015" y="491.3" width="6" height="1.3" fill="#bdbdbd"/><rect x="1233.4" y="615" width="1.3" height="6" fill="#bdbdbd"/><rect x="1015" y="450.5" width="6" height="1.3" fill="#bdbdbd"/><rect x="1286.7" y="615" width="1.3" height="6" fill="#bdbdbd"/><rect x="1015" y="409.6" width="6" height="1.3" fill="#bdbdbd"/><rect x="1339.9" y="615" width="1.3" height="6" fill="#bdbdbd"/><rect x="1015" y="368.8" width="6" height="1.3" fill="#bdbdbd"/><rect x="1393.2" y="615" width="1.3" height="6" fill="#bdbdbd"/><rect x="1015" y="327.9" width="6" height="1.3" fill="#bdbdbd"/><rect x="1446.4" y="615" width="1.3" height="6" fill="#bdbdbd"/><rect x="1015" y="287.1" width="6" height="1.3" fill="#bdbdbd"/><rect x="1499.7" y="615" width="1.3" height="6" fill="#bdbdbd"/><rect x="1015" y="246.2" width="6" height="1.3" fill="#bdbdbd"/><rect x="1552.9" y="615" width="1.3" height="6" fill="#bdbdbd"/><rect x="1015" y="205.4" width="6" height="1.3" fill="#bdbdbd"/><rect x="1606.2" y="615" width="1.3" height="6" fill="#bdbdbd"/><rect x="1015" y="164.5" width="6" height="1.3" fill="#bdbdbd"/><rect x="1405" y="583" width="252" height="27" fill="#333333"/><rect x="1225.2" y="224.2" width="13" height="13" fill="none" stroke="#000" stroke-width="2"/><rect x="1494.5" y="179.6" width="13" height="13" fill="none" stroke="#eeeeee" stroke-width="2"/><rect x="1095.1" y="136.5" width="13" height="13" fill="none" stroke="#eeeeee" stroke-width="2"/><rect x="1201.3" y="477.8" width="13" height="13" fill="none" stroke="#eeeeee" stroke-width="2"/><rect x="1127.4" y="240.3" width="13" height="13" fill="none" stroke="#eeeeee" stroke-width="2"/><rect x="1360.8" y="315.6" width="13" height="13" fill="none" stroke="#eeeeee" stroke-width="2"/><rect x="1232.1" y="151.3" width="13" height="13" fill="none" stroke="#eeeeee" stroke-width="2"/><circle cx="1230.2" cy="234.8" r="4.5" fill="#ffffff" stroke="#111" stroke-width="1.2"/><circle cx="1507.3" cy="184.3" r="4.5" fill="#cc0000" stroke="#111" stroke-width="1.2"/><circle cx="1153.2" cy="153.6" r="4.5" fill="#1a991a" stroke="#111" stroke-width="1.2"/><circle cx="1204.8" cy="487.8" r="4.5" fill="#0000cc" stroke="#111" stroke-width="1.2"/><circle cx="1167.5" cy="246.4" r="4.5" fill="#1aabab" stroke="#111" stroke-width="1.2"/><circle cx="1340.9" cy="351.4" r="4.5" fill="#a000a0" stroke="#111" stroke-width="1.2"/><circle cx="1237.8" cy="161.5" r="4.5" fill="#b8b800" stroke="#111" stroke-width="1.2"/></svg>
<div class="t" style="left:821.0px;width:400px;text-align:center;top:625.15px;font-size:14px;color:#d4d4d4;font-weight:400;">0</div>
<div class="t" style="left:614px;width:400px;text-align:right;top:607.65px;font-size:14px;color:#d4d4d4;font-weight:400;">0</div>
<div class="t" style="left:874.25px;width:400px;text-align:center;top:625.15px;font-size:14px;color:#d4d4d4;font-weight:400;">0,05</div>
<div class="t" style="left:614px;width:400px;text-align:right;top:566.8px;font-size:14px;color:#d4d4d4;font-weight:400;">0,05</div>
<div class="t" style="left:927.5px;width:400px;text-align:center;top:625.15px;font-size:14px;color:#d4d4d4;font-weight:400;">0,1</div>
<div class="t" style="left:614px;width:400px;text-align:right;top:525.95px;font-size:14px;color:#d4d4d4;font-weight:400;">0,1</div>
<div class="t" style="left:980.75px;width:400px;text-align:center;top:625.15px;font-size:14px;color:#d4d4d4;font-weight:400;">0,15</div>
<div class="t" style="left:614px;width:400px;text-align:right;top:485.1px;font-size:14px;color:#d4d4d4;font-weight:400;">0,15</div>
<div class="t" style="left:1034.0px;width:400px;text-align:center;top:625.15px;font-size:14px;color:#d4d4d4;font-weight:400;">0,2</div>
<div class="t" style="left:614px;width:400px;text-align:right;top:444.25px;font-size:14px;color:#d4d4d4;font-weight:400;">0,2</div>
<div class="t" style="left:1087.25px;width:400px;text-align:center;top:625.15px;font-size:14px;color:#d4d4d4;font-weight:400;">0,25</div>
<div class="t" style="left:614px;width:400px;text-align:right;top:403.4px;font-size:14px;color:#d4d4d4;font-weight:400;">0,25</div>
<div class="t" style="left:1140.5px;width:400px;text-align:center;top:625.15px;font-size:14px;color:#d4d4d4;font-weight:400;">0,3</div>
<div class="t" style="left:614px;width:400px;text-align:right;top:362.55px;font-size:14px;color:#d4d4d4;font-weight:400;">0,3</div>
<div class="t" style="left:1193.75px;width:400px;text-align:center;top:625.15px;font-size:14px;color:#d4d4d4;font-weight:400;">0,35</div>
<div class="t" style="left:614px;width:400px;text-align:right;top:321.7px;font-size:14px;color:#d4d4d4;font-weight:400;">0,35</div>
<div class="t" style="left:1247.0px;width:400px;text-align:center;top:625.15px;font-size:14px;color:#d4d4d4;font-weight:400;">0,4</div>
<div class="t" style="left:614px;width:400px;text-align:right;top:280.85px;font-size:14px;color:#d4d4d4;font-weight:400;">0,4</div>
<div class="t" style="left:1300.25px;width:400px;text-align:center;top:625.15px;font-size:14px;color:#d4d4d4;font-weight:400;">0,45</div>
<div class="t" style="left:614px;width:400px;text-align:right;top:240.0px;font-size:14px;color:#d4d4d4;font-weight:400;">0,45</div>
<div class="t" style="left:1353.5px;width:400px;text-align:center;top:625.15px;font-size:14px;color:#d4d4d4;font-weight:400;">0,5</div>
<div class="t" style="left:614px;width:400px;text-align:right;top:199.15px;font-size:14px;color:#d4d4d4;font-weight:400;">0,5</div>
<div class="t" style="left:1406.75px;width:400px;text-align:center;top:625.15px;font-size:14px;color:#d4d4d4;font-weight:400;">0,55</div>
<div class="t" style="left:614px;width:400px;text-align:right;top:158.3px;font-size:14px;color:#d4d4d4;font-weight:400;">0,55</div>
<div class="t" style="left:1406px;top:588.41px;font-size:19.6px;color:#f2f2f2;font-weight:400;">Gamut Coverage:&nbsp; 75,5%</div>
<div class="t" style="left:17px;top:692.03px;font-size:29.5px;color:#f2f2f2;font-weight:400;">Current Reading</div>
<div class="t" style="left:17px;top:765.76px;font-size:24.5px;color:#f2f2f2;font-weight:400;">x: 0,3067</div>
<div class="t" style="left:174px;top:765.76px;font-size:24.5px;color:#f2f2f2;font-weight:400;">y: 0,3219</div>
<div class="t" style="left:17px;top:806.76px;font-size:24.5px;color:#f2f2f2;font-weight:400;">fL: 171,4</div>
<div class="t" style="left:17px;top:846.34px;font-size:25px;color:#f2f2f2;font-weight:400;">cd/m<span style="font-size:17px;position:relative;top:-9px">2</span>: 587,25</div>
<svg width="1671" height="1009" style="left:0;top:0"><rect x="360" y="689.5" width="249.5" height="181" fill="#242424"/><rect x="354" y="707.5" width="256" height="1.5" fill="#8a8a8a"/><rect x="354" y="743.6" width="256" height="1.5" fill="#8a8a8a"/><rect x="354" y="779.8" width="256" height="1.5" fill="#8a8a8a"/><rect x="354" y="815.8" width="256" height="1.5" fill="#8a8a8a"/><rect x="354" y="851.9" width="256" height="1.5" fill="#8a8a8a"/><rect x="359.3" y="689" width="1.5" height="182" fill="#8a8a8a"/><rect x="608.7" y="689" width="1.5" height="182" fill="#8a8a8a"/><rect x="359.3" y="689" width="251" height="1.5" fill="#8a8a8a"/><rect x="359.3" y="869.5" width="251" height="1.5" fill="#8a8a8a"/><rect x="359.3" y="870" width="1.5" height="6" fill="#bdbdbd"/><rect x="608.7" y="870" width="1.5" height="6" fill="#bdbdbd"/><linearGradient id="rb0" x1="0" x2="0" y1="0" y2="1"><stop offset="0" stop-color="#ff5858"/><stop offset="1" stop-color="#ff3c3c"/></linearGradient><rect x="383.8" y="792.6" width="65.69999999999999" height="77.39999999999998" fill="#000"/><rect x="385.3" y="794.6" width="62.69999999999999" height="75.39999999999998" fill="url(#rb0)"/><linearGradient id="rb1" x1="0" x2="0" y1="0" y2="1"><stop offset="0" stop-color="#58a858"/><stop offset="1" stop-color="#40a040"/></linearGradient><rect x="449.5" y="780.6" width="66.5" height="89.39999999999998" fill="#000"/><rect x="451.0" y="782.6" width="63.5" height="87.39999999999998" fill="url(#rb1)"/><linearGradient id="rb2" x1="0" x2="0" y1="0" y2="1"><stop offset="0" stop-color="#5858ff"/><stop offset="1" stop-color="#3434ff"/></linearGradient><rect x="516" y="735.7" width="66.60000000000002" height="134.29999999999995" fill="#000"/><rect x="517.5" y="737.7" width="63.60000000000002" height="132.29999999999995" fill="url(#rb2)"/></svg>
<div class="t" style="left:269px;width:400px;text-align:center;top:673.32px;font-size:13.8px;color:#cfcfcf;font-weight:400;">RGB Balance</div>
<div class="t" style="left:-47px;width:400px;text-align:right;top:701.87px;font-size:13.5px;color:#d4d4d4;font-weight:400;">104</div>
<div class="t" style="left:-47px;width:400px;text-align:right;top:737.97px;font-size:13.5px;color:#d4d4d4;font-weight:400;">102</div>
<div class="t" style="left:-47px;width:400px;text-align:right;top:774.07px;font-size:13.5px;color:#d4d4d4;font-weight:400;">100</div>
<div class="t" style="left:-47px;width:400px;text-align:right;top:810.17px;font-size:13.5px;color:#d4d4d4;font-weight:400;">98</div>
<div class="t" style="left:-47px;width:400px;text-align:right;top:846.27px;font-size:13.5px;color:#d4d4d4;font-weight:400;">96</div>
<div class="t" style="left:284px;width:400px;text-align:center;top:875.15px;font-size:14px;color:#d4d4d4;font-weight:400;">100W</div>
<div class="t" style="left:609.7px;width:400px;text-align:center;top:664.32px;font-size:13.8px;color:#cfcfcf;font-weight:400;">CIE 1931 xy</div>
<div class="r" style="left:639px;top:681px;width:342px;height:199px;overflow:hidden;border:1.5px solid #b0b0b0"><div style="position:absolute;left:-1.5px;top:-1.5px;width:342px;height:199px;filter:blur(4px)"><div style="position:absolute;left:-10px;top:-10.50px;width:361px;height:9.42px;background:linear-gradient(90deg,#96ffc9 0.0%,#96ffc8 6.2%,#96ffc7 12.5%,#96ffc6 18.8%,#9bffc4 25.0%,#a5ffc3 31.2%,#aeffc2 37.5%,#b8ffc0 43.8%,#c3ffbf 50.0%,#ceffbd 56.2%,#daffbb 62.5%,#e7ffb9 68.8%,#f4ffb7 75.0%,#fffcb5 81.2%,#fff0af 87.5%,#ffe6ab 93.8%,#ffdda7 100.0%)"></div><div style="position:absolute;left:-10px;top:-2.08px;width:361px;height:9.42px;background:linear-gradient(90deg,#96ffcc 0.0%,#96ffcb 6.2%,#96ffca 12.5%,#96ffc9 18.8%,#9dffc8 25.0%,#a7ffc6 31.2%,#b1ffc5 37.5%,#bbffc4 43.8%,#c6ffc2 50.0%,#d2ffc0 56.2%,#deffbf 62.5%,#ebffbd 68.8%,#f9ffbb 75.0%,#fff7b6 81.2%,#ffebb1 87.5%,#ffe2ac 93.8%,#ffdaa8 100.0%)"></div><div style="position:absolute;left:-10px;top:6.35px;width:361px;height:9.42px;background:linear-gradient(90deg,#96ffd0 0.0%,#96ffcf 6.2%,#96ffce 12.5%,#96ffcc 18.8%,#9fffcb 25.0%,#a9ffca 31.2%,#b3ffc9 37.5%,#beffc7 43.8%,#caffc6 50.0%,#d6ffc4 56.2%,#e3ffc2 62.5%,#f0ffc1 68.8%,#feffbf 75.0%,#fff2b8 81.2%,#ffe7b2 87.5%,#ffdeae 93.8%,#ffd6aa 100.0%)"></div><div style="position:absolute;left:-10px;top:14.77px;width:361px;height:9.42px;background:linear-gradient(90deg,#96ffd3 0.0%,#96ffd2 6.2%,#96ffd1 12.5%,#97ffd0 18.8%,#a1ffcf 25.0%,#abffce 31.2%,#b6ffcc 37.5%,#c1ffcb 43.8%,#cdffca 50.0%,#daffc8 56.2%,#e7ffc6 62.5%,#f5ffc5 68.8%,#fffac1 75.0%,#ffedba 81.2%,#ffe3b4 87.5%,#ffdaaf 93.8%,#ffd3ab 100.0%)"></div><div style="position:absolute;left:-10px;top:23.19px;width:361px;height:9.42px;background:linear-gradient(90deg,#96ffd7 0.0%,#96ffd6 6.2%,#96ffd5 12.5%,#99ffd4 18.8%,#a3ffd3 25.0%,#aeffd1 31.2%,#b9ffd0 37.5%,#c5ffcf 43.8%,#d1ffce 50.0%,#deffcc 56.2%,#ecffcb 62.5%,#fbffc9 68.8%,#fff4c2 75.0%,#ffe8bb 81.2%,#ffdfb6 87.5%,#ffd7b1 93.8%,#ffd0ad 100.0%)"></div><div style="position:absolute;left:-10px;top:31.62px;width:361px;height:9.42px;background:linear-gradient(90deg,#96ffda 0.0%,#96ffda 6.2%,#96ffd9 12.5%,#9bffd8 18.8%,#a5ffd7 25.0%,#b0ffd6 31.2%,#bcffd5 37.5%,#c8ffd3 43.8%,#d5ffd2 50.0%,#e3ffd1 56.2%,#f2ffcf 62.5%,#fffdcd 68.8%,#ffefc4 75.0%,#ffe4bd 81.2%,#ffdbb7 87.5%,#ffd3b2 93.8%,#ffccae 100.0%)"></div><div style="position:absolute;left:-10px;top:40.04px;width:361px;height:9.42px;background:linear-gradient(90deg,#96ffdf 0.0%,#96ffde 6.2%,#96ffdd 12.5%,#9dffdc 18.8%,#a8ffdb 25.0%,#b3ffda 31.2%,#bfffd9 37.5%,#ccffd8 43.8%,#d9ffd7 50.0%,#e8ffd6 56.2%,#f7ffd4 62.5%,#fff7ce 68.8%,#ffeac5 75.0%,#ffe0be 81.2%,#ffd7b9 87.5%,#ffcfb4 93.8%,#ffc9af 100.0%)"></div><div style="position:absolute;left:-10px;top:48.46px;width:361px;height:9.42px;background:linear-gradient(90deg,#96ffe3 0.0%,#96ffe2 6.2%,#96ffe1 12.5%,#9fffe1 18.8%,#aaffe0 25.0%,#b6ffdf 31.2%,#c3ffde 37.5%,#d0ffdd 43.8%,#deffdc 50.0%,#edffdb 56.2%,#fdffd9 62.5%,#fff1d0 68.8%,#ffe5c7 75.0%,#ffdbc0 81.2%,#ffd3ba 87.5%,#ffccb5 93.8%,#ffc6b1 100.0%)"></div><div style="position:absolute;left:-10px;top:56.88px;width:361px;height:9.42px;background:linear-gradient(90deg,#96ffe7 0.0%,#96ffe7 6.2%,#96ffe6 12.5%,#a1ffe5 18.8%,#adffe5 25.0%,#b9ffe4 31.2%,#c6ffe3 37.5%,#d4ffe2 43.8%,#e3ffe1 50.0%,#f3ffe0 56.2%,#fffadc 62.5%,#ffecd1 68.8%,#ffe0c8 75.0%,#ffd7c1 81.2%,#ffcfbb 87.5%,#ffc9b6 93.8%,#ffc3b2 100.0%)"></div><div style="position:absolute;left:-10px;top:65.31px;width:361px;height:9.42px;background:linear-gradient(90deg,#96ffec 0.0%,#96ffec 6.2%,#98ffeb 12.5%,#a4ffeb 18.8%,#b0ffea 25.0%,#bdffe9 31.2%,#caffe9 37.5%,#d9ffe8 43.8%,#e9ffe7 50.0%,#f9ffe6 56.2%,#fff4dd 62.5%,#ffe7d2 68.8%,#ffdcca 75.0%,#ffd3c3 81.2%,#ffccbd 87.5%,#ffc6b8 93.8%,#ffc0b3 100.0%)"></div><div style="position:absolute;left:-10px;top:73.73px;width:361px;height:9.42px;background:linear-gradient(90deg,#96fff1 0.0%,#96fff1 6.2%,#9afff0 12.5%,#a6fff0 18.8%,#b3fff0 25.0%,#c0ffef 31.2%,#cfffef 37.5%,#deffee 43.8%,#efffee 50.0%,#fffeec 56.2%,#ffeede 62.5%,#ffe2d4 68.8%,#ffd8cb 75.0%,#ffcfc4 81.2%,#ffc8be 87.5%,#ffc3b9 93.8%,#ffbeb5 100.0%)"></div><div style="position:absolute;left:-10px;top:82.15px;width:361px;height:9.42px;background:linear-gradient(90deg,#96fff7 0.0%,#96fff7 6.2%,#9dfff6 12.5%,#a9fff6 18.8%,#b6fff6 25.0%,#c4fff5 31.2%,#d3fff5 37.5%,#e4fff5 43.8%,#f5fff5 50.0%,#fff7ed 56.2%,#ffe8df 62.5%,#ffddd5 68.8%,#ffd3cc 75.0%,#ffccc5 81.2%,#ffc5bf 87.5%,#ffc0ba 93.8%,#ffbbb6 100.0%)"></div><div style="position:absolute;left:-10px;top:90.58px;width:361px;height:9.42px;background:linear-gradient(90deg,#96fffd 0.0%,#96fffd 6.2%,#9ffffc 12.5%,#acfffc 18.8%,#bafffc 25.0%,#c9fffc 31.2%,#d9fffc 37.5%,#eafffc 43.8%,#fcfffc 50.0%,#fff0ee 56.2%,#ffe3e1 62.5%,#ffd8d6 68.8%,#ffcfcd 75.0%,#ffc8c6 81.2%,#ffc2c0 87.5%,#ffbdbb 93.8%,#ffb8b7 100.0%)"></div><div style="position:absolute;left:-10px;top:99.00px;width:361px;height:9.42px;background:linear-gradient(90deg,#96fbff 0.0%,#96fbff 6.2%,#a1fbff 12.5%,#aefbff 18.8%,#bcfbff 25.0%,#cbfaff 31.2%,#dbfaff 37.5%,#ecfaff 43.8%,#fefaff 50.0%,#ffeaef 56.2%,#ffdee2 62.5%,#ffd3d7 68.8%,#ffcbcf 75.0%,#ffc4c8 81.2%,#ffbfc2 87.5%,#ffbabc 93.8%,#ffb5b8 100.0%)"></div><div style="position:absolute;left:-10px;top:107.42px;width:361px;height:9.42px;background:linear-gradient(90deg,#96f5ff 0.0%,#97f5ff 6.2%,#a3f5ff 12.5%,#b0f4ff 18.8%,#bdf4ff 25.0%,#ccf4ff 31.2%,#dbf3ff 37.5%,#ecf3ff 43.8%,#fef2ff 50.0%,#ffe4f0 56.2%,#ffd8e3 62.5%,#ffcfd8 68.8%,#ffc7d0 75.0%,#ffc1c9 81.2%,#ffbcc3 87.5%,#ffb7be 93.8%,#ffb3b9 100.0%)"></div><div style="position:absolute;left:-10px;top:115.85px;width:361px;height:9.42px;background:linear-gradient(90deg,#96f0ff 0.0%,#99efff 6.2%,#a5efff 12.5%,#b1eeff 18.8%,#bfeeff 25.0%,#cdedff 31.2%,#dcecff 37.5%,#ececff 43.8%,#fdebff 50.0%,#ffdef0 56.2%,#ffd4e4 62.5%,#ffcbd9 68.8%,#ffc4d1 75.0%,#ffbeca 81.2%,#ffb9c4 87.5%,#ffb4bf 93.8%,#ffb0ba 100.0%)"></div><div style="position:absolute;left:-10px;top:124.27px;width:361px;height:9.42px;background:linear-gradient(90deg,#96eaff 0.0%,#9beaff 6.2%,#a7e9ff 12.5%,#b3e8ff 18.8%,#c0e8ff 25.0%,#cee7ff 31.2%,#dce6ff 37.5%,#ece5ff 43.8%,#fde4ff 50.0%,#ffd9f1 56.2%,#ffcfe5 62.5%,#ffc7da 68.8%,#ffc0d2 75.0%,#ffbacb 81.2%,#ffb6c5 87.5%,#ffb2c0 93.8%,#ffaebb 100.0%)"></div><div style="position:absolute;left:-10px;top:132.69px;width:361px;height:9.42px;background:linear-gradient(90deg,#96e5ff 0.0%,#9de4ff 6.2%,#a8e4ff 12.5%,#b4e3ff 18.8%,#c1e2ff 25.0%,#cee1ff 31.2%,#dde0ff 37.5%,#ecdfff 43.8%,#fcdeff 50.0%,#ffd4f2 56.2%,#ffcae5 62.5%,#ffc3db 68.8%,#ffbdd3 75.0%,#ffb7cc 81.2%,#ffb3c6 87.5%,#ffafc1 93.8%,#ffacbc 100.0%)"></div><div style="position:absolute;left:-10px;top:141.12px;width:361px;height:9.42px;background:linear-gradient(90deg,#96e0ff 0.0%,#9fdfff 6.2%,#aadfff 12.5%,#b5deff 18.8%,#c2ddff 25.0%,#cfdbff 31.2%,#dddaff 37.5%,#ecd9ff 43.8%,#fcd8ff 50.0%,#ffcff3 56.2%,#ffc6e6 62.5%,#ffbfdc 68.8%,#ffb9d4 75.0%,#ffb4cd 81.2%,#ffb0c7 87.5%,#ffacc2 93.8%,#ffa9bd 100.0%)"></div><div style="position:absolute;left:-10px;top:149.54px;width:361px;height:9.42px;background:linear-gradient(90deg,#96dcff 0.0%,#a0dbff 6.2%,#abdaff 12.5%,#b7d9ff 18.8%,#c3d7ff 25.0%,#d0d6ff 31.2%,#ded5ff 37.5%,#ecd4ff 43.8%,#fcd2ff 50.0%,#ffcaf3 56.2%,#ffc2e7 62.5%,#ffbbdd 68.8%,#ffb6d5 75.0%,#ffb1ce 81.2%,#ffadc8 87.5%,#ffaac3 93.8%,#ffa7be 100.0%)"></div><div style="position:absolute;left:-10px;top:157.96px;width:361px;height:9.42px;background:linear-gradient(90deg,#98d7ff 0.0%,#a2d6ff 6.2%,#add5ff 12.5%,#b8d4ff 18.8%,#c4d2ff 25.0%,#d1d1ff 31.2%,#ded0ff 37.5%,#ecceff 43.8%,#fbcdff 50.0%,#ffc5f4 56.2%,#ffbee8 62.5%,#ffb8de 68.8%,#ffb3d6 75.0%,#ffaecf 81.2%,#ffabc9 87.5%,#ffa8c4 93.8%,#ffa5bf 100.0%)"></div><div style="position:absolute;left:-10px;top:166.38px;width:361px;height:9.42px;background:linear-gradient(90deg,#99d3ff 0.0%,#a3d2ff 6.2%,#aed0ff 12.5%,#b9cfff 18.8%,#c5ceff 25.0%,#d1ccff 31.2%,#decbff 37.5%,#ecc9ff 43.8%,#fbc7ff 50.0%,#ffc1f5 56.2%,#ffbae9 62.5%,#ffb4df 68.8%,#ffb0d7 75.0%,#ffacd0 81.2%,#ffa8ca 87.5%,#ffa5c5 93.8%,#ffa3c0 100.0%)"></div><div style="position:absolute;left:-10px;top:174.81px;width:361px;height:9.42px;background:linear-gradient(90deg,#9bcfff 0.0%,#a5cdff 6.2%,#afccff 12.5%,#bacbff 18.8%,#c6c9ff 25.0%,#d2c8ff 31.2%,#dfc6ff 37.5%,#ecc4ff 43.8%,#fbc3ff 50.0%,#ffbdf5 56.2%,#ffb6ea 62.5%,#ffb1e0 68.8%,#ffadd8 75.0%,#ffa9d1 81.2%,#ffa6cb 87.5%,#ffa3c6 93.8%,#ffa0c1 100.0%)"></div><div style="position:absolute;left:-10px;top:183.23px;width:361px;height:9.42px;background:linear-gradient(90deg,#9dcaff 0.0%,#a6c9ff 6.2%,#b1c8ff 12.5%,#bbc6ff 18.8%,#c6c5ff 25.0%,#d2c3ff 31.2%,#dfc2ff 37.5%,#ecc0ff 43.8%,#fabeff 50.0%,#ffb9f6 56.2%,#ffb3ea 62.5%,#ffaee1 68.8%,#ffaad9 75.0%,#ffa6d2 81.2%,#ffa3cc 87.5%,#ffa1c7 93.8%,#ff9ec2 100.0%)"></div><div style="position:absolute;left:-10px;top:191.65px;width:361px;height:9.42px;background:linear-gradient(90deg,#9ec7ff 0.0%,#a8c5ff 6.2%,#b2c4ff 12.5%,#bcc2ff 18.8%,#c7c1ff 25.0%,#d3bfff 31.2%,#dfbdff 37.5%,#ecbbff 43.8%,#fab9ff 50.0%,#ffb5f6 56.2%,#ffafeb 62.5%,#ffabe1 68.8%,#ffa7d9 75.0%,#ffa4d3 81.2%,#ffa1cd 87.5%,#ff9ec7 93.8%,#ff9cc3 100.0%)"></div><div style="position:absolute;left:-10px;top:200.08px;width:361px;height:9.42px;background:linear-gradient(90deg,#a0c3ff 0.0%,#a9c1ff 6.2%,#b3c0ff 12.5%,#bdbeff 18.8%,#c8bdff 25.0%,#d3bbff 31.2%,#dfb9ff 37.5%,#ecb7ff 43.8%,#fab5ff 50.0%,#ffb1f7 56.2%,#ffacec 62.5%,#ffa8e2 68.8%,#ffa4da 75.0%,#ffa1d3 81.2%,#ff9fce 87.5%,#ff9cc8 93.8%,#ff9ac4 100.0%)"></div></div></div>
<svg width="1671" height="1009" style="left:0;top:0"><rect x="803" y="773" width="13" height="13" fill="none" stroke="#111" stroke-width="2"/><circle cx="769.5" cy="808" r="4.6" fill="#fff" stroke="#222" stroke-width="1.2"/><circle cx="767.5" cy="808" r="4.6" fill="#fff" stroke="#222" stroke-width="1.2"/></svg>
<div class="r" style="left:997px;top:665px;width:653px;height:224px;background:#000"></div>
<div class="r" style="left:998px;top:667px;width:634px;height:16px;background:#333"></div>
<div class="r" style="left:998px;top:683px;width:634px;height:17px;background:#151515"></div>
<div class="r" style="left:1632px;top:667px;width:17px;height:34px;background:#333"></div>
<div class="r" style="left:998px;top:700px;width:634px;height:31px;background:#3b3b3b"></div>
<div class="r" style="left:998px;top:731px;width:634px;height:31px;background:#7a7a7a"></div>
<div class="r" style="left:998px;top:762px;width:634px;height:31px;background:#3b3b3b"></div>
<div class="r" style="left:998px;top:793px;width:634px;height:31px;background:#7a7a7a"></div>
<div class="r" style="left:998px;top:824px;width:634px;height:31px;background:#3b3b3b"></div>
<div class="r" style="left:998px;top:855px;width:634px;height:15px;background:#7a7a7a"></div>
<div class="t" style="left:929.8px;width:400px;text-align:center;top:675.61px;font-size:17px;color:#f0f0f0;font-weight:400;">White</div>
<div class="t" style="left:1002.7px;width:400px;text-align:center;top:675.61px;font-size:17px;color:#f0f0f0;font-weight:400;">Red</div>
<div class="t" style="left:1076px;width:400px;text-align:center;top:675.61px;font-size:17px;color:#f0f0f0;font-weight:400;">Green</div>
<div class="t" style="left:1149px;width:400px;text-align:center;top:675.61px;font-size:17px;color:#f0f0f0;font-weight:400;">Blue</div>
<div class="t" style="left:1222px;width:400px;text-align:center;top:675.61px;font-size:17px;color:#f0f0f0;font-weight:400;">Cyan</div>
<div class="t" style="left:1300px;width:400px;text-align:center;top:675.61px;font-size:17px;color:#f0f0f0;font-weight:400;">Magenta</div>
<div class="t" style="left:1377.7px;width:400px;text-align:center;top:675.61px;font-size:17px;color:#f0f0f0;font-weight:400;">Yellow</div>
<div class="r" style="left:998px;top:700px;width:634px;height:170px;overflow:hidden">
<div class="t" style="left:13px;top:8.53px;font-size:16.5px;color:#f2f2f2;font-weight:700;">x: CIE31</div>
<div class="t" style="left:97.5px;top:7.69px;font-size:17.5px;color:#e8e8e8;font-weight:400;letter-spacing:-0.6px">0,3068</div>
<div class="t" style="left:175.9000000000001px;top:7.69px;font-size:17.5px;color:#e8e8e8;font-weight:400;letter-spacing:-0.6px">0,6487</div>
<div class="t" style="left:244.0px;top:7.69px;font-size:17.5px;color:#e8e8e8;font-weight:400;letter-spacing:-0.6px">0,2990</div>
<div class="t" style="left:321.79999999999995px;top:7.69px;font-size:17.5px;color:#e8e8e8;font-weight:400;letter-spacing:-0.6px">0,1469</div>
<div class="t" style="left:390.70000000000005px;top:7.69px;font-size:17.5px;color:#e8e8e8;font-weight:400;letter-spacing:-0.6px">0,2197</div>
<div class="t" style="left:468.0999999999999px;top:7.69px;font-size:17.5px;color:#e8e8e8;font-weight:400;letter-spacing:-0.6px">0,3118</div>
<div class="t" style="left:545.5px;top:7.69px;font-size:17.5px;color:#e8e8e8;font-weight:400;letter-spacing:-0.6px">0,4192</div>
<div class="t" style="left:623.4000000000001px;top:7.69px;font-size:17.5px;color:#e8e8e8;font-weight:400;letter-spacing:-0.6px">0,</div>
<div class="t" style="left:13px;top:39.53px;font-size:16.5px;color:#f2f2f2;font-weight:700;">y: CIE31</div>
<div class="t" style="left:97.5px;top:38.69px;font-size:17.5px;color:#e8e8e8;font-weight:400;letter-spacing:-0.6px">0,3217</div>
<div class="t" style="left:175.9000000000001px;top:38.69px;font-size:17.5px;color:#e8e8e8;font-weight:400;letter-spacing:-0.6px">0,3317</div>
<div class="t" style="left:244.0px;top:38.69px;font-size:17.5px;color:#e8e8e8;font-weight:400;letter-spacing:-0.6px">0,6025</div>
<div class="t" style="left:321.79999999999995px;top:38.69px;font-size:17.5px;color:#e8e8e8;font-weight:400;letter-spacing:-0.6px">0,0582</div>
<div class="t" style="left:390.70000000000005px;top:38.69px;font-size:17.5px;color:#e8e8e8;font-weight:400;letter-spacing:-0.6px">0,3189</div>
<div class="t" style="left:468.0999999999999px;top:38.69px;font-size:17.5px;color:#e8e8e8;font-weight:400;letter-spacing:-0.6px">0,1480</div>
<div class="t" style="left:545.5px;top:38.69px;font-size:17.5px;color:#e8e8e8;font-weight:400;letter-spacing:-0.6px">0,5063</div>
<div class="t" style="left:623.4000000000001px;top:38.69px;font-size:17.5px;color:#e8e8e8;font-weight:400;letter-spacing:-0.6px">0,</div>
<div class="t" style="left:13px;top:70.53px;font-size:16.5px;color:#f2f2f2;font-weight:700;">Y</div>
<div class="t" style="left:97.5px;top:69.69px;font-size:17.5px;color:#e8e8e8;font-weight:400;letter-spacing:-0.6px">304,2033</div>
<div class="t" style="left:175.9000000000001px;top:69.69px;font-size:17.5px;color:#e8e8e8;font-weight:400;letter-spacing:-0.6px">63,2626</div>
<div class="t" style="left:244.0px;top:69.69px;font-size:17.5px;color:#e8e8e8;font-weight:400;letter-spacing:-0.6px">215,4940</div>
<div class="t" style="left:321.79999999999995px;top:69.69px;font-size:17.5px;color:#e8e8e8;font-weight:400;letter-spacing:-0.6px">22,1842</div>
<div class="t" style="left:390.70000000000005px;top:69.69px;font-size:17.5px;color:#e8e8e8;font-weight:400;letter-spacing:-0.6px">237,8633</div>
<div class="t" style="left:468.0999999999999px;top:69.69px;font-size:17.5px;color:#e8e8e8;font-weight:400;letter-spacing:-0.6px">85,3395</div>
<div class="t" style="left:545.5px;top:69.69px;font-size:17.5px;color:#e8e8e8;font-weight:400;letter-spacing:-0.6px">281,1189</div>
<div class="t" style="left:623.4000000000001px;top:69.69px;font-size:17.5px;color:#e8e8e8;font-weight:400;letter-spacing:-0.6px">5</div>
<div class="t" style="left:13px;top:101.53px;font-size:16.5px;color:#f2f2f2;font-weight:700;">Target Y</div>
<div class="t" style="left:97.5px;top:100.69px;font-size:17.5px;color:#e8e8e8;font-weight:400;letter-spacing:-0.6px">311,0326</div>
<div class="t" style="left:175.9000000000001px;top:100.69px;font-size:17.5px;color:#e8e8e8;font-weight:400;letter-spacing:-0.6px">92,4889</div>
<div class="t" style="left:244.0px;top:100.69px;font-size:17.5px;color:#e8e8e8;font-weight:400;letter-spacing:-0.6px">195,1277</div>
<div class="t" style="left:321.79999999999995px;top:100.69px;font-size:17.5px;color:#e8e8e8;font-weight:400;letter-spacing:-0.6px">23,4160</div>
<div class="t" style="left:390.70000000000005px;top:100.69px;font-size:17.5px;color:#e8e8e8;font-weight:400;letter-spacing:-0.6px">218,5437</div>
<div class="t" style="left:468.0999999999999px;top:100.69px;font-size:17.5px;color:#e8e8e8;font-weight:400;letter-spacing:-0.6px">115,9049</div>
<div class="t" style="left:545.5px;top:100.69px;font-size:17.5px;color:#e8e8e8;font-weight:400;letter-spacing:-0.6px">287,6166</div>
<div class="t" style="left:623.4000000000001px;top:100.69px;font-size:17.5px;color:#e8e8e8;font-weight:400;letter-spacing:-0.6px">5</div>
<div class="t" style="left:13px;top:132.53px;font-size:16.5px;color:#f2f2f2;font-weight:700;">ΔE 2000</div>
<div class="t" style="left:97.5px;top:131.69px;font-size:17.5px;color:#e8e8e8;font-weight:400;letter-spacing:-0.6px">3,0718</div>
<div class="t" style="left:175.9000000000001px;top:131.69px;font-size:17.5px;color:#e8e8e8;font-weight:400;letter-spacing:-0.6px">7,1921</div>
<div class="t" style="left:244.0px;top:131.69px;font-size:17.5px;color:#e8e8e8;font-weight:400;letter-spacing:-0.6px">8,8587</div>
<div class="t" style="left:321.79999999999995px;top:131.69px;font-size:17.5px;color:#e8e8e8;font-weight:400;letter-spacing:-0.6px">0,5685</div>
<div class="t" style="left:390.70000000000005px;top:131.69px;font-size:17.5px;color:#e8e8e8;font-weight:400;letter-spacing:-0.6px">8,3226</div>
<div class="t" style="left:468.0999999999999px;top:131.69px;font-size:17.5px;color:#e8e8e8;font-weight:400;letter-spacing:-0.6px">7,6988</div>
<div class="t" style="left:545.5px;top:131.69px;font-size:17.5px;color:#e8e8e8;font-weight:400;letter-spacing:-0.6px">2,0812</div>
<div class="t" style="left:623.4000000000001px;top:131.69px;font-size:17.5px;color:#e8e8e8;font-weight:400;letter-spacing:-0.6px">3,</div>
<div class="t" style="left:13px;top:163.53px;font-size:16.5px;color:#f2f2f2;font-weight:700;">ΔE ITP</div>
<div class="t" style="left:97.5px;top:162.69px;font-size:17.5px;color:#e8e8e8;font-weight:400;letter-spacing:-0.6px">4,0663</div>
<div class="t" style="left:175.9000000000001px;top:162.69px;font-size:17.5px;color:#e8e8e8;font-weight:400;letter-spacing:-0.6px">27,4623</div>
<div class="t" style="left:244.0px;top:162.69px;font-size:17.5px;color:#e8e8e8;font-weight:400;letter-spacing:-0.6px">42,0713</div>
<div class="t" style="left:321.79999999999995px;top:162.69px;font-size:17.5px;color:#e8e8e8;font-weight:400;letter-spacing:-0.6px">8,1149</div>
<div class="t" style="left:390.70000000000005px;top:162.69px;font-size:17.5px;color:#e8e8e8;font-weight:400;letter-spacing:-0.6px">34,1061</div>
<div class="t" style="left:468.0999999999999px;top:162.69px;font-size:17.5px;color:#e8e8e8;font-weight:400;letter-spacing:-0.6px">35,0524</div>
<div class="t" style="left:545.5px;top:162.69px;font-size:17.5px;color:#e8e8e8;font-weight:400;letter-spacing:-0.6px">11,2872</div>
<div class="t" style="left:623.4000000000001px;top:162.69px;font-size:17.5px;color:#e8e8e8;font-weight:400;letter-spacing:-0.6px">3</div>
</div>
<div class="r" style="left:1632px;top:700px;width:17px;height:170px;background:#4e4e4e"></div>
<div class="r" style="left:1635px;top:702px;width:12px;height:16px;border-radius:3px;background:linear-gradient(#8a8a8a,#5a5a5a)"></div>
<svg style="left:1636px;top:706px" width="10" height="8"><path d="M0 7H10L5 1Z" fill="#2a2a2a"/></svg>
<div class="r" style="left:1635px;top:722px;width:12px;height:104px;border-radius:6px;background:#434343"></div>
<div class="r" style="left:1635px;top:852px;width:12px;height:16px;border-radius:3px;background:linear-gradient(#8a8a8a,#5a5a5a)"></div>
<svg style="left:1636px;top:856px" width="10" height="8"><path d="M0 1H10L5 7Z" fill="#2a2a2a"/></svg>
<div class="r" style="left:998px;top:870px;width:634px;height:19px;background:#505050"></div>
<div class="r" style="left:1001px;top:872px;width:14px;height:15px;border-radius:3px;background:linear-gradient(#8a8a8a,#5a5a5a)"></div>
<svg style="left:1004px;top:875px" width="8" height="10"><path d="M7 0V10L1 5Z" fill="#2a2a2a"/></svg>
<div class="r" style="left:1017px;top:873px;width:541px;height:13px;border-radius:7px;background:#434343"></div>
<div class="r" style="left:1617px;top:872px;width:14px;height:15px;border-radius:3px;background:linear-gradient(#8a8a8a,#5a5a5a)"></div>
<svg style="left:1620px;top:875px" width="8" height="10"><path d="M1 0V10L7 5Z" fill="#2a2a2a"/></svg>
<div class="r" style="left:1632px;top:870px;width:16.5px;height:19px;background:#333"></div>
<div class="r" style="left:1661px;top:42px;width:10px;height:891px;background:linear-gradient(90deg,rgba(17,17,17,0),rgba(17,17,17,0.9))"></div>
<div class="r" style="left:3.6px;top:933.5px;width:155.5px;height:80px;border-radius:5px;background:linear-gradient(#b0b0b0 0%,#8e8e8e 40%,#6a6a6a 75%,#5e5e5e 100%)"></div>
<div class="r" style="left:9.6px;top:939.5px;width:143.5px;height:45.5px;border-radius:5px;background:#c0c0c0;box-shadow:inset 1px 2px 2px rgba(0,0,0,0.45)"></div>
<div class="t" style="left:-118.7px;width:400px;text-align:center;top:992.15px;font-size:14px;color:#2e2e2e;font-weight:700;">White</div>
<div class="r" style="left:161.6px;top:933.5px;width:155.5px;height:80px;border-radius:5px;background:linear-gradient(#b0b0b0 0%,#8e8e8e 40%,#6a6a6a 75%,#5e5e5e 100%)"></div>
<div class="r" style="left:167.6px;top:939.5px;width:143.5px;height:45.5px;border-radius:5px;background:#bb0000;box-shadow:inset 1px 2px 2px rgba(0,0,0,0.45)"></div>
<div class="t" style="left:39.27999999999997px;width:400px;text-align:center;top:992.15px;font-size:14px;color:#2e2e2e;font-weight:700;">Red</div>
<div class="r" style="left:319.6px;top:933.5px;width:155.5px;height:80px;border-radius:5px;background:linear-gradient(#b0b0b0 0%,#8e8e8e 40%,#6a6a6a 75%,#5e5e5e 100%)"></div>
<div class="r" style="left:325.6px;top:939.5px;width:143.5px;height:45.5px;border-radius:5px;background:#00bb00;box-shadow:inset 1px 2px 2px rgba(0,0,0,0.45)"></div>
<div class="t" style="left:197.26px;width:400px;text-align:center;top:992.15px;font-size:14px;color:#2e2e2e;font-weight:700;">Green</div>
<div class="r" style="left:477.5px;top:933.5px;width:155.5px;height:80px;border-radius:5px;background:linear-gradient(#b0b0b0 0%,#8e8e8e 40%,#6a6a6a 75%,#5e5e5e 100%)"></div>
<div class="r" style="left:483.5px;top:939.5px;width:143.5px;height:45.5px;border-radius:5px;background:#0000bb;box-shadow:inset 1px 2px 2px rgba(0,0,0,0.45)"></div>
<div class="t" style="left:355.24px;width:400px;text-align:center;top:992.15px;font-size:14px;color:#2e2e2e;font-weight:700;">Blue</div>
<div class="r" style="left:635.5px;top:933.5px;width:155.5px;height:80px;border-radius:5px;background:linear-gradient(#b0b0b0 0%,#8e8e8e 40%,#6a6a6a 75%,#5e5e5e 100%)"></div>
<div class="r" style="left:641.5px;top:939.5px;width:143.5px;height:45.5px;border-radius:5px;background:#00c0c0;box-shadow:inset 1px 2px 2px rgba(0,0,0,0.45)"></div>
<div class="t" style="left:513.22px;width:400px;text-align:center;top:992.15px;font-size:14px;color:#2e2e2e;font-weight:700;">Cyan</div>
<div class="r" style="left:793.5px;top:933.5px;width:155.5px;height:80px;border-radius:5px;background:linear-gradient(#b0b0b0 0%,#8e8e8e 40%,#6a6a6a 75%,#5e5e5e 100%)"></div>
<div class="r" style="left:799.5px;top:939.5px;width:143.5px;height:45.5px;border-radius:5px;background:#bb00bb;box-shadow:inset 1px 2px 2px rgba(0,0,0,0.45)"></div>
<div class="t" style="left:671.2px;width:400px;text-align:center;top:992.15px;font-size:14px;color:#2e2e2e;font-weight:700;">Magenta</div>
<div class="r" style="left:951.5px;top:933.5px;width:155.5px;height:80px;border-radius:5px;background:linear-gradient(#b0b0b0 0%,#8e8e8e 40%,#6a6a6a 75%,#5e5e5e 100%)"></div>
<div class="r" style="left:957.5px;top:939.5px;width:143.5px;height:45.5px;border-radius:5px;background:#c0c000;box-shadow:inset 1px 2px 2px rgba(0,0,0,0.45)"></div>
<div class="t" style="left:829.1799999999998px;width:400px;text-align:center;top:992.15px;font-size:14px;color:#2e2e2e;font-weight:700;">Yellow</div>
<div class="r" style="left:1109px;top:934px;width:155px;height:80px;border-radius:5px;background:#2b2b2b"></div>
<div class="r" style="left:1115.8px;top:939.7px;width:142.5px;height:45px;border-radius:6px;background:#fff;box-shadow:inset 1px 2px 2px rgba(0,0,0,0.5)"></div>
<div class="t" style="left:987px;width:400px;text-align:center;top:992.15px;font-size:14px;color:#ffffff;font-weight:700;">100W</div>
<div class="r" style="left:1268px;top:933px;width:60px;height:23.5px;border-radius:5px 5px 0 0;background:linear-gradient(#b0b0b0,#8a8a8a)"></div>
<div class="r" style="left:1268px;top:957px;width:60px;height:60px;background:linear-gradient(#8e8e8e,#5e5e5e)"></div>
<div class="r" style="left:1288.5px;top:936px;width:19px;height:19px;border-radius:10px;background:linear-gradient(#777,#aaa)"></div>
<svg style="left:1291px;top:940px" width="14" height="8"><path d="M0 7.5H14L7 0.5Z" fill="#444"/></svg>
<div class="r" style="left:1278.5px;top:963.5px;width:39px;height:39px;border-radius:5px;border:2.5px solid #2a2a2a;background:linear-gradient(#a8a8a8,#7a7a7a)"></div>
<div class="r" style="left:1289px;top:975px;width:17px;height:17px;background:#000"></div>
<div class="r" style="left:1328.8px;top:933px;width:283.2px;height:38px;background:linear-gradient(#b4b4b4,#8e8e8e 50%,#6e6e6e)"></div>
<div class="r" style="left:1387.2px;top:933px;width:1.3px;height:38px;background:#444"></div>
<div class="r" style="left:1443.5px;top:933px;width:1.3px;height:38px;background:#444"></div>
<div class="r" style="left:1500px;top:933px;width:1.3px;height:38px;background:#444"></div>
<div class="r" style="left:1556.3px;top:933px;width:1.3px;height:38px;background:#444"></div>
<div class="r" style="left:1345.5px;top:939px;width:25px;height:25px;border-radius:13px;background:linear-gradient(#7e7e7e,#aaaaaa)"></div>
<div class="r" style="left:1402.5px;top:939px;width:25px;height:25px;border-radius:13px;background:linear-gradient(#7e7e7e,#aaaaaa)"></div>
<div class="r" style="left:1459.0px;top:939px;width:25px;height:25px;border-radius:13px;background:linear-gradient(#7e7e7e,#aaaaaa)"></div>
<div class="r" style="left:1515.5px;top:939px;width:25px;height:25px;border-radius:13px;background:linear-gradient(#7e7e7e,#aaaaaa)"></div>
<div class="r" style="left:1571.5px;top:939px;width:25px;height:25px;border-radius:13px;background:linear-gradient(#7e7e7e,#aaaaaa)"></div>
<div class="r" style="left:1352.5px;top:946px;width:11px;height:11px;background:#333"></div>
<svg style="left:1409px;top:944px" width="14" height="16"><path d="M2 1V15L13 8Z" fill="#333"/></svg>
<div class="t" style="left:1271.5px;width:400px;text-align:center;top:945.3px;font-size:15px;color:#333;font-weight:700;letter-spacing:-1px">[··]</div>
<div class="t" style="left:1328px;width:400px;text-align:center;top:940.38px;font-size:22px;color:#333;font-weight:700;">∞</div>
<svg style="left:1574px;top:941px" width="20" height="20" viewBox="0 0 20 20"><path d="M4 9A6 6 0 0 1 15 6" fill="none" stroke="#333" stroke-width="2.6"/><path d="M16 11A6 6 0 0 1 5 14" fill="none" stroke="#333" stroke-width="2.6"/><path d="M12 3L17 3L16 9Z" fill="#333"/><path d="M8 17L3 17L4 11Z" fill="#333"/></svg>
<div class="r" style="left:1328.8px;top:972.5px;width:170.5px;height:40px;background:linear-gradient(#b4b4b4,#909090 50%,#707070)"></div>
<div class="r" style="left:1501px;top:972.5px;width:170px;height:40px;background:linear-gradient(#b4b4b4,#909090 50%,#707070)"></div>
<div class="r" style="left:1499.3px;top:972px;width:1.7px;height:40px;background:#444"></div>
<div class="r" style="left:1328.8px;top:970.5px;width:342px;height:2px;background:#4a4a4a"></div>
<div class="r" style="left:1355.5px;top:978px;width:25px;height:25px;border-radius:13px;background:linear-gradient(#7e7e7e,#aaaaaa)"></div>
<div class="r" style="left:1622.5px;top:978px;width:25px;height:25px;border-radius:13px;background:linear-gradient(#7e7e7e,#aaaaaa)"></div>
<div class="t" style="left:1168px;width:400px;text-align:center;top:979.38px;font-size:22px;color:#3a3a3a;font-weight:700;">«</div>
<div class="t" style="left:1435px;width:400px;text-align:center;top:979.38px;font-size:22px;color:#3a3a3a;font-weight:700;">»</div>
<div class="t" style="left:1402px;top:978.14px;font-size:27px;color:#333;font-weight:700;">Back</div>
<div class="t" style="left:1535px;top:978.14px;font-size:27px;color:#333;font-weight:700;">Next</div>
<svg style="left:1622px;top:933px" width="34" height="34" viewBox="0 0 34 34"><g stroke="#ee1111" stroke-width="6.5" stroke-linecap="butt"><line x1="17" y1="1" x2="17" y2="33"/><line x1="3.1" y1="9" x2="30.9" y2="25"/><line x1="3.1" y1="25" x2="30.9" y2="9"/></g></svg>
</body></html>
